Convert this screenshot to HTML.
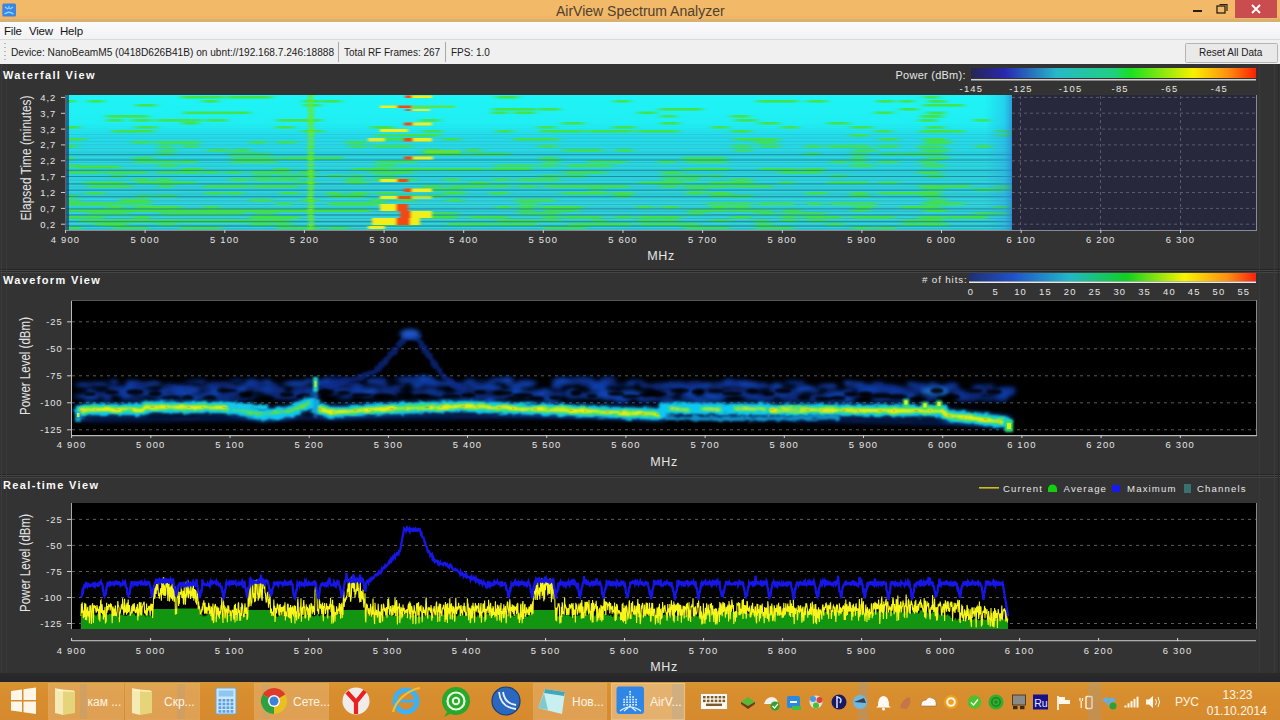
<!DOCTYPE html><html><head><meta charset="utf-8"><style>
*{margin:0;padding:0;box-sizing:border-box}
html,body{width:1280px;height:720px;overflow:hidden;background:#333;font-family:"Liberation Sans",sans-serif}
.a{position:absolute}
#title{left:0;top:0;width:1280px;height:21.5px;background:linear-gradient(#f2b968 0,#f2b968 16px,#f6b262 16px,#f4b464 18px,#f0b868 18px,#f0b868 19.5px,#d6b272 19.5px)}
#menu{left:0;top:21.5px;width:1280px;height:17.5px;background:linear-gradient(#fbfbfc,#f1f2f4);font-size:12px;color:#111}
#tool{left:0;top:39px;width:1280px;height:25px;background:#f0f0f0;border-top:1px solid #dadada;font-size:10.2px;color:#222}
#app{left:0;top:64px;width:1280px;height:609px;background:#333}
#bot{left:0;top:673px;width:1280px;height:9px;background:linear-gradient(#2a2a2a,#25252c)}
#task{left:0;top:681.5px;width:1280px;height:38.5px;background:linear-gradient(#cf9838 0,#d89430 2px,#d88e2e 10px,#d68a2e 38px)}
svg{position:absolute;left:0;top:0}
</style></head><body><div class="a" id="title"></div><div class="a" id="menu"></div><div class="a" id="tool"></div><div class="a" id="app"></div><div class="a" id="bot"></div><div class="a" id="task"></div><svg width="1280" height="720" viewBox="0 0 1280 720" font-family="Liberation Sans, sans-serif"><rect x="2.3" y="3.4" width="13.7" height="13.2" rx="1.5" fill="#3a86e4"/><path d="M5 7 L8 9 M13 7 L10 9 M9 6 V9 M4.5 14 Q9 10.5 13.5 14" stroke="#8fd4ff" stroke-width="1.3" fill="none"/><text x="556" y="15.5" font-size="14" fill="#4e4030" font-weight="normal" letter-spacing="0" text-anchor="start" >AirView Spectrum Analyzer</text><rect x="1193" y="10" width="9" height="2" fill="#2a2010"/><rect x="1217" y="6" width="8" height="7" fill="none" stroke="#2a2010" stroke-width="1.3"/><path d="M1219.5 4.5 H1227 V11" fill="none" stroke="#2a2010" stroke-width="1.2"/><rect x="1235" y="0" width="42" height="18" fill="#c94c4e"/><path d="M1252 5 L1260 13 M1260 5 L1252 13" stroke="#fff" stroke-width="1.8"/><text x="4" y="34.5" font-size="11.5" fill="#151515" font-weight="normal" letter-spacing="-0.2" text-anchor="start" >File</text><text x="29" y="34.5" font-size="11.5" fill="#151515" font-weight="normal" letter-spacing="-0.2" text-anchor="start" >View</text><text x="60" y="34.5" font-size="11.5" fill="#151515" font-weight="normal" letter-spacing="-0.2" text-anchor="start" >Help</text><rect x="4" y="43" width="2" height="1" fill="#b8b8b8"/><rect x="4" y="47" width="2" height="1" fill="#b8b8b8"/><rect x="4" y="51" width="2" height="1" fill="#b8b8b8"/><rect x="4" y="55" width="2" height="1" fill="#b8b8b8"/><rect x="4" y="59" width="2" height="1" fill="#b8b8b8"/><text x="11" y="55.8" font-size="10.15" fill="#202020" font-weight="normal" letter-spacing="0" text-anchor="start" >Device: NanoBeamM5 (0418D626B41B) on ubnt://192.168.7.246:18888</text><rect x="338" y="42" width="1" height="20" fill="#a8a8a8"/><text x="344" y="55.8" font-size="10" fill="#202020" font-weight="normal" letter-spacing="0" text-anchor="start" >Total RF Frames: 267</text><rect x="445" y="42" width="1" height="20" fill="#a8a8a8"/><text x="451" y="55.8" font-size="10" fill="#202020" font-weight="normal" letter-spacing="0" text-anchor="start" >FPS: 1.0</text><rect x="1185.5" y="43.5" width="92" height="19" rx="1" fill="#e9e9e9" stroke="#b4b4b4"/><text x="1199" y="55.8" font-size="10" fill="#202020" font-weight="normal" letter-spacing="0" text-anchor="start" >Reset All Data</text><rect x="0" y="269" width="1280" height="1" fill="#242424"/><rect x="0" y="270" width="1280" height="1" fill="#464646"/><rect x="0" y="271" width="1280" height="1" fill="#282828"/><rect x="0" y="272" width="1280" height="1" fill="#444444"/><rect x="0" y="474" width="1280" height="1" fill="#242424"/><rect x="0" y="475" width="1280" height="1" fill="#464646"/><rect x="0" y="476" width="1280" height="1" fill="#282828"/><rect x="0" y="477" width="1280" height="1" fill="#444444"/><rect x="1" y="64" width="1" height="609" fill="#3e3e3e"/><rect x="6" y="64" width="1" height="609" fill="#3a3a3a"/><rect x="1259" y="64" width="1" height="609" fill="#3a3a3a"/><rect x="1274" y="64" width="1" height="609" fill="#3c3c3c"/><rect x="1278" y="64" width="1" height="609" fill="#2a2a2a"/><text x="3" y="78.7" font-size="11" fill="#fafafa" font-weight="bold" letter-spacing="1.35" text-anchor="start" >Waterfall View</text><text x="3" y="284" font-size="11" fill="#fafafa" font-weight="bold" letter-spacing="1.35" text-anchor="start" >Waveform View</text><text x="3" y="489" font-size="11" fill="#fafafa" font-weight="bold" letter-spacing="1.35" text-anchor="start" >Real-time View</text><rect x="65" y="95" width="1191" height="135" fill="#28283c"/><rect x="1256" y="95" width="1" height="136" fill="#8a8a96"/><rect x="65" y="230" width="1192" height="1" fill="#8a8a96"/><defs><clipPath id="wfc"><rect x="66" y="95" width="946" height="135"/></clipPath><linearGradient id="wbase" x1="0" y1="0" x2="0" y2="1"><stop offset="0" stop-color="#1ef4f6"/><stop offset="0.22" stop-color="#20eef2"/><stop offset="0.30" stop-color="#26dcea"/><stop offset="0.45" stop-color="#2cd8e2"/><stop offset="1" stop-color="#36d4d8"/></linearGradient><linearGradient id="wright" x1="0" x2="1"><stop offset="0" stop-color="#2a9ae0" stop-opacity="0"/><stop offset="0.7" stop-color="#2a9ae0" stop-opacity="0.35"/><stop offset="1" stop-color="#2a80d0" stop-opacity="0.75"/></linearGradient><filter id="wb" filterUnits="userSpaceOnUse" x="50" y="85" width="980" height="160"><feGaussianBlur stdDeviation="3.8 0.75"/></filter><filter id="wb2" filterUnits="userSpaceOnUse" x="50" y="85" width="980" height="160"><feGaussianBlur stdDeviation="1.6 0.5"/></filter></defs><g clip-path="url(#wfc)"><rect x="66" y="95" width="946" height="136" fill="url(#wbase)"/><rect x="66" y="124" width="946" height="1" fill="#1a6a98" opacity="0.03"/><rect x="66" y="126" width="946" height="1" fill="#1a6a98" opacity="0.03"/><rect x="66" y="128" width="946" height="1" fill="#1a6a98" opacity="0.03"/><rect x="66" y="130" width="946" height="1" fill="#1a6a98" opacity="0.03"/><rect x="66" y="132" width="946" height="1" fill="#1a6a98" opacity="0.03"/><rect x="66" y="134" width="946" height="1" fill="#1a6a98" opacity="0.04"/><rect x="66" y="136" width="946" height="1" fill="#1a6a98" opacity="0.04"/><rect x="66" y="138" width="946" height="1" fill="#1a6a98" opacity="0.04"/><rect x="66" y="140" width="946" height="1" fill="#1a6a98" opacity="0.04"/><rect x="66" y="142" width="946" height="1" fill="#1a6a98" opacity="0.04"/><rect x="66" y="144" width="946" height="1" fill="#1a6a98" opacity="0.04"/><rect x="66" y="146" width="946" height="1" fill="#1a6a98" opacity="0.04"/><rect x="66" y="148" width="946" height="1" fill="#1a6a98" opacity="0.04"/><rect x="66" y="150" width="946" height="1" fill="#1a6a98" opacity="0.04"/><rect x="66" y="152" width="946" height="1" fill="#1a6a98" opacity="0.05"/><rect x="66" y="154" width="946" height="1" fill="#1a6a98" opacity="0.05"/><rect x="66" y="156" width="946" height="1" fill="#1a6a98" opacity="0.05"/><rect x="66" y="158" width="946" height="1" fill="#1a6a98" opacity="0.05"/><rect x="66" y="160" width="946" height="1" fill="#1a6a98" opacity="0.05"/><rect x="66" y="162" width="946" height="1" fill="#1a6a98" opacity="0.05"/><rect x="66" y="164" width="946" height="1" fill="#1a6a98" opacity="0.05"/><rect x="66" y="166" width="946" height="1" fill="#1a6a98" opacity="0.05"/><rect x="66" y="168" width="946" height="1" fill="#1a6a98" opacity="0.05"/><rect x="66" y="170" width="946" height="1" fill="#1a6a98" opacity="0.06"/><rect x="66" y="172" width="946" height="1" fill="#1a6a98" opacity="0.06"/><rect x="66" y="174" width="946" height="1" fill="#1a6a98" opacity="0.06"/><rect x="66" y="176" width="946" height="1" fill="#1a6a98" opacity="0.06"/><rect x="66" y="178" width="946" height="1" fill="#1a6a98" opacity="0.06"/><rect x="66" y="180" width="946" height="1" fill="#1a6a98" opacity="0.06"/><rect x="66" y="182" width="946" height="1" fill="#1a6a98" opacity="0.06"/><rect x="66" y="184" width="946" height="1" fill="#1a6a98" opacity="0.06"/><rect x="66" y="186" width="946" height="1" fill="#1a6a98" opacity="0.06"/><rect x="66" y="188" width="946" height="1" fill="#1a6a98" opacity="0.07"/><rect x="66" y="190" width="946" height="1" fill="#1a6a98" opacity="0.07"/><rect x="66" y="192" width="946" height="1" fill="#1a6a98" opacity="0.07"/><rect x="66" y="194" width="946" height="1" fill="#1a6a98" opacity="0.07"/><rect x="66" y="196" width="946" height="1" fill="#1a6a98" opacity="0.07"/><rect x="66" y="198" width="946" height="1" fill="#1a6a98" opacity="0.07"/><rect x="66" y="200" width="946" height="1" fill="#1a6a98" opacity="0.07"/><rect x="66" y="202" width="946" height="1" fill="#1a6a98" opacity="0.07"/><rect x="66" y="204" width="946" height="1" fill="#1a6a98" opacity="0.07"/><rect x="66" y="206" width="946" height="1" fill="#1a6a98" opacity="0.08"/><rect x="66" y="208" width="946" height="1" fill="#1a6a98" opacity="0.08"/><rect x="66" y="210" width="946" height="1" fill="#1a6a98" opacity="0.08"/><rect x="66" y="212" width="946" height="1" fill="#1a6a98" opacity="0.08"/><rect x="66" y="214" width="946" height="1" fill="#1a6a98" opacity="0.08"/><rect x="66" y="216" width="946" height="1" fill="#1a6a98" opacity="0.08"/><rect x="66" y="218" width="946" height="1" fill="#1a6a98" opacity="0.08"/><rect x="66" y="220" width="946" height="1" fill="#1a6a98" opacity="0.08"/><rect x="66" y="222" width="946" height="1" fill="#1a6a98" opacity="0.08"/><rect x="66" y="224" width="946" height="1" fill="#1a6a98" opacity="0.09"/><rect x="66" y="226" width="946" height="1" fill="#1a6a98" opacity="0.09"/><rect x="66" y="228" width="946" height="1" fill="#1a6a98" opacity="0.09"/><rect x="66" y="230" width="946" height="1" fill="#1a6a98" opacity="0.09"/><rect x="66" y="134" width="946" height="1" fill="#12708e" opacity="0.12"/><rect x="66" y="137.5" width="946" height="1" fill="#12708e" opacity="0.13"/><rect x="66" y="141" width="946" height="1" fill="#12708e" opacity="0.13"/><rect x="66" y="144.5" width="946" height="1" fill="#12708e" opacity="0.14"/><rect x="66" y="148" width="946" height="1" fill="#12708e" opacity="0.14"/><rect x="66" y="151.5" width="946" height="1" fill="#12708e" opacity="0.15"/><rect x="66" y="155" width="946" height="1" fill="#12708e" opacity="0.16"/><rect x="66" y="158.5" width="946" height="1" fill="#12708e" opacity="0.16"/><rect x="66" y="162" width="946" height="1" fill="#12708e" opacity="0.17"/><rect x="66" y="165.5" width="946" height="1" fill="#12708e" opacity="0.17"/><rect x="66" y="169" width="946" height="1" fill="#12708e" opacity="0.18"/><rect x="66" y="172.5" width="946" height="1" fill="#12708e" opacity="0.18"/><rect x="66" y="176" width="946" height="1" fill="#12708e" opacity="0.19"/><rect x="66" y="179.5" width="946" height="1" fill="#12708e" opacity="0.20"/><rect x="66" y="183" width="946" height="1" fill="#12708e" opacity="0.20"/><rect x="66" y="186.5" width="946" height="1" fill="#12708e" opacity="0.21"/><rect x="66" y="190" width="946" height="1" fill="#12708e" opacity="0.21"/><rect x="66" y="193.5" width="946" height="1" fill="#12708e" opacity="0.22"/><rect x="66" y="197" width="946" height="1" fill="#12708e" opacity="0.23"/><rect x="66" y="200.5" width="946" height="1" fill="#12708e" opacity="0.23"/><rect x="66" y="204" width="946" height="1" fill="#12708e" opacity="0.24"/><rect x="66" y="207.5" width="946" height="1" fill="#12708e" opacity="0.24"/><rect x="66" y="211" width="946" height="1" fill="#12708e" opacity="0.25"/><rect x="66" y="214.5" width="946" height="1" fill="#12708e" opacity="0.26"/><rect x="66" y="218" width="946" height="1" fill="#12708e" opacity="0.26"/><rect x="66" y="221.5" width="946" height="1" fill="#12708e" opacity="0.27"/><rect x="66" y="225" width="946" height="1" fill="#12708e" opacity="0.27"/><rect x="66" y="228.5" width="946" height="1" fill="#12708e" opacity="0.28"/><g fill="#44e23c" filter="url(#wb)" opacity="0.92"><rect x="181" y="96" width="43" height="2.6"/><rect x="227" y="96" width="45" height="2.6"/><rect x="496" y="96" width="22" height="2.6"/><rect x="924" y="96" width="15" height="2.6"/><rect x="58" y="100" width="17" height="2.6"/><rect x="88" y="100" width="16" height="2.6"/><rect x="203" y="100" width="15" height="2.6"/><rect x="303" y="100" width="17" height="2.6"/><rect x="322" y="100" width="19" height="2.6"/><rect x="614" y="100" width="16" height="2.6"/><rect x="757" y="100" width="41" height="2.6"/><rect x="807" y="100" width="20" height="2.6"/><rect x="877" y="100" width="17" height="2.6"/><rect x="899" y="100" width="15" height="2.6"/><rect x="136" y="104" width="20" height="2.6"/><rect x="304" y="104" width="17" height="2.6"/><rect x="923" y="104" width="41" height="2.6"/><rect x="493" y="108" width="43" height="2.6"/><rect x="539" y="108" width="21" height="2.6"/><rect x="659" y="108" width="43" height="2.6"/><rect x="900" y="108" width="18" height="2.6"/><rect x="184" y="111.5" width="46" height="2.6"/><rect x="230" y="111.5" width="20" height="2.6"/><rect x="492" y="111.5" width="15" height="2.6"/><rect x="514" y="111.5" width="21" height="2.6"/><rect x="638" y="111.5" width="18" height="2.6"/><rect x="875" y="111.5" width="18" height="2.6"/><rect x="106" y="115" width="42" height="2.6"/><rect x="661" y="115" width="15" height="2.6"/><rect x="731" y="115" width="18" height="2.6"/><rect x="107" y="119" width="16" height="2.6"/><rect x="131" y="119" width="22" height="2.6"/><rect x="157" y="119" width="45" height="2.6"/><rect x="206" y="119" width="21" height="2.6"/><rect x="277" y="119" width="45" height="2.6"/><rect x="420" y="119" width="20" height="2.6"/><rect x="735" y="119" width="22" height="2.6"/><rect x="974" y="119" width="16" height="2.6"/><rect x="182" y="122" width="16" height="2.6"/><rect x="562" y="122" width="22" height="2.6"/><rect x="661" y="122" width="18" height="2.6"/><rect x="759" y="122" width="20" height="2.6"/><rect x="828" y="122" width="21" height="2.6"/><rect x="63" y="126" width="17" height="2.6"/><rect x="135" y="126" width="22" height="2.6"/><rect x="276" y="126" width="18" height="2.6"/><rect x="371" y="126" width="22" height="2.6"/><rect x="538" y="126" width="17" height="2.6"/><rect x="613" y="126" width="22" height="2.6"/><rect x="712" y="126" width="16" height="2.6"/><rect x="782" y="126" width="16" height="2.6"/><rect x="851" y="126" width="21" height="2.6"/><rect x="112" y="130" width="42" height="2.6"/><rect x="302" y="130" width="21" height="2.6"/><rect x="423" y="130" width="19" height="2.6"/><rect x="496" y="130" width="17" height="2.6"/><rect x="540" y="130" width="44" height="2.6"/><rect x="587" y="130" width="46" height="2.6"/><rect x="637" y="130" width="42" height="2.6"/><rect x="731" y="130" width="20" height="2.6"/><rect x="875" y="130" width="17" height="2.6"/><rect x="923" y="130" width="41" height="2.6"/><rect x="995" y="130" width="21" height="2.6"/><rect x="376" y="134" width="16" height="2.6"/><rect x="394" y="134" width="46" height="2.6"/><rect x="850" y="134" width="18" height="2.6"/><rect x="998" y="134" width="44" height="2.6"/><rect x="63" y="138" width="22" height="2.6"/><rect x="376" y="138" width="43" height="2.6"/><rect x="444" y="138" width="16" height="2.6"/><rect x="514" y="138" width="45" height="2.6"/><rect x="734" y="138" width="45" height="2.6"/><rect x="879" y="138" width="19" height="2.6"/><rect x="132" y="141" width="18" height="2.6"/><rect x="155" y="141" width="45" height="2.6"/><rect x="250" y="141" width="16" height="2.6"/><rect x="277" y="141" width="19" height="2.6"/><rect x="346" y="141" width="20" height="2.6"/><rect x="755" y="141" width="21" height="2.6"/><rect x="60" y="145" width="17" height="2.6"/><rect x="158" y="145" width="15" height="2.6"/><rect x="182" y="145" width="17" height="2.6"/><rect x="349" y="145" width="17" height="2.6"/><rect x="372" y="145" width="40" height="2.6"/><rect x="539" y="145" width="18" height="2.6"/><rect x="732" y="145" width="20" height="2.6"/><rect x="760" y="145" width="20" height="2.6"/><rect x="805" y="145" width="16" height="2.6"/><rect x="827" y="145" width="43" height="2.6"/><rect x="878" y="145" width="21" height="2.6"/><rect x="976" y="145" width="16" height="2.6"/><rect x="160" y="149" width="16" height="2.6"/><rect x="208" y="149" width="20" height="2.6"/><rect x="232" y="149" width="19" height="2.6"/><rect x="423" y="149" width="16" height="2.6"/><rect x="466" y="149" width="15" height="2.6"/><rect x="563" y="149" width="40" height="2.6"/><rect x="616" y="149" width="17" height="2.6"/><rect x="735" y="149" width="16" height="2.6"/><rect x="854" y="149" width="22" height="2.6"/><rect x="157" y="153" width="17" height="2.6"/><rect x="228" y="153" width="42" height="2.6"/><rect x="421" y="153" width="46" height="2.6"/><rect x="470" y="153" width="40" height="2.6"/><rect x="804" y="153" width="15" height="2.6"/><rect x="850" y="153" width="18" height="2.6"/><rect x="880" y="153" width="19" height="2.6"/><rect x="901" y="153" width="44" height="2.6"/><rect x="58" y="157" width="15" height="2.6"/><rect x="133" y="157" width="21" height="2.6"/><rect x="231" y="157" width="45" height="2.6"/><rect x="279" y="157" width="45" height="2.6"/><rect x="325" y="157" width="18" height="2.6"/><rect x="540" y="157" width="18" height="2.6"/><rect x="682" y="157" width="44" height="2.6"/><rect x="851" y="157" width="15" height="2.6"/><rect x="134" y="160.5" width="42" height="2.6"/><rect x="178" y="160.5" width="19" height="2.6"/><rect x="231" y="160.5" width="45" height="2.6"/><rect x="376" y="160.5" width="40" height="2.6"/><rect x="543" y="160.5" width="17" height="2.6"/><rect x="588" y="160.5" width="21" height="2.6"/><rect x="610" y="160.5" width="16" height="2.6"/><rect x="658" y="160.5" width="18" height="2.6"/><rect x="686" y="160.5" width="41" height="2.6"/><rect x="831" y="160.5" width="16" height="2.6"/><rect x="852" y="160.5" width="15" height="2.6"/><rect x="878" y="160.5" width="20" height="2.6"/><rect x="64" y="164.5" width="15" height="2.6"/><rect x="159" y="164.5" width="18" height="2.6"/><rect x="375" y="164.5" width="21" height="2.6"/><rect x="495" y="164.5" width="39" height="2.6"/><rect x="540" y="164.5" width="17" height="2.6"/><rect x="567" y="164.5" width="45" height="2.6"/><rect x="851" y="164.5" width="22" height="2.6"/><rect x="181" y="168" width="22" height="2.6"/><rect x="274" y="168" width="15" height="2.6"/><rect x="352" y="168" width="40" height="2.6"/><rect x="397" y="168" width="43" height="2.6"/><rect x="442" y="168" width="43" height="2.6"/><rect x="490" y="168" width="41" height="2.6"/><rect x="684" y="168" width="46" height="2.6"/><rect x="760" y="168" width="19" height="2.6"/><rect x="781" y="168" width="15" height="2.6"/><rect x="802" y="168" width="22" height="2.6"/><rect x="63" y="171" width="39" height="2.6"/><rect x="106" y="171" width="41" height="2.6"/><rect x="156" y="171" width="21" height="2.6"/><rect x="178" y="171" width="22" height="2.6"/><rect x="203" y="171" width="16" height="2.6"/><rect x="226" y="171" width="16" height="2.6"/><rect x="251" y="171" width="40" height="2.6"/><rect x="298" y="171" width="18" height="2.6"/><rect x="370" y="171" width="43" height="2.6"/><rect x="564" y="171" width="42" height="2.6"/><rect x="662" y="171" width="20" height="2.6"/><rect x="778" y="171" width="44" height="2.6"/><rect x="110" y="175" width="15" height="2.6"/><rect x="252" y="175" width="21" height="2.6"/><rect x="278" y="175" width="39" height="2.6"/><rect x="327" y="175" width="17" height="2.6"/><rect x="348" y="175" width="16" height="2.6"/><rect x="376" y="175" width="22" height="2.6"/><rect x="540" y="175" width="20" height="2.6"/><rect x="565" y="175" width="21" height="2.6"/><rect x="661" y="175" width="42" height="2.6"/><rect x="708" y="175" width="16" height="2.6"/><rect x="831" y="175" width="15" height="2.6"/><rect x="926" y="175" width="17" height="2.6"/><rect x="133" y="178.5" width="17" height="2.6"/><rect x="156" y="178.5" width="16" height="2.6"/><rect x="229" y="178.5" width="20" height="2.6"/><rect x="254" y="178.5" width="45" height="2.6"/><rect x="346" y="178.5" width="18" height="2.6"/><rect x="373" y="178.5" width="43" height="2.6"/><rect x="444" y="178.5" width="16" height="2.6"/><rect x="493" y="178.5" width="17" height="2.6"/><rect x="517" y="178.5" width="42" height="2.6"/><rect x="664" y="178.5" width="15" height="2.6"/><rect x="683" y="178.5" width="16" height="2.6"/><rect x="731" y="178.5" width="20" height="2.6"/><rect x="84" y="181.5" width="41" height="2.6"/><rect x="136" y="181.5" width="46" height="2.6"/><rect x="178" y="181.5" width="18" height="2.6"/><rect x="298" y="181.5" width="19" height="2.6"/><rect x="346" y="181.5" width="21" height="2.6"/><rect x="469" y="181.5" width="20" height="2.6"/><rect x="639" y="181.5" width="45" height="2.6"/><rect x="709" y="181.5" width="44" height="2.6"/><rect x="779" y="181.5" width="15" height="2.6"/><rect x="828" y="181.5" width="40" height="2.6"/><rect x="879" y="181.5" width="19" height="2.6"/><rect x="88" y="185" width="44" height="2.6"/><rect x="158" y="185" width="15" height="2.6"/><rect x="204" y="185" width="45" height="2.6"/><rect x="253" y="185" width="45" height="2.6"/><rect x="422" y="185" width="20" height="2.6"/><rect x="448" y="185" width="42" height="2.6"/><rect x="493" y="185" width="17" height="2.6"/><rect x="518" y="185" width="19" height="2.6"/><rect x="544" y="185" width="46" height="2.6"/><rect x="590" y="185" width="22" height="2.6"/><rect x="611" y="185" width="18" height="2.6"/><rect x="660" y="185" width="18" height="2.6"/><rect x="683" y="185" width="46" height="2.6"/><rect x="732" y="185" width="40" height="2.6"/><rect x="925" y="185" width="46" height="2.6"/><rect x="995" y="185" width="41" height="2.6"/><rect x="424" y="188.5" width="39" height="2.6"/><rect x="589" y="188.5" width="15" height="2.6"/><rect x="687" y="188.5" width="20" height="2.6"/><rect x="974" y="188.5" width="41" height="2.6"/><rect x="86" y="192" width="18" height="2.6"/><rect x="205" y="192" width="18" height="2.6"/><rect x="226" y="192" width="17" height="2.6"/><rect x="280" y="192" width="19" height="2.6"/><rect x="326" y="192" width="15" height="2.6"/><rect x="350" y="192" width="18" height="2.6"/><rect x="376" y="192" width="21" height="2.6"/><rect x="443" y="192" width="22" height="2.6"/><rect x="490" y="192" width="18" height="2.6"/><rect x="562" y="192" width="46" height="2.6"/><rect x="613" y="192" width="20" height="2.6"/><rect x="686" y="192" width="18" height="2.6"/><rect x="709" y="192" width="22" height="2.6"/><rect x="806" y="192" width="21" height="2.6"/><rect x="851" y="192" width="16" height="2.6"/><rect x="879" y="192" width="39" height="2.6"/><rect x="63" y="195" width="15" height="2.6"/><rect x="136" y="195" width="15" height="2.6"/><rect x="156" y="195" width="21" height="2.6"/><rect x="398" y="195" width="20" height="2.6"/><rect x="423" y="195" width="21" height="2.6"/><rect x="613" y="195" width="18" height="2.6"/><rect x="710" y="195" width="42" height="2.6"/><rect x="851" y="195" width="19" height="2.6"/><rect x="58" y="199" width="21" height="2.6"/><rect x="250" y="199" width="22" height="2.6"/><rect x="301" y="199" width="17" height="2.6"/><rect x="370" y="199" width="15" height="2.6"/><rect x="399" y="199" width="15" height="2.6"/><rect x="446" y="199" width="17" height="2.6"/><rect x="515" y="199" width="40" height="2.6"/><rect x="63" y="202.5" width="43" height="2.6"/><rect x="107" y="202.5" width="44" height="2.6"/><rect x="276" y="202.5" width="16" height="2.6"/><rect x="328" y="202.5" width="45" height="2.6"/><rect x="370" y="202.5" width="16" height="2.6"/><rect x="519" y="202.5" width="18" height="2.6"/><rect x="707" y="202.5" width="45" height="2.6"/><rect x="759" y="202.5" width="19" height="2.6"/><rect x="779" y="202.5" width="15" height="2.6"/><rect x="807" y="202.5" width="15" height="2.6"/><rect x="831" y="202.5" width="46" height="2.6"/><rect x="925" y="202.5" width="39" height="2.6"/><rect x="107" y="206" width="16" height="2.6"/><rect x="135" y="206" width="46" height="2.6"/><rect x="204" y="206" width="15" height="2.6"/><rect x="496" y="206" width="15" height="2.6"/><rect x="519" y="206" width="16" height="2.6"/><rect x="541" y="206" width="21" height="2.6"/><rect x="562" y="206" width="21" height="2.6"/><rect x="637" y="206" width="16" height="2.6"/><rect x="662" y="206" width="17" height="2.6"/><rect x="711" y="206" width="18" height="2.6"/><rect x="733" y="206" width="16" height="2.6"/><rect x="855" y="206" width="19" height="2.6"/><rect x="901" y="206" width="39" height="2.6"/><rect x="994" y="206" width="21" height="2.6"/><rect x="60" y="209" width="45" height="2.6"/><rect x="202" y="209" width="21" height="2.6"/><rect x="228" y="209" width="42" height="2.6"/><rect x="278" y="209" width="15" height="2.6"/><rect x="299" y="209" width="44" height="2.6"/><rect x="350" y="209" width="16" height="2.6"/><rect x="518" y="209" width="16" height="2.6"/><rect x="544" y="209" width="18" height="2.6"/><rect x="562" y="209" width="17" height="2.6"/><rect x="688" y="209" width="40" height="2.6"/><rect x="731" y="209" width="41" height="2.6"/><rect x="783" y="209" width="18" height="2.6"/><rect x="851" y="209" width="18" height="2.6"/><rect x="928" y="209" width="19" height="2.6"/><rect x="88" y="212.5" width="41" height="2.6"/><rect x="228" y="212.5" width="16" height="2.6"/><rect x="254" y="212.5" width="22" height="2.6"/><rect x="420" y="212.5" width="39" height="2.6"/><rect x="519" y="212.5" width="42" height="2.6"/><rect x="688" y="212.5" width="17" height="2.6"/><rect x="756" y="212.5" width="20" height="2.6"/><rect x="783" y="212.5" width="21" height="2.6"/><rect x="804" y="212.5" width="21" height="2.6"/><rect x="973" y="212.5" width="39" height="2.6"/><rect x="63" y="216" width="21" height="2.6"/><rect x="86" y="216" width="17" height="2.6"/><rect x="133" y="216" width="17" height="2.6"/><rect x="418" y="216" width="39" height="2.6"/><rect x="469" y="216" width="39" height="2.6"/><rect x="543" y="216" width="15" height="2.6"/><rect x="563" y="216" width="39" height="2.6"/><rect x="615" y="216" width="17" height="2.6"/><rect x="638" y="216" width="44" height="2.6"/><rect x="731" y="216" width="20" height="2.6"/><rect x="781" y="216" width="15" height="2.6"/><rect x="803" y="216" width="40" height="2.6"/><rect x="851" y="216" width="44" height="2.6"/><rect x="947" y="216" width="40" height="2.6"/><rect x="111" y="219.5" width="39" height="2.6"/><rect x="496" y="219.5" width="44" height="2.6"/><rect x="543" y="219.5" width="18" height="2.6"/><rect x="592" y="219.5" width="15" height="2.6"/><rect x="637" y="219.5" width="18" height="2.6"/><rect x="658" y="219.5" width="20" height="2.6"/><rect x="710" y="219.5" width="21" height="2.6"/><rect x="754" y="219.5" width="15" height="2.6"/><rect x="781" y="219.5" width="16" height="2.6"/><rect x="808" y="219.5" width="17" height="2.6"/><rect x="903" y="219.5" width="40" height="2.6"/><rect x="110" y="223" width="17" height="2.6"/><rect x="159" y="223" width="16" height="2.6"/><rect x="251" y="223" width="20" height="2.6"/><rect x="275" y="223" width="17" height="2.6"/><rect x="373" y="223" width="45" height="2.6"/><rect x="447" y="223" width="46" height="2.6"/><rect x="496" y="223" width="41" height="2.6"/><rect x="568" y="223" width="22" height="2.6"/><rect x="588" y="223" width="44" height="2.6"/><rect x="640" y="223" width="46" height="2.6"/><rect x="684" y="223" width="15" height="2.6"/><rect x="756" y="223" width="16" height="2.6"/><rect x="826" y="223" width="18" height="2.6"/><rect x="902" y="223" width="17" height="2.6"/><rect x="64" y="226.5" width="18" height="2.6"/><rect x="112" y="226.5" width="20" height="2.6"/><rect x="131" y="226.5" width="17" height="2.6"/><rect x="179" y="226.5" width="43" height="2.6"/><rect x="277" y="226.5" width="44" height="2.6"/><rect x="328" y="226.5" width="20" height="2.6"/><rect x="543" y="226.5" width="44" height="2.6"/><rect x="684" y="226.5" width="46" height="2.6"/><rect x="755" y="226.5" width="39" height="2.6"/><rect x="852" y="226.5" width="20" height="2.6"/><rect x="876" y="226.5" width="20" height="2.6"/><rect x="928" y="100" width="18" height="2.8"/><rect x="927" y="111.5" width="18" height="2.8"/><rect x="921" y="115" width="22" height="2.8"/><rect x="919" y="119" width="18" height="2.8"/><rect x="926" y="126" width="18" height="2.8"/><rect x="920" y="130" width="26" height="2.8"/><rect x="924" y="138" width="22" height="2.8"/><rect x="925" y="141" width="26" height="2.8"/><rect x="918" y="145" width="26" height="2.8"/><rect x="922" y="149" width="26" height="2.8"/><rect x="919" y="153" width="18" height="2.8"/><rect x="926" y="157" width="22" height="2.8"/><rect x="919" y="160.5" width="18" height="2.8"/><rect x="923" y="164.5" width="22" height="2.8"/><rect x="918" y="171" width="22" height="2.8"/><rect x="926" y="175" width="18" height="2.8"/><rect x="919" y="185" width="26" height="2.8"/><rect x="922" y="188.5" width="22" height="2.8"/><rect x="918" y="192" width="22" height="2.8"/><rect x="923" y="195" width="18" height="2.8"/><rect x="928" y="199" width="18" height="2.8"/><rect x="923" y="202.5" width="26" height="2.8"/><rect x="924" y="209" width="22" height="2.8"/><rect x="919" y="216" width="26" height="2.8"/><rect x="923" y="219.5" width="18" height="2.8"/><rect x="921" y="223" width="26" height="2.8"/><rect x="80" y="209" width="290" height="3"/><rect x="80" y="219.5" width="210" height="3"/><rect x="76" y="165.5" width="44" height="3"/><rect x="70" y="202.5" width="40" height="3"/><rect x="120" y="199" width="30" height="3"/><rect x="160" y="212.5" width="70" height="3"/><rect x="96" y="223" width="29" height="3"/><rect x="330" y="195" width="35" height="3"/><rect x="335" y="202.5" width="35" height="3"/><rect x="250" y="216" width="50" height="3"/></g><g fill="#106080" opacity="0.5"><rect x="66" y="153.9" width="946" height="1.2"/><rect x="66" y="159.4" width="946" height="1.2"/><rect x="66" y="169.9" width="946" height="1.2"/><rect x="66" y="175.9" width="946" height="1.2"/><rect x="66" y="183.4" width="946" height="1.2"/><rect x="66" y="189.4" width="946" height="1.2"/><rect x="66" y="195.9" width="946" height="1.2"/><rect x="66" y="208.4" width="946" height="1.2"/><rect x="66" y="214.4" width="946" height="1.2"/><rect x="66" y="220.9" width="946" height="1.2"/><rect x="66" y="225.6" width="946" height="1.2"/></g><rect x="66" y="95" width="3" height="136" fill="#183a68" opacity="0.7"/><g fill="#6aea20" filter="url(#wb2)"><rect x="308.01196544230584" y="95" width="5.5" height="2.6" opacity="0.97"/><rect x="307.95254006593944" y="98" width="5.5" height="2.6" opacity="0.81"/><rect x="307.91152205300375" y="101" width="5.5" height="2.6" opacity="0.90"/><rect x="307.75988994172627" y="104" width="5.5" height="2.6" opacity="0.81"/><rect x="307.80445532133496" y="107" width="5.5" height="2.6" opacity="0.82"/><rect x="308.2625932668912" y="110" width="5.5" height="2.6" opacity="0.90"/><rect x="308.4423025340755" y="113" width="5.5" height="2.6" opacity="0.95"/><rect x="307.69268164399887" y="116" width="5.5" height="2.6" opacity="0.95"/><rect x="307.80141997606125" y="119" width="5.5" height="2.6" opacity="0.91"/><rect x="308.08730456612886" y="122" width="5.5" height="2.6" opacity="0.98"/><rect x="308.1344743181531" y="125" width="5.5" height="2.6" opacity="0.87"/><rect x="308.42102960126715" y="128" width="5.5" height="2.6" opacity="0.90"/><rect x="308.2898460297328" y="131" width="5.5" height="2.6" opacity="0.99"/><rect x="308.03265280785183" y="134" width="5.5" height="2.6" opacity="0.92"/><rect x="308.0557226367699" y="137" width="5.5" height="2.6" opacity="0.88"/><rect x="308.38904670356544" y="140" width="5.5" height="2.6" opacity="0.82"/><rect x="308.2046954965976" y="143" width="5.5" height="2.6" opacity="0.96"/><rect x="307.8697339520991" y="146" width="5.5" height="2.6" opacity="0.91"/><rect x="307.7789043892944" y="149" width="5.5" height="2.6" opacity="0.76"/><rect x="308.487647055175" y="152" width="5.5" height="2.6" opacity="0.91"/><rect x="307.5978484139301" y="155" width="5.5" height="2.6" opacity="0.85"/><rect x="307.8121546670477" y="158" width="5.5" height="2.6" opacity="0.90"/><rect x="308.2829621593553" y="161" width="5.5" height="2.6" opacity="0.78"/><rect x="308.1316451295438" y="164" width="5.5" height="2.6" opacity="0.86"/><rect x="308.228036628205" y="167" width="5.5" height="2.6" opacity="0.83"/><rect x="307.9009628907548" y="170" width="5.5" height="2.6" opacity="0.87"/><rect x="307.86444228585344" y="173" width="5.5" height="2.6" opacity="0.92"/><rect x="308.3126797678951" y="176" width="5.5" height="2.6" opacity="0.91"/><rect x="307.52687896437874" y="179" width="5.5" height="2.6" opacity="0.89"/><rect x="308.03598713513856" y="182" width="5.5" height="2.6" opacity="0.92"/><rect x="308.20688023285965" y="185" width="5.5" height="2.6" opacity="0.93"/><rect x="307.91818567611915" y="188" width="5.5" height="2.6" opacity="0.85"/><rect x="308.07128089271964" y="191" width="5.5" height="2.6" opacity="0.96"/><rect x="307.6953437152246" y="194" width="5.5" height="2.6" opacity="0.98"/><rect x="307.5753051545227" y="197" width="5.5" height="2.6" opacity="0.98"/><rect x="308.2158452252488" y="200" width="5.5" height="2.6" opacity="0.91"/><rect x="308.2472793335681" y="203" width="5.5" height="2.6" opacity="0.84"/><rect x="308.31533870577357" y="206" width="5.5" height="2.6" opacity="0.96"/><rect x="307.5974456583638" y="209" width="5.5" height="2.6" opacity="0.97"/><rect x="307.66478614904776" y="212" width="5.5" height="2.6" opacity="0.89"/><rect x="308.02699965112777" y="215" width="5.5" height="2.6" opacity="0.98"/><rect x="308.13932090060615" y="218" width="5.5" height="2.6" opacity="0.92"/><rect x="308.441676374667" y="221" width="5.5" height="2.6" opacity="0.76"/><rect x="308.23196187215564" y="224" width="5.5" height="2.6" opacity="0.95"/><rect x="307.8496923804216" y="227" width="5.5" height="2.6" opacity="0.88"/><rect x="307.61102897699743" y="230" width="5.5" height="2.6" opacity="0.95"/></g><g filter="url(#wb2)"><rect x="412" y="95.5" width="20" height="2.5" fill="#f2ee1c" opacity="1"/><rect x="405" y="95.5" width="7" height="2.5" fill="#f04a18" opacity="1"/><rect x="380" y="105.5" width="17" height="2.5" fill="#f2ee1c" opacity="1"/><rect x="397" y="105.5" width="15" height="2.5" fill="#f04a18" opacity="1"/><rect x="412" y="105.5" width="43" height="2.5" fill="#66e030" opacity="0.8"/><rect x="412" y="109" width="18" height="2" fill="#f2ee1c" opacity="1"/><rect x="405" y="109" width="7" height="2" fill="#f04a18" opacity="0.8"/><rect x="413" y="122.5" width="19" height="3" fill="#f2ee1c" opacity="1"/><rect x="404" y="122.5" width="9" height="3" fill="#f04a18" opacity="1"/><rect x="380" y="129" width="28" height="3" fill="#f2ee1c" opacity="1"/><rect x="368" y="138" width="17" height="3.5" fill="#f2ee1c" opacity="0.9"/><rect x="413" y="138" width="19" height="3.5" fill="#f2ee1c" opacity="1"/><rect x="404" y="138" width="9" height="3.5" fill="#f04a18" opacity="1"/><rect x="413" y="156.5" width="20" height="3" fill="#f2ee1c" opacity="1"/><rect x="404" y="156.5" width="9" height="3" fill="#f04a18" opacity="1"/><rect x="380" y="179" width="17" height="3" fill="#f2ee1c" opacity="1"/><rect x="397" y="179" width="11" height="3" fill="#f04a18" opacity="1"/><rect x="412" y="188.5" width="20" height="3.5" fill="#f2ee1c" opacity="1"/><rect x="404" y="188.5" width="8" height="3.5" fill="#f04a18" opacity="1"/><rect x="380" y="196" width="17" height="3" fill="#f2ee1c" opacity="1"/><rect x="397" y="196" width="15" height="3" fill="#f04a18" opacity="1"/><rect x="412" y="196" width="20" height="3" fill="#f2ee1c" opacity="0.7"/><rect x="380" y="204" width="16" height="7" fill="#f2ee1c" opacity="1"/><rect x="396" y="204" width="12" height="7" fill="#f04a18" opacity="1"/><rect x="411" y="211" width="21" height="7" fill="#f2ee1c" opacity="1"/><rect x="400" y="211" width="11" height="7" fill="#f04a18" opacity="1"/><rect x="372" y="218" width="24" height="7" fill="#f2ee1c" opacity="1"/><rect x="396" y="218" width="14" height="7" fill="#f04a18" opacity="1"/><rect x="410" y="218" width="10" height="7" fill="#f2ee1c" opacity="1"/><rect x="368" y="226" width="17" height="3" fill="#f2ee1c" opacity="1"/><rect x="425" y="150" width="35" height="3" fill="#66e030" opacity="0.9"/></g><rect x="985" y="95" width="27" height="136" fill="url(#wright)"/></g><line x1="1020.5" x2="1020.5" y1="96" y2="230" stroke="#5a5a70" stroke-dasharray="3 3"/><line x1="1100.5" x2="1100.5" y1="96" y2="230" stroke="#5a5a70" stroke-dasharray="3 3"/><line x1="1180.5" x2="1180.5" y1="96" y2="230" stroke="#5a5a70" stroke-dasharray="3 3"/><line x1="1012" x2="1256" y1="97.4" y2="97.4" stroke="#5a5a70" stroke-dasharray="3 3"/><line x1="1012" x2="1256" y1="113.2" y2="113.2" stroke="#5a5a70" stroke-dasharray="3 3"/><line x1="1012" x2="1256" y1="129.1" y2="129.1" stroke="#5a5a70" stroke-dasharray="3 3"/><line x1="1012" x2="1256" y1="144.9" y2="144.9" stroke="#5a5a70" stroke-dasharray="3 3"/><line x1="1012" x2="1256" y1="160.8" y2="160.8" stroke="#5a5a70" stroke-dasharray="3 3"/><line x1="1012" x2="1256" y1="176.7" y2="176.7" stroke="#5a5a70" stroke-dasharray="3 3"/><line x1="1012" x2="1256" y1="192.5" y2="192.5" stroke="#5a5a70" stroke-dasharray="3 3"/><line x1="1012" x2="1256" y1="208.4" y2="208.4" stroke="#5a5a70" stroke-dasharray="3 3"/><line x1="1012" x2="1256" y1="224.2" y2="224.2" stroke="#5a5a70" stroke-dasharray="3 3"/><rect x="65" y="95" width="1" height="136" fill="#6a5a72"/><rect x="61" y="96.9" width="4" height="1" fill="#ccc"/><text x="56" y="100.80000000000001" font-size="9.4" fill="#e6e6e6" font-weight="normal" letter-spacing="0.9" text-anchor="end" >4,2</text><rect x="61" y="112.8" width="4" height="1" fill="#ccc"/><text x="56" y="116.65" font-size="9.4" fill="#e6e6e6" font-weight="normal" letter-spacing="0.9" text-anchor="end" >3,7</text><rect x="61" y="128.6" width="4" height="1" fill="#ccc"/><text x="56" y="132.5" font-size="9.4" fill="#e6e6e6" font-weight="normal" letter-spacing="0.9" text-anchor="end" >3,2</text><rect x="61" y="144.4" width="4" height="1" fill="#ccc"/><text x="56" y="148.35" font-size="9.4" fill="#e6e6e6" font-weight="normal" letter-spacing="0.9" text-anchor="end" >2,7</text><rect x="61" y="160.3" width="4" height="1" fill="#ccc"/><text x="56" y="164.20000000000002" font-size="9.4" fill="#e6e6e6" font-weight="normal" letter-spacing="0.9" text-anchor="end" >2,2</text><rect x="61" y="176.2" width="4" height="1" fill="#ccc"/><text x="56" y="180.05" font-size="9.4" fill="#e6e6e6" font-weight="normal" letter-spacing="0.9" text-anchor="end" >1,7</text><rect x="61" y="192.0" width="4" height="1" fill="#ccc"/><text x="56" y="195.9" font-size="9.4" fill="#e6e6e6" font-weight="normal" letter-spacing="0.9" text-anchor="end" >1,2</text><rect x="61" y="207.9" width="4" height="1" fill="#ccc"/><text x="56" y="211.75000000000003" font-size="9.4" fill="#e6e6e6" font-weight="normal" letter-spacing="0.9" text-anchor="end" >0,7</text><rect x="61" y="223.7" width="4" height="1" fill="#ccc"/><text x="56" y="227.6" font-size="9.4" fill="#e6e6e6" font-weight="normal" letter-spacing="0.9" text-anchor="end" >0,2</text><text transform="translate(30.5,158) rotate(-90)" font-size="14" fill="#e6e6e6" text-anchor="middle" textLength="125" lengthAdjust="spacingAndGlyphs">Elapsed Time (minutes)</text><rect x="65.0" y="230" width="1" height="3" fill="#ccc"/><text x="65.5" y="242.8" font-size="9.4" fill="#e6e6e6" font-weight="normal" letter-spacing="1.2" text-anchor="middle" >4 900</text><rect x="144.6" y="230" width="1" height="3" fill="#ccc"/><text x="145.14" y="242.8" font-size="9.4" fill="#e6e6e6" font-weight="normal" letter-spacing="1.2" text-anchor="middle" >5 000</text><rect x="224.3" y="230" width="1" height="3" fill="#ccc"/><text x="224.78" y="242.8" font-size="9.4" fill="#e6e6e6" font-weight="normal" letter-spacing="1.2" text-anchor="middle" >5 100</text><rect x="303.9" y="230" width="1" height="3" fill="#ccc"/><text x="304.42" y="242.8" font-size="9.4" fill="#e6e6e6" font-weight="normal" letter-spacing="1.2" text-anchor="middle" >5 200</text><rect x="383.6" y="230" width="1" height="3" fill="#ccc"/><text x="384.06" y="242.8" font-size="9.4" fill="#e6e6e6" font-weight="normal" letter-spacing="1.2" text-anchor="middle" >5 300</text><rect x="463.2" y="230" width="1" height="3" fill="#ccc"/><text x="463.7" y="242.8" font-size="9.4" fill="#e6e6e6" font-weight="normal" letter-spacing="1.2" text-anchor="middle" >5 400</text><rect x="542.8" y="230" width="1" height="3" fill="#ccc"/><text x="543.34" y="242.8" font-size="9.4" fill="#e6e6e6" font-weight="normal" letter-spacing="1.2" text-anchor="middle" >5 500</text><rect x="622.5" y="230" width="1" height="3" fill="#ccc"/><text x="622.98" y="242.8" font-size="9.4" fill="#e6e6e6" font-weight="normal" letter-spacing="1.2" text-anchor="middle" >5 600</text><rect x="702.1" y="230" width="1" height="3" fill="#ccc"/><text x="702.62" y="242.8" font-size="9.4" fill="#e6e6e6" font-weight="normal" letter-spacing="1.2" text-anchor="middle" >5 700</text><rect x="781.8" y="230" width="1" height="3" fill="#ccc"/><text x="782.26" y="242.8" font-size="9.4" fill="#e6e6e6" font-weight="normal" letter-spacing="1.2" text-anchor="middle" >5 800</text><rect x="861.4" y="230" width="1" height="3" fill="#ccc"/><text x="861.9" y="242.8" font-size="9.4" fill="#e6e6e6" font-weight="normal" letter-spacing="1.2" text-anchor="middle" >5 900</text><rect x="941.0" y="230" width="1" height="3" fill="#ccc"/><text x="941.54" y="242.8" font-size="9.4" fill="#e6e6e6" font-weight="normal" letter-spacing="1.2" text-anchor="middle" >6 000</text><rect x="1020.7" y="230" width="1" height="3" fill="#ccc"/><text x="1021.1800000000001" y="242.8" font-size="9.4" fill="#e6e6e6" font-weight="normal" letter-spacing="1.2" text-anchor="middle" >6 100</text><rect x="1100.3" y="230" width="1" height="3" fill="#ccc"/><text x="1100.82" y="242.8" font-size="9.4" fill="#e6e6e6" font-weight="normal" letter-spacing="1.2" text-anchor="middle" >6 200</text><rect x="1180.0" y="230" width="1" height="3" fill="#ccc"/><text x="1180.46" y="242.8" font-size="9.4" fill="#e6e6e6" font-weight="normal" letter-spacing="1.2" text-anchor="middle" >6 300</text><text x="661" y="260" font-size="12.5" fill="#e6e6e6" font-weight="normal" letter-spacing="0.6" text-anchor="middle" >MHz</text><text x="895.5" y="79" font-size="11" fill="#e6e6e6" font-weight="normal" letter-spacing="0.25" text-anchor="start" >Power (dBm):</text><defs><linearGradient id="pw" x1="0" x2="1"><stop offset="0" stop-color="#262650"/><stop offset="0.12" stop-color="#2828b0"/><stop offset="0.3" stop-color="#28b8c8"/><stop offset="0.5" stop-color="#20d080"/><stop offset="0.56" stop-color="#18e020"/><stop offset="0.78" stop-color="#f8f000"/><stop offset="0.9" stop-color="#ff9010"/><stop offset="1" stop-color="#ff2000"/></linearGradient><linearGradient id="hg" x1="0" x2="1"><stop offset="0" stop-color="#203070"/><stop offset="0.15" stop-color="#2050c8"/><stop offset="0.35" stop-color="#20b8c8"/><stop offset="0.55" stop-color="#10d020"/><stop offset="0.75" stop-color="#f8f400"/><stop offset="0.9" stop-color="#ff9010"/><stop offset="1" stop-color="#ff2010"/></linearGradient></defs><rect x="971" y="68" width="285" height="10" fill="url(#pw)"/><rect x="971" y="79" width="285" height="1.5" fill="#d0d0d0"/><text x="971.4" y="92.2" font-size="9.4" fill="#e6e6e6" font-weight="normal" letter-spacing="1.2" text-anchor="middle" >-145</text><text x="1021.0" y="92.2" font-size="9.4" fill="#e6e6e6" font-weight="normal" letter-spacing="1.2" text-anchor="middle" >-125</text><text x="1070.6" y="92.2" font-size="9.4" fill="#e6e6e6" font-weight="normal" letter-spacing="1.2" text-anchor="middle" >-105</text><text x="1120.2" y="92.2" font-size="9.4" fill="#e6e6e6" font-weight="normal" letter-spacing="1.2" text-anchor="middle" >-85</text><text x="1169.8" y="92.2" font-size="9.4" fill="#e6e6e6" font-weight="normal" letter-spacing="1.2" text-anchor="middle" >-65</text><text x="1219.4" y="92.2" font-size="9.4" fill="#e6e6e6" font-weight="normal" letter-spacing="1.2" text-anchor="middle" >-45</text><rect x="71" y="300" width="1185" height="135" fill="#000"/><rect x="71" y="300" width="1" height="136" fill="#bbb"/><rect x="1256" y="300" width="1" height="136" fill="#888"/><rect x="71" y="300" width="1185" height="1" fill="#555"/><rect x="71" y="435" width="1186" height="1.2" fill="#bbb"/><line x1="72" x2="1256" y1="321.8" y2="321.8" stroke="#5c5c5c" stroke-width="1" stroke-dasharray="3 4"/><rect x="67" y="321.3" width="4" height="1" fill="#ccc"/><text x="62.5" y="325.2" font-size="9.4" fill="#e6e6e6" font-weight="normal" letter-spacing="0.9" text-anchor="end" >-25</text><line x1="72" x2="1256" y1="348.8" y2="348.8" stroke="#5c5c5c" stroke-width="1" stroke-dasharray="3 4"/><rect x="67" y="348.3" width="4" height="1" fill="#ccc"/><text x="62.5" y="352.2" font-size="9.4" fill="#e6e6e6" font-weight="normal" letter-spacing="0.9" text-anchor="end" >-50</text><line x1="72" x2="1256" y1="375.8" y2="375.8" stroke="#5c5c5c" stroke-width="1" stroke-dasharray="3 4"/><rect x="67" y="375.3" width="4" height="1" fill="#ccc"/><text x="62.5" y="379.2" font-size="9.4" fill="#e6e6e6" font-weight="normal" letter-spacing="0.9" text-anchor="end" >-75</text><line x1="72" x2="1256" y1="402.8" y2="402.8" stroke="#5c5c5c" stroke-width="1" stroke-dasharray="3 4"/><rect x="67" y="402.3" width="4" height="1" fill="#ccc"/><text x="62.5" y="406.2" font-size="9.4" fill="#e6e6e6" font-weight="normal" letter-spacing="0.9" text-anchor="end" >-100</text><line x1="72" x2="1256" y1="429.8" y2="429.8" stroke="#5c5c5c" stroke-width="1" stroke-dasharray="3 4"/><rect x="67" y="429.3" width="4" height="1" fill="#ccc"/><text x="62.5" y="433.2" font-size="9.4" fill="#e6e6e6" font-weight="normal" letter-spacing="0.9" text-anchor="end" >-125</text><defs><clipPath id="wvc"><rect x="72" y="301" width="1184" height="134"/></clipPath><filter id="vb1" filterUnits="userSpaceOnUse" x="60" y="290" width="1210" height="160"><feGaussianBlur stdDeviation="2.6 2"/></filter><filter id="vb2" filterUnits="userSpaceOnUse" x="60" y="290" width="1210" height="160"><feGaussianBlur stdDeviation="1.2 1"/></filter><filter id="vb3" filterUnits="userSpaceOnUse" x="60" y="290" width="1210" height="160"><feGaussianBlur stdDeviation="0.7"/></filter><filter id="vdisp" filterUnits="userSpaceOnUse" x="60" y="290" width="1210" height="160"><feTurbulence type="fractalNoise" baseFrequency="0.09 0.35" numOctaves="2" seed="4" result="n"/><feDisplacementMap in="SourceGraphic" in2="n" scale="5" xChannelSelector="R" yChannelSelector="G" result="d"/><feGaussianBlur in="d" stdDeviation="0.9"/></filter><filter id="vdisp2" filterUnits="userSpaceOnUse" x="60" y="290" width="1210" height="160"><feTurbulence type="fractalNoise" baseFrequency="0.12 0.5" numOctaves="2" seed="9" result="n"/><feDisplacementMap in="SourceGraphic" in2="n" scale="7" xChannelSelector="R" yChannelSelector="G" result="d"/><feGaussianBlur in="d" stdDeviation="1.2"/></filter></defs><g clip-path="url(#wvc)"><g filter="url(#vb1)" opacity="0.95"><ellipse cx="84" cy="384.8" rx="8.8" ry="2.5" fill="#1248c0"/><ellipse cx="84" cy="396.3" rx="10.9" ry="2.2" fill="#0c3498"/><ellipse cx="84" cy="385.1" rx="7.7" ry="2.7" fill="#0c3090"/><ellipse cx="91" cy="391.9" rx="4.5" ry="2.7" fill="#1040b0"/><ellipse cx="91" cy="397.7" rx="8.9" ry="2.2" fill="#1248c0"/><ellipse cx="91" cy="392.4" rx="4.2" ry="2.0" fill="#1248c0"/><ellipse cx="99" cy="393.0" rx="10.6" ry="1.5" fill="#0c3090"/><ellipse cx="99" cy="384.0" rx="10.5" ry="2.2" fill="#0c3498"/><ellipse cx="99" cy="394.3" rx="6.8" ry="1.7" fill="#0c3090"/><ellipse cx="107" cy="395.9" rx="4.5" ry="1.8" fill="#0c3498"/><ellipse cx="107" cy="398.8" rx="4.5" ry="2.3" fill="#0c3498"/><ellipse cx="107" cy="396.0" rx="5.4" ry="2.9" fill="#0c3498"/><ellipse cx="114" cy="388.0" rx="7.2" ry="2.1" fill="#1248c0"/><ellipse cx="114" cy="388.4" rx="4.2" ry="1.6" fill="#1248c0"/><ellipse cx="114" cy="381.7" rx="4.5" ry="2.4" fill="#0c3498"/><ellipse cx="120" cy="392.2" rx="7.9" ry="2.4" fill="#1040b0"/><ellipse cx="120" cy="393.3" rx="8.4" ry="2.8" fill="#0a2a7a"/><ellipse cx="120" cy="387.6" rx="8.2" ry="2.0" fill="#0c3090"/><ellipse cx="126" cy="397.7" rx="5.2" ry="2.1" fill="#1040b0"/><ellipse cx="126" cy="393.5" rx="8.7" ry="2.8" fill="#1040b0"/><ellipse cx="126" cy="388.7" rx="10.9" ry="2.9" fill="#0c3498"/><ellipse cx="131" cy="387.6" rx="7.5" ry="2.5" fill="#1040b0"/><ellipse cx="131" cy="384.4" rx="4.5" ry="2.7" fill="#1248c0"/><ellipse cx="131" cy="382.5" rx="6.0" ry="2.8" fill="#0a2a7a"/><ellipse cx="136" cy="385.8" rx="6.8" ry="2.8" fill="#1040b0"/><ellipse cx="136" cy="398.7" rx="9.2" ry="2.2" fill="#0a2a7a"/><ellipse cx="136" cy="383.9" rx="8.6" ry="2.9" fill="#1248c0"/><ellipse cx="141" cy="385.2" rx="9.9" ry="2.7" fill="#0a2a7a"/><ellipse cx="141" cy="392.0" rx="7.0" ry="2.4" fill="#1248c0"/><ellipse cx="141" cy="386.8" rx="7.7" ry="1.9" fill="#0c3090"/><ellipse cx="148" cy="383.6" rx="9.0" ry="1.9" fill="#0a2a7a"/><ellipse cx="148" cy="392.7" rx="10.0" ry="2.4" fill="#0a2a7a"/><ellipse cx="148" cy="393.4" rx="9.3" ry="2.7" fill="#1040b0"/><ellipse cx="154" cy="383.0" rx="4.7" ry="1.5" fill="#1248c0"/><ellipse cx="154" cy="395.2" rx="4.5" ry="1.7" fill="#0a2a7a"/><ellipse cx="154" cy="383.6" rx="7.8" ry="2.0" fill="#1248c0"/><ellipse cx="163" cy="392.3" rx="5.3" ry="2.8" fill="#1040b0"/><ellipse cx="163" cy="393.8" rx="7.9" ry="1.6" fill="#0c3498"/><ellipse cx="163" cy="396.8" rx="9.4" ry="2.7" fill="#0c3090"/><ellipse cx="170" cy="396.6" rx="6.8" ry="2.4" fill="#1040b0"/><ellipse cx="170" cy="385.7" rx="8.9" ry="2.0" fill="#0c3090"/><ellipse cx="170" cy="385.5" rx="5.1" ry="2.6" fill="#0a2a7a"/><ellipse cx="179" cy="395.5" rx="7.4" ry="2.4" fill="#0c3498"/><ellipse cx="179" cy="391.9" rx="7.6" ry="2.6" fill="#0c3498"/><ellipse cx="179" cy="386.6" rx="8.9" ry="2.3" fill="#0c3498"/><ellipse cx="185" cy="392.1" rx="6.3" ry="1.8" fill="#0c3090"/><ellipse cx="185" cy="386.7" rx="11.0" ry="1.7" fill="#0c3090"/><ellipse cx="185" cy="392.7" rx="8.4" ry="2.7" fill="#1248c0"/><ellipse cx="193" cy="398.0" rx="8.8" ry="2.6" fill="#1248c0"/><ellipse cx="193" cy="390.3" rx="6.7" ry="2.1" fill="#1040b0"/><ellipse cx="193" cy="381.4" rx="8.6" ry="1.6" fill="#0a2a7a"/><ellipse cx="201" cy="395.7" rx="9.1" ry="2.2" fill="#1040b0"/><ellipse cx="201" cy="388.1" rx="6.3" ry="1.8" fill="#0c3090"/><ellipse cx="201" cy="381.6" rx="5.2" ry="2.1" fill="#0c3498"/><ellipse cx="211" cy="395.0" rx="8.4" ry="2.6" fill="#0c3498"/><ellipse cx="211" cy="393.5" rx="8.8" ry="1.9" fill="#1248c0"/><ellipse cx="211" cy="387.8" rx="8.3" ry="2.7" fill="#0c3090"/><ellipse cx="216" cy="384.4" rx="10.1" ry="2.6" fill="#0c3090"/><ellipse cx="216" cy="390.8" rx="4.6" ry="2.0" fill="#1248c0"/><ellipse cx="216" cy="394.3" rx="7.2" ry="1.7" fill="#1040b0"/><ellipse cx="225" cy="384.4" rx="6.3" ry="2.5" fill="#1040b0"/><ellipse cx="225" cy="385.5" rx="10.7" ry="2.0" fill="#0a2a7a"/><ellipse cx="225" cy="398.0" rx="10.8" ry="2.8" fill="#0c3498"/><ellipse cx="231" cy="391.6" rx="5.9" ry="2.1" fill="#1248c0"/><ellipse cx="231" cy="389.2" rx="7.1" ry="2.4" fill="#0a2a7a"/><ellipse cx="231" cy="392.9" rx="8.7" ry="2.4" fill="#0c3090"/><ellipse cx="237" cy="398.3" rx="4.2" ry="2.7" fill="#0a2a7a"/><ellipse cx="237" cy="380.9" rx="7.5" ry="1.6" fill="#0c3498"/><ellipse cx="237" cy="388.7" rx="7.1" ry="3.0" fill="#0c3498"/><ellipse cx="243" cy="398.5" rx="5.3" ry="2.1" fill="#0c3090"/><ellipse cx="243" cy="387.4" rx="4.9" ry="2.7" fill="#1248c0"/><ellipse cx="243" cy="390.3" rx="4.3" ry="1.8" fill="#1248c0"/><ellipse cx="252" cy="385.0" rx="8.0" ry="2.7" fill="#0c3498"/><ellipse cx="252" cy="397.6" rx="10.2" ry="1.5" fill="#0c3498"/><ellipse cx="252" cy="381.8" rx="7.1" ry="2.7" fill="#1040b0"/><ellipse cx="258" cy="389.6" rx="7.7" ry="2.3" fill="#1248c0"/><ellipse cx="258" cy="389.2" rx="9.6" ry="2.0" fill="#0a2a7a"/><ellipse cx="258" cy="383.2" rx="6.0" ry="2.5" fill="#0c3090"/><ellipse cx="267" cy="381.6" rx="4.5" ry="2.3" fill="#1040b0"/><ellipse cx="267" cy="387.0" rx="6.5" ry="1.7" fill="#0c3498"/><ellipse cx="267" cy="389.6" rx="8.8" ry="2.5" fill="#1040b0"/><ellipse cx="272" cy="384.6" rx="6.5" ry="1.9" fill="#1040b0"/><ellipse cx="272" cy="393.2" rx="9.1" ry="2.3" fill="#0c3090"/><ellipse cx="272" cy="386.3" rx="5.5" ry="2.3" fill="#0a2a7a"/><ellipse cx="280" cy="392.1" rx="8.5" ry="1.5" fill="#0a2a7a"/><ellipse cx="280" cy="389.5" rx="5.1" ry="2.8" fill="#0c3090"/><ellipse cx="280" cy="397.2" rx="8.8" ry="1.8" fill="#0c3498"/><ellipse cx="288" cy="397.3" rx="10.8" ry="2.1" fill="#1248c0"/><ellipse cx="288" cy="397.8" rx="9.6" ry="1.5" fill="#0a2a7a"/><ellipse cx="288" cy="383.4" rx="5.9" ry="1.5" fill="#1248c0"/><ellipse cx="296" cy="383.1" rx="10.5" ry="2.3" fill="#1248c0"/><ellipse cx="296" cy="384.0" rx="11.0" ry="2.3" fill="#1248c0"/><ellipse cx="296" cy="394.1" rx="10.2" ry="2.0" fill="#0c3090"/><ellipse cx="302" cy="391.3" rx="6.5" ry="2.5" fill="#0a2a7a"/><ellipse cx="302" cy="390.7" rx="11.0" ry="2.9" fill="#0c3498"/><ellipse cx="302" cy="394.3" rx="10.9" ry="2.6" fill="#0c3090"/><ellipse cx="309" cy="389.6" rx="6.6" ry="3.0" fill="#0a2a7a"/><ellipse cx="309" cy="381.2" rx="5.7" ry="2.1" fill="#1248c0"/><ellipse cx="309" cy="394.4" rx="9.3" ry="2.5" fill="#0a2a7a"/><ellipse cx="314" cy="395.5" rx="5.6" ry="2.2" fill="#0c3090"/><ellipse cx="314" cy="389.3" rx="7.2" ry="1.6" fill="#0a2a7a"/><ellipse cx="314" cy="390.4" rx="9.6" ry="2.6" fill="#1040b0"/><ellipse cx="324" cy="385.5" rx="6.8" ry="1.5" fill="#0c3498"/><ellipse cx="324" cy="383.7" rx="9.8" ry="2.2" fill="#1248c0"/><ellipse cx="324" cy="382.2" rx="9.1" ry="2.7" fill="#1248c0"/><ellipse cx="333" cy="377.9" rx="10.4" ry="1.7" fill="#0a2a7a"/><ellipse cx="333" cy="387.5" rx="6.7" ry="2.4" fill="#0c3498"/><ellipse cx="333" cy="393.2" rx="4.5" ry="1.9" fill="#0c3090"/><ellipse cx="340" cy="383.0" rx="9.5" ry="2.7" fill="#1040b0"/><ellipse cx="340" cy="390.6" rx="6.3" ry="2.8" fill="#0a2a7a"/><ellipse cx="340" cy="383.0" rx="4.9" ry="2.6" fill="#0a2a7a"/><ellipse cx="345" cy="391.2" rx="8.5" ry="2.3" fill="#1040b0"/><ellipse cx="345" cy="388.5" rx="9.0" ry="1.8" fill="#0a2a7a"/><ellipse cx="345" cy="397.8" rx="7.7" ry="1.5" fill="#1040b0"/><ellipse cx="352" cy="383.5" rx="9.8" ry="1.6" fill="#0c3498"/><ellipse cx="352" cy="392.1" rx="4.1" ry="2.6" fill="#0c3498"/><ellipse cx="352" cy="393.2" rx="7.4" ry="2.3" fill="#0c3498"/><ellipse cx="358" cy="391.8" rx="8.5" ry="2.0" fill="#0a2a7a"/><ellipse cx="358" cy="386.7" rx="7.1" ry="2.5" fill="#0c3498"/><ellipse cx="358" cy="390.7" rx="7.1" ry="1.8" fill="#1248c0"/><ellipse cx="368" cy="394.9" rx="10.3" ry="2.6" fill="#0a2a7a"/><ellipse cx="368" cy="388.7" rx="5.2" ry="2.7" fill="#0a2a7a"/><ellipse cx="368" cy="393.1" rx="6.1" ry="2.9" fill="#1248c0"/><ellipse cx="374" cy="381.3" rx="8.4" ry="2.8" fill="#1040b0"/><ellipse cx="374" cy="390.1" rx="5.2" ry="2.5" fill="#1248c0"/><ellipse cx="374" cy="380.7" rx="4.9" ry="2.6" fill="#1040b0"/><ellipse cx="381" cy="379.9" rx="5.7" ry="2.4" fill="#0c3090"/><ellipse cx="381" cy="383.4" rx="7.0" ry="2.7" fill="#0c3498"/><ellipse cx="381" cy="393.4" rx="9.7" ry="2.1" fill="#0a2a7a"/><ellipse cx="390" cy="393.2" rx="10.2" ry="2.1" fill="#0c3498"/><ellipse cx="390" cy="389.0" rx="10.2" ry="2.7" fill="#0c3498"/><ellipse cx="390" cy="388.7" rx="4.3" ry="2.5" fill="#0a2a7a"/><ellipse cx="399" cy="394.0" rx="7.7" ry="1.7" fill="#0a2a7a"/><ellipse cx="399" cy="386.3" rx="7.4" ry="1.9" fill="#0a2a7a"/><ellipse cx="399" cy="379.2" rx="6.0" ry="1.6" fill="#0a2a7a"/><ellipse cx="408" cy="381.1" rx="9.0" ry="2.0" fill="#1248c0"/><ellipse cx="408" cy="380.5" rx="8.6" ry="2.2" fill="#1040b0"/><ellipse cx="408" cy="379.1" rx="9.2" ry="2.7" fill="#0c3498"/><ellipse cx="417" cy="392.1" rx="7.3" ry="2.3" fill="#0a2a7a"/><ellipse cx="417" cy="394.3" rx="4.3" ry="2.4" fill="#0c3498"/><ellipse cx="417" cy="385.4" rx="5.3" ry="2.9" fill="#1248c0"/><ellipse cx="424" cy="381.7" rx="5.5" ry="1.7" fill="#0a2a7a"/><ellipse cx="424" cy="378.3" rx="9.4" ry="2.8" fill="#1248c0"/><ellipse cx="424" cy="383.6" rx="6.5" ry="2.8" fill="#1040b0"/><ellipse cx="431" cy="391.5" rx="9.8" ry="2.5" fill="#1248c0"/><ellipse cx="431" cy="381.2" rx="6.6" ry="2.9" fill="#1040b0"/><ellipse cx="431" cy="384.5" rx="9.3" ry="2.5" fill="#0c3090"/><ellipse cx="440" cy="383.6" rx="11.0" ry="2.0" fill="#1248c0"/><ellipse cx="440" cy="396.7" rx="9.5" ry="2.6" fill="#0c3090"/><ellipse cx="440" cy="392.2" rx="5.9" ry="1.9" fill="#0c3498"/><ellipse cx="449" cy="383.3" rx="4.8" ry="1.5" fill="#1040b0"/><ellipse cx="449" cy="396.8" rx="10.8" ry="2.2" fill="#0c3498"/><ellipse cx="449" cy="382.8" rx="5.2" ry="2.9" fill="#1248c0"/><ellipse cx="457" cy="384.8" rx="4.9" ry="2.1" fill="#1040b0"/><ellipse cx="457" cy="394.4" rx="9.3" ry="1.7" fill="#0c3090"/><ellipse cx="457" cy="395.5" rx="4.3" ry="2.5" fill="#0c3090"/><ellipse cx="463" cy="391.4" rx="8.6" ry="2.8" fill="#0a2a7a"/><ellipse cx="463" cy="387.5" rx="6.7" ry="2.6" fill="#0c3090"/><ellipse cx="463" cy="384.4" rx="4.0" ry="2.1" fill="#0a2a7a"/><ellipse cx="470" cy="398.9" rx="10.2" ry="1.9" fill="#0a2a7a"/><ellipse cx="470" cy="381.2" rx="6.4" ry="2.9" fill="#0a2a7a"/><ellipse cx="470" cy="382.8" rx="5.1" ry="1.6" fill="#1040b0"/><ellipse cx="475" cy="385.9" rx="5.2" ry="2.0" fill="#1040b0"/><ellipse cx="475" cy="389.7" rx="4.3" ry="1.5" fill="#0a2a7a"/><ellipse cx="475" cy="391.2" rx="7.9" ry="2.8" fill="#0a2a7a"/><ellipse cx="484" cy="382.0" rx="9.3" ry="1.6" fill="#0a2a7a"/><ellipse cx="484" cy="387.6" rx="6.3" ry="2.6" fill="#1248c0"/><ellipse cx="484" cy="396.2" rx="10.0" ry="2.6" fill="#0c3090"/><ellipse cx="490" cy="385.5" rx="6.1" ry="2.2" fill="#1040b0"/><ellipse cx="490" cy="400.9" rx="4.6" ry="2.9" fill="#1248c0"/><ellipse cx="490" cy="388.7" rx="8.8" ry="2.7" fill="#1040b0"/><ellipse cx="498" cy="388.2" rx="4.4" ry="2.1" fill="#1248c0"/><ellipse cx="498" cy="380.2" rx="9.0" ry="2.2" fill="#1040b0"/><ellipse cx="498" cy="396.8" rx="10.4" ry="2.4" fill="#0c3090"/><ellipse cx="507" cy="379.0" rx="6.2" ry="1.7" fill="#0c3090"/><ellipse cx="507" cy="392.6" rx="4.4" ry="2.9" fill="#1248c0"/><ellipse cx="507" cy="380.4" rx="6.9" ry="3.0" fill="#1248c0"/><ellipse cx="516" cy="389.4" rx="5.9" ry="2.3" fill="#1040b0"/><ellipse cx="516" cy="385.2" rx="10.5" ry="1.7" fill="#1248c0"/><ellipse cx="516" cy="393.2" rx="7.9" ry="2.7" fill="#1248c0"/><ellipse cx="524" cy="381.1" rx="7.7" ry="1.6" fill="#0c3090"/><ellipse cx="524" cy="392.9" rx="10.2" ry="2.2" fill="#1248c0"/><ellipse cx="524" cy="385.0" rx="9.9" ry="2.5" fill="#1248c0"/><ellipse cx="530" cy="382.9" rx="8.0" ry="2.0" fill="#0c3498"/><ellipse cx="530" cy="395.3" rx="7.7" ry="2.6" fill="#0a2a7a"/><ellipse cx="530" cy="383.1" rx="5.3" ry="2.3" fill="#1040b0"/><ellipse cx="536" cy="394.8" rx="5.9" ry="2.6" fill="#1248c0"/><ellipse cx="536" cy="391.9" rx="5.9" ry="2.3" fill="#0c3090"/><ellipse cx="536" cy="398.0" rx="8.5" ry="2.4" fill="#0c3090"/><ellipse cx="545" cy="391.2" rx="4.4" ry="3.0" fill="#1040b0"/><ellipse cx="545" cy="394.2" rx="7.6" ry="2.3" fill="#1040b0"/><ellipse cx="545" cy="392.9" rx="8.9" ry="3.0" fill="#1248c0"/><ellipse cx="551" cy="394.1" rx="7.0" ry="1.5" fill="#0a2a7a"/><ellipse cx="551" cy="400.3" rx="6.9" ry="2.8" fill="#0a2a7a"/><ellipse cx="551" cy="399.5" rx="8.4" ry="2.8" fill="#1248c0"/><ellipse cx="557" cy="395.0" rx="5.6" ry="2.5" fill="#0a2a7a"/><ellipse cx="557" cy="387.0" rx="6.4" ry="2.1" fill="#0c3090"/><ellipse cx="557" cy="384.6" rx="5.1" ry="2.8" fill="#1040b0"/><ellipse cx="563" cy="393.3" rx="10.3" ry="1.8" fill="#0c3498"/><ellipse cx="563" cy="382.6" rx="8.2" ry="2.6" fill="#0c3498"/><ellipse cx="563" cy="380.6" rx="10.7" ry="2.8" fill="#1248c0"/><ellipse cx="572" cy="391.4" rx="5.3" ry="2.9" fill="#1248c0"/><ellipse cx="572" cy="397.0" rx="7.2" ry="1.6" fill="#1040b0"/><ellipse cx="572" cy="382.0" rx="10.6" ry="2.1" fill="#1248c0"/><ellipse cx="578" cy="396.6" rx="6.7" ry="1.7" fill="#1040b0"/><ellipse cx="578" cy="393.1" rx="9.8" ry="1.6" fill="#0a2a7a"/><ellipse cx="578" cy="379.7" rx="10.8" ry="2.7" fill="#0a2a7a"/><ellipse cx="586" cy="396.5" rx="7.3" ry="1.6" fill="#1248c0"/><ellipse cx="586" cy="380.1" rx="9.4" ry="2.9" fill="#0c3498"/><ellipse cx="586" cy="384.4" rx="6.5" ry="2.2" fill="#0a2a7a"/><ellipse cx="595" cy="389.0" rx="6.9" ry="2.2" fill="#1248c0"/><ellipse cx="595" cy="395.7" rx="10.2" ry="2.7" fill="#1248c0"/><ellipse cx="595" cy="384.3" rx="10.4" ry="2.7" fill="#0c3498"/><ellipse cx="601" cy="389.4" rx="5.9" ry="2.7" fill="#1248c0"/><ellipse cx="601" cy="384.1" rx="10.6" ry="2.6" fill="#1248c0"/><ellipse cx="601" cy="387.4" rx="6.4" ry="2.9" fill="#1040b0"/><ellipse cx="608" cy="397.5" rx="6.0" ry="2.7" fill="#1248c0"/><ellipse cx="608" cy="379.7" rx="8.4" ry="3.0" fill="#0c3090"/><ellipse cx="608" cy="393.6" rx="10.4" ry="2.9" fill="#1248c0"/><ellipse cx="614" cy="397.5" rx="7.0" ry="2.1" fill="#0c3498"/><ellipse cx="614" cy="384.9" rx="9.5" ry="1.7" fill="#0c3498"/><ellipse cx="614" cy="395.5" rx="4.5" ry="2.1" fill="#1248c0"/><ellipse cx="622" cy="400.2" rx="7.6" ry="2.2" fill="#0c3498"/><ellipse cx="622" cy="395.6" rx="5.0" ry="2.7" fill="#1248c0"/><ellipse cx="622" cy="399.8" rx="9.0" ry="2.9" fill="#1040b0"/><ellipse cx="629" cy="384.4" rx="5.9" ry="1.8" fill="#1040b0"/><ellipse cx="629" cy="393.4" rx="5.4" ry="2.0" fill="#1248c0"/><ellipse cx="629" cy="392.3" rx="9.1" ry="2.4" fill="#1248c0"/><ellipse cx="636" cy="381.6" rx="8.1" ry="1.9" fill="#0c3090"/><ellipse cx="636" cy="394.2" rx="9.8" ry="1.9" fill="#1248c0"/><ellipse cx="636" cy="396.5" rx="7.0" ry="1.6" fill="#1248c0"/><ellipse cx="644" cy="385.5" rx="4.1" ry="2.8" fill="#0c3090"/><ellipse cx="644" cy="400.1" rx="7.9" ry="2.4" fill="#0a2a7a"/><ellipse cx="644" cy="399.7" rx="7.2" ry="2.6" fill="#0c3090"/><ellipse cx="652" cy="385.5" rx="8.4" ry="1.6" fill="#0a2a7a"/><ellipse cx="652" cy="386.3" rx="9.0" ry="1.7" fill="#0c3498"/><ellipse cx="652" cy="398.6" rx="8.0" ry="2.7" fill="#0c3498"/><ellipse cx="661" cy="388.1" rx="7.7" ry="2.7" fill="#0c3090"/><ellipse cx="661" cy="385.4" rx="8.9" ry="2.7" fill="#0c3498"/><ellipse cx="661" cy="387.2" rx="7.3" ry="2.7" fill="#0a2a7a"/><ellipse cx="667" cy="400.1" rx="9.2" ry="2.0" fill="#0c3498"/><ellipse cx="667" cy="393.8" rx="5.5" ry="1.7" fill="#1248c0"/><ellipse cx="667" cy="394.7" rx="8.4" ry="2.1" fill="#0c3498"/><ellipse cx="673" cy="391.1" rx="7.4" ry="1.9" fill="#0c3090"/><ellipse cx="673" cy="383.2" rx="5.8" ry="1.6" fill="#0c3498"/><ellipse cx="673" cy="384.8" rx="10.5" ry="2.5" fill="#1040b0"/><ellipse cx="679" cy="387.8" rx="7.4" ry="1.6" fill="#1040b0"/><ellipse cx="679" cy="383.0" rx="6.4" ry="2.1" fill="#0a2a7a"/><ellipse cx="679" cy="386.4" rx="6.7" ry="1.8" fill="#0c3498"/><ellipse cx="684" cy="397.6" rx="6.4" ry="2.3" fill="#0a2a7a"/><ellipse cx="684" cy="385.4" rx="5.8" ry="2.3" fill="#1248c0"/><ellipse cx="684" cy="384.9" rx="8.2" ry="2.0" fill="#0c3498"/><ellipse cx="690" cy="392.7" rx="8.0" ry="2.7" fill="#1040b0"/><ellipse cx="690" cy="390.5" rx="7.0" ry="2.8" fill="#1040b0"/><ellipse cx="690" cy="397.2" rx="7.6" ry="2.2" fill="#1040b0"/><ellipse cx="695" cy="398.1" rx="7.6" ry="1.6" fill="#1248c0"/><ellipse cx="695" cy="383.0" rx="7.9" ry="2.3" fill="#0a2a7a"/><ellipse cx="695" cy="385.9" rx="10.6" ry="1.9" fill="#0c3090"/><ellipse cx="702" cy="386.8" rx="9.8" ry="1.8" fill="#0a2a7a"/><ellipse cx="702" cy="387.4" rx="9.1" ry="2.0" fill="#1040b0"/><ellipse cx="702" cy="400.2" rx="10.0" ry="2.0" fill="#1248c0"/><ellipse cx="708" cy="393.7" rx="5.3" ry="2.4" fill="#1040b0"/><ellipse cx="708" cy="395.1" rx="7.4" ry="2.4" fill="#1248c0"/><ellipse cx="708" cy="384.2" rx="6.5" ry="1.7" fill="#1248c0"/><ellipse cx="717" cy="397.8" rx="7.9" ry="3.0" fill="#1248c0"/><ellipse cx="717" cy="388.5" rx="6.2" ry="1.8" fill="#0a2a7a"/><ellipse cx="717" cy="392.1" rx="9.7" ry="2.3" fill="#0a2a7a"/><ellipse cx="723" cy="394.2" rx="9.6" ry="2.4" fill="#0c3090"/><ellipse cx="723" cy="384.5" rx="9.3" ry="2.1" fill="#1248c0"/><ellipse cx="723" cy="383.4" rx="9.3" ry="1.8" fill="#0c3090"/><ellipse cx="729" cy="385.8" rx="8.7" ry="2.1" fill="#0c3498"/><ellipse cx="729" cy="394.3" rx="5.1" ry="1.8" fill="#1248c0"/><ellipse cx="729" cy="381.6" rx="4.6" ry="2.8" fill="#1248c0"/><ellipse cx="736" cy="382.0" rx="7.4" ry="2.1" fill="#0c3498"/><ellipse cx="736" cy="385.1" rx="9.5" ry="2.8" fill="#0c3090"/><ellipse cx="736" cy="392.1" rx="8.5" ry="2.0" fill="#1040b0"/><ellipse cx="742" cy="393.3" rx="8.4" ry="3.0" fill="#0c3498"/><ellipse cx="742" cy="383.3" rx="5.2" ry="2.0" fill="#1248c0"/><ellipse cx="742" cy="382.7" rx="8.1" ry="2.6" fill="#0c3498"/><ellipse cx="749" cy="387.3" rx="8.5" ry="2.2" fill="#0c3090"/><ellipse cx="749" cy="384.0" rx="10.3" ry="2.5" fill="#1248c0"/><ellipse cx="749" cy="397.5" rx="6.0" ry="2.6" fill="#0c3498"/><ellipse cx="756" cy="395.0" rx="7.7" ry="1.6" fill="#0c3090"/><ellipse cx="756" cy="387.5" rx="7.4" ry="2.6" fill="#0c3090"/><ellipse cx="756" cy="397.6" rx="6.6" ry="2.8" fill="#1040b0"/><ellipse cx="763" cy="399.7" rx="4.1" ry="2.8" fill="#1040b0"/><ellipse cx="763" cy="396.8" rx="6.4" ry="2.2" fill="#0c3090"/><ellipse cx="763" cy="384.5" rx="4.4" ry="1.7" fill="#1040b0"/><ellipse cx="768" cy="398.7" rx="8.2" ry="2.2" fill="#0c3090"/><ellipse cx="768" cy="386.7" rx="8.0" ry="1.7" fill="#0c3090"/><ellipse cx="768" cy="399.8" rx="6.5" ry="2.2" fill="#0a2a7a"/><ellipse cx="777" cy="393.8" rx="10.3" ry="2.7" fill="#1040b0"/><ellipse cx="777" cy="388.7" rx="8.2" ry="2.2" fill="#0a2a7a"/><ellipse cx="777" cy="385.4" rx="6.0" ry="2.8" fill="#1040b0"/><ellipse cx="785" cy="396.0" rx="7.0" ry="2.1" fill="#0a2a7a"/><ellipse cx="785" cy="396.5" rx="5.9" ry="2.1" fill="#1248c0"/><ellipse cx="785" cy="391.9" rx="8.6" ry="2.8" fill="#1040b0"/><ellipse cx="790" cy="396.6" rx="7.2" ry="2.6" fill="#0c3090"/><ellipse cx="790" cy="398.8" rx="10.7" ry="2.7" fill="#0a2a7a"/><ellipse cx="790" cy="393.4" rx="5.9" ry="1.8" fill="#0c3090"/><ellipse cx="795" cy="382.5" rx="11.0" ry="2.0" fill="#0c3090"/><ellipse cx="795" cy="398.6" rx="9.3" ry="2.3" fill="#0a2a7a"/><ellipse cx="795" cy="391.8" rx="8.3" ry="2.9" fill="#0c3090"/><ellipse cx="805" cy="387.8" rx="10.7" ry="2.7" fill="#0c3090"/><ellipse cx="805" cy="388.8" rx="8.3" ry="2.9" fill="#1248c0"/><ellipse cx="805" cy="398.7" rx="10.8" ry="1.7" fill="#0c3090"/><ellipse cx="815" cy="398.7" rx="7.6" ry="2.8" fill="#1040b0"/><ellipse cx="815" cy="390.4" rx="4.9" ry="1.8" fill="#1040b0"/><ellipse cx="815" cy="396.9" rx="5.0" ry="2.9" fill="#0a2a7a"/><ellipse cx="824" cy="386.0" rx="6.7" ry="2.3" fill="#0c3090"/><ellipse cx="824" cy="395.8" rx="4.9" ry="1.9" fill="#0c3498"/><ellipse cx="824" cy="397.1" rx="7.1" ry="2.0" fill="#0a2a7a"/><ellipse cx="831" cy="398.7" rx="8.1" ry="2.7" fill="#1248c0"/><ellipse cx="831" cy="386.1" rx="6.6" ry="2.4" fill="#1248c0"/><ellipse cx="831" cy="393.7" rx="7.7" ry="2.9" fill="#0c3090"/><ellipse cx="839" cy="399.7" rx="6.0" ry="1.9" fill="#0a2a7a"/><ellipse cx="839" cy="393.3" rx="9.2" ry="2.9" fill="#1040b0"/><ellipse cx="839" cy="396.7" rx="7.8" ry="2.0" fill="#1248c0"/><ellipse cx="848" cy="383.2" rx="4.2" ry="2.6" fill="#1248c0"/><ellipse cx="848" cy="391.0" rx="4.7" ry="2.3" fill="#0c3090"/><ellipse cx="848" cy="399.6" rx="6.3" ry="2.9" fill="#1248c0"/><ellipse cx="855" cy="388.0" rx="5.5" ry="1.6" fill="#0c3090"/><ellipse cx="855" cy="383.4" rx="9.7" ry="1.6" fill="#1248c0"/><ellipse cx="855" cy="395.3" rx="7.2" ry="2.4" fill="#0a2a7a"/><ellipse cx="865" cy="390.0" rx="6.9" ry="2.7" fill="#1040b0"/><ellipse cx="865" cy="385.8" rx="10.6" ry="1.7" fill="#1040b0"/><ellipse cx="865" cy="392.2" rx="8.1" ry="1.6" fill="#1040b0"/><ellipse cx="872" cy="387.5" rx="9.0" ry="1.5" fill="#0c3090"/><ellipse cx="872" cy="390.4" rx="9.2" ry="2.1" fill="#1040b0"/><ellipse cx="872" cy="388.8" rx="8.8" ry="2.7" fill="#1040b0"/><ellipse cx="878" cy="384.6" rx="7.0" ry="3.0" fill="#0c3090"/><ellipse cx="878" cy="392.4" rx="10.9" ry="1.7" fill="#1248c0"/><ellipse cx="878" cy="399.5" rx="7.1" ry="1.6" fill="#1248c0"/><ellipse cx="883" cy="390.9" rx="5.9" ry="1.8" fill="#0c3090"/><ellipse cx="883" cy="387.2" rx="9.2" ry="2.9" fill="#0c3498"/><ellipse cx="883" cy="397.5" rx="6.1" ry="2.6" fill="#1248c0"/><ellipse cx="889" cy="398.7" rx="4.0" ry="2.7" fill="#0a2a7a"/><ellipse cx="889" cy="391.6" rx="9.0" ry="2.2" fill="#0c3498"/><ellipse cx="889" cy="387.1" rx="10.0" ry="2.8" fill="#0c3498"/><ellipse cx="897" cy="398.8" rx="10.3" ry="2.5" fill="#0a2a7a"/><ellipse cx="897" cy="388.1" rx="7.3" ry="2.4" fill="#0c3498"/><ellipse cx="897" cy="392.7" rx="10.1" ry="2.8" fill="#1040b0"/><ellipse cx="903" cy="389.2" rx="4.6" ry="2.0" fill="#1040b0"/><ellipse cx="903" cy="390.3" rx="7.6" ry="2.3" fill="#0c3090"/><ellipse cx="903" cy="398.7" rx="10.5" ry="2.7" fill="#1040b0"/><ellipse cx="911" cy="391.8" rx="6.6" ry="2.7" fill="#0c3498"/><ellipse cx="911" cy="384.1" rx="4.6" ry="2.7" fill="#0c3090"/><ellipse cx="911" cy="395.8" rx="6.7" ry="1.6" fill="#1248c0"/><ellipse cx="918" cy="390.8" rx="8.0" ry="2.8" fill="#1040b0"/><ellipse cx="918" cy="391.3" rx="9.5" ry="1.9" fill="#0a2a7a"/><ellipse cx="918" cy="385.3" rx="10.9" ry="2.1" fill="#1040b0"/><ellipse cx="925" cy="389.5" rx="4.7" ry="2.7" fill="#0c3090"/><ellipse cx="925" cy="397.2" rx="4.4" ry="1.8" fill="#0c3498"/><ellipse cx="925" cy="399.9" rx="4.5" ry="1.9" fill="#0a2a7a"/><ellipse cx="933" cy="397.8" rx="4.5" ry="2.2" fill="#1040b0"/><ellipse cx="933" cy="392.9" rx="6.0" ry="1.8" fill="#0a2a7a"/><ellipse cx="933" cy="385.0" rx="5.0" ry="2.5" fill="#1248c0"/><ellipse cx="943" cy="386.5" rx="10.9" ry="1.9" fill="#0c3090"/><ellipse cx="943" cy="392.1" rx="5.6" ry="2.5" fill="#1040b0"/><ellipse cx="943" cy="387.5" rx="6.7" ry="2.7" fill="#0c3498"/><ellipse cx="952" cy="389.6" rx="9.7" ry="2.1" fill="#0a2a7a"/><ellipse cx="952" cy="384.9" rx="4.4" ry="2.3" fill="#0c3090"/><ellipse cx="952" cy="385.3" rx="7.1" ry="2.2" fill="#1040b0"/><ellipse cx="959" cy="396.4" rx="5.1" ry="2.2" fill="#0c3498"/><ellipse cx="959" cy="391.9" rx="5.3" ry="2.8" fill="#0a2a7a"/><ellipse cx="959" cy="392.4" rx="7.3" ry="2.9" fill="#0c3090"/><ellipse cx="965" cy="394.3" rx="7.3" ry="2.4" fill="#0c3090"/><ellipse cx="965" cy="399.5" rx="9.8" ry="1.8" fill="#0c3090"/><ellipse cx="965" cy="395.8" rx="6.4" ry="2.6" fill="#0c3498"/><ellipse cx="974" cy="395.6" rx="9.4" ry="2.1" fill="#0c3090"/><ellipse cx="974" cy="399.1" rx="4.6" ry="1.7" fill="#0a2a7a"/><ellipse cx="974" cy="399.5" rx="5.2" ry="1.8" fill="#0a2a7a"/><ellipse cx="979" cy="386.8" rx="5.1" ry="2.4" fill="#0a2a7a"/><ellipse cx="979" cy="386.0" rx="8.2" ry="1.5" fill="#0c3090"/><ellipse cx="979" cy="390.8" rx="8.2" ry="2.5" fill="#0c3090"/><ellipse cx="989" cy="391.6" rx="10.1" ry="2.6" fill="#0a2a7a"/><ellipse cx="989" cy="385.8" rx="5.9" ry="1.5" fill="#1040b0"/><ellipse cx="989" cy="398.9" rx="9.8" ry="1.7" fill="#1040b0"/><ellipse cx="995" cy="391.6" rx="9.5" ry="2.2" fill="#1040b0"/><ellipse cx="995" cy="390.8" rx="5.7" ry="2.1" fill="#0a2a7a"/><ellipse cx="995" cy="391.1" rx="4.9" ry="2.1" fill="#1040b0"/><ellipse cx="1002" cy="399.3" rx="6.5" ry="2.2" fill="#0c3498"/><ellipse cx="1002" cy="391.8" rx="7.2" ry="1.7" fill="#0c3498"/><ellipse cx="1002" cy="396.0" rx="8.2" ry="1.6" fill="#1040b0"/><ellipse cx="1007" cy="392.3" rx="7.4" ry="3.0" fill="#1040b0"/><ellipse cx="1007" cy="389.2" rx="9.2" ry="2.6" fill="#0c3498"/><ellipse cx="1007" cy="394.0" rx="8.4" ry="1.5" fill="#1040b0"/></g><g filter="url(#vb1)"><ellipse cx="935" cy="391" rx="14" ry="4" fill="#1e70d0"/><ellipse cx="180" cy="390" rx="20" ry="3" fill="#123ea8"/></g><g filter="url(#vb2)"><ellipse cx="90" cy="394.0" rx="5.9" ry="2.1" fill="#000" opacity="0.85"/><ellipse cx="112" cy="392.2" rx="7.1" ry="1.8" fill="#000" opacity="0.85"/><ellipse cx="135" cy="392.0" rx="8.8" ry="2.7" fill="#000" opacity="0.85"/><ellipse cx="155" cy="393.7" rx="6.6" ry="2.5" fill="#000" opacity="0.85"/><ellipse cx="171" cy="397.8" rx="9.5" ry="2.0" fill="#000" opacity="0.85"/><ellipse cx="188" cy="398.2" rx="5.7" ry="2.9" fill="#000" opacity="0.85"/><ellipse cx="210" cy="398.3" rx="6.1" ry="2.7" fill="#000" opacity="0.85"/><ellipse cx="227" cy="390.6" rx="10.4" ry="1.8" fill="#000" opacity="0.85"/><ellipse cx="246" cy="395.0" rx="6.5" ry="2.7" fill="#000" opacity="0.85"/><ellipse cx="264" cy="398.7" rx="11.0" ry="2.1" fill="#000" opacity="0.85"/><ellipse cx="287" cy="394.7" rx="7.0" ry="2.3" fill="#000" opacity="0.85"/><ellipse cx="305" cy="396.7" rx="9.2" ry="2.9" fill="#000" opacity="0.85"/><ellipse cx="325" cy="392.1" rx="9.5" ry="2.7" fill="#000" opacity="0.85"/><ellipse cx="344" cy="392.7" rx="6.6" ry="1.8" fill="#000" opacity="0.85"/><ellipse cx="362" cy="395.2" rx="10.5" ry="1.9" fill="#000" opacity="0.85"/><ellipse cx="383" cy="396.3" rx="10.3" ry="2.7" fill="#000" opacity="0.85"/><ellipse cx="404" cy="394.9" rx="7.6" ry="2.2" fill="#000" opacity="0.85"/><ellipse cx="419" cy="396.4" rx="9.0" ry="2.5" fill="#000" opacity="0.85"/><ellipse cx="433" cy="398.9" rx="9.4" ry="2.7" fill="#000" opacity="0.85"/><ellipse cx="451" cy="396.8" rx="9.7" ry="2.9" fill="#000" opacity="0.85"/><ellipse cx="468" cy="395.3" rx="7.0" ry="1.9" fill="#000" opacity="0.85"/><ellipse cx="480" cy="392.2" rx="6.2" ry="2.2" fill="#000" opacity="0.85"/><ellipse cx="503" cy="393.0" rx="9.7" ry="2.3" fill="#000" opacity="0.85"/><ellipse cx="523" cy="395.3" rx="10.6" ry="2.2" fill="#000" opacity="0.85"/><ellipse cx="536" cy="398.7" rx="8.1" ry="2.5" fill="#000" opacity="0.85"/><ellipse cx="555" cy="397.7" rx="5.9" ry="2.2" fill="#000" opacity="0.85"/><ellipse cx="576" cy="392.8" rx="5.6" ry="3.0" fill="#000" opacity="0.85"/><ellipse cx="592" cy="396.1" rx="5.4" ry="2.2" fill="#000" opacity="0.85"/><ellipse cx="616" cy="393.7" rx="8.5" ry="2.1" fill="#000" opacity="0.85"/><ellipse cx="631" cy="396.4" rx="9.6" ry="1.9" fill="#000" opacity="0.85"/><ellipse cx="645" cy="394.8" rx="5.9" ry="2.2" fill="#000" opacity="0.85"/><ellipse cx="657" cy="394.2" rx="9.7" ry="2.5" fill="#000" opacity="0.85"/><ellipse cx="680" cy="390.6" rx="9.6" ry="2.3" fill="#000" opacity="0.85"/><ellipse cx="698" cy="391.8" rx="6.6" ry="2.9" fill="#000" opacity="0.85"/><ellipse cx="716" cy="390.9" rx="8.0" ry="2.0" fill="#000" opacity="0.85"/><ellipse cx="732" cy="393.6" rx="10.2" ry="2.1" fill="#000" opacity="0.85"/><ellipse cx="752" cy="391.1" rx="6.3" ry="2.0" fill="#000" opacity="0.85"/><ellipse cx="769" cy="393.8" rx="6.1" ry="2.2" fill="#000" opacity="0.85"/><ellipse cx="783" cy="390.8" rx="8.5" ry="2.7" fill="#000" opacity="0.85"/><ellipse cx="804" cy="397.7" rx="6.6" ry="2.1" fill="#000" opacity="0.85"/><ellipse cx="824" cy="398.9" rx="9.2" ry="2.2" fill="#000" opacity="0.85"/><ellipse cx="838" cy="398.0" rx="7.8" ry="2.3" fill="#000" opacity="0.85"/><ellipse cx="851" cy="394.1" rx="7.2" ry="2.2" fill="#000" opacity="0.85"/><ellipse cx="865" cy="394.2" rx="7.3" ry="2.8" fill="#000" opacity="0.85"/><ellipse cx="882" cy="395.7" rx="9.4" ry="2.8" fill="#000" opacity="0.85"/><ellipse cx="898" cy="396.9" rx="9.6" ry="2.8" fill="#000" opacity="0.85"/><ellipse cx="918" cy="399.0" rx="9.5" ry="2.1" fill="#000" opacity="0.85"/><ellipse cx="937" cy="390.7" rx="6.8" ry="2.9" fill="#000" opacity="0.85"/><ellipse cx="953" cy="396.9" rx="7.0" ry="2.6" fill="#000" opacity="0.85"/><ellipse cx="976" cy="390.9" rx="6.6" ry="1.9" fill="#000" opacity="0.85"/><ellipse cx="994" cy="391.8" rx="8.0" ry="2.8" fill="#000" opacity="0.85"/></g><path d="M322,386 C340,382 360,378 375,372 C385,362 395,350 405,338 L418,338 C425,350 432,362 440,372 C447,380 452,384 460,388" fill="none" stroke="#0a2a88" stroke-width="6" filter="url(#vdisp2)" opacity="0.75"/><ellipse cx="410" cy="334" rx="10" ry="5" fill="#1a56c8" filter="url(#vb1)"/><path d="M80,420 L300,418 L620,416 L1000,424" fill="none" stroke="#082a80" stroke-width="4" filter="url(#vb1)" opacity="0.8"/><path d="M78,414 L81,411 L90,409.5 L143,409.5 L146,407 L225,407.5 L245,411 L262,415 L290,412 L312,402 L316,408 L330,412.4 L371,409.4 L432,407.3 L464,406.3 L513,408.4 L570,410.4 L661,414.5 L665,408 L712,408.7 L773,409.8 L830,410 L903,410.8 L942,410.5 L946,415.5 L1005,421.7 L1010,425" fill="none" stroke="#1a6ad0" stroke-width="14" stroke-linejoin="round" filter="url(#vb1)" opacity="0.6"/><path d="M78,414 L81,411 L90,409.5 L143,409.5 L146,407 L225,407.5 L245,411 L262,415 L290,412 L312,402 L316,408 L330,412.4 L371,409.4 L432,407.3 L464,406.3 L513,408.4 L570,410.4 L661,414.5 L665,408 L712,408.7 L773,409.8 L830,410 L903,410.8 L942,410.5 L946,415.5 L1005,421.7 L1010,425" fill="none" stroke="#10c8f0" stroke-width="11" stroke-linejoin="round" filter="url(#vdisp2)"/><path d="M80,412.0 L81,411.0 L90,409.5 L143,409.5 L146,407.0 L225,407.5 L228,408.0" fill="none" stroke="#40e070" stroke-width="6.5" stroke-linejoin="round" filter="url(#vdisp)"/><path d="M80,412.0 L81,411.0 L90,409.5 L143,409.5 L146,407.0 L225,407.5 L228,408.0" fill="none" stroke="#f0f010" stroke-width="3.2" stroke-linejoin="round" filter="url(#vdisp)"/><path d="M80,412.0 L81,411.0 L90,409.5 L143,409.5 L146,407.0 L225,407.5 L228,408.0" fill="none" stroke="#e85010" stroke-width="1.2" stroke-dasharray="4 11 2 19" opacity="0.3" filter="url(#vb3)"/><path d="M318,408.6 L330,412.4 L371,409.4 L432,407.3 L464,406.3 L513,408.4 L570,410.4 L660,414.5" fill="none" stroke="#40e070" stroke-width="6.5" stroke-linejoin="round" filter="url(#vdisp)"/><path d="M318,408.6 L330,412.4 L371,409.4 L432,407.3 L464,406.3 L513,408.4 L570,410.4 L660,414.5" fill="none" stroke="#f0f010" stroke-width="3.2" stroke-linejoin="round" filter="url(#vdisp)"/><path d="M318,408.6 L330,412.4 L371,409.4 L432,407.3 L464,406.3 L513,408.4 L570,410.4 L660,414.5" fill="none" stroke="#e85010" stroke-width="1.2" stroke-dasharray="4 11 2 19" opacity="0.3" filter="url(#vb3)"/><path d="M770,409.7 L773,409.8 L830,410.0 L903,410.8 L942,410.5 L946,415.5 L1003,421.5" fill="none" stroke="#40e070" stroke-width="6.5" stroke-linejoin="round" filter="url(#vdisp)"/><path d="M770,409.7 L773,409.8 L830,410.0 L903,410.8 L942,410.5 L946,415.5 L1003,421.5" fill="none" stroke="#f0f010" stroke-width="3.2" stroke-linejoin="round" filter="url(#vdisp)"/><path d="M770,409.7 L773,409.8 L830,410.0 L903,410.8 L942,410.5 L946,415.5 L1003,421.5" fill="none" stroke="#e85010" stroke-width="1.2" stroke-dasharray="4 11 2 19" opacity="0.3" filter="url(#vb3)"/><path d="M668,408.5 L690,409.5" stroke="#50e070" stroke-width="5" filter="url(#vdisp)" opacity="0.9"/><path d="M671,408.5 L687,409.5" stroke="#e0f020" stroke-width="2.2" filter="url(#vdisp)" opacity="0.85"/><path d="M700,408.5 L722,409.5" stroke="#50e070" stroke-width="5" filter="url(#vdisp)" opacity="0.9"/><path d="M703,408.5 L719,409.5" stroke="#e0f020" stroke-width="2.2" filter="url(#vdisp)" opacity="0.85"/><path d="M733,408.5 L768,409.5" stroke="#50e070" stroke-width="5" filter="url(#vdisp)" opacity="0.9"/><path d="M736,408.5 L765,409.5" stroke="#e0f020" stroke-width="2.2" filter="url(#vdisp)" opacity="0.85"/><path d="M778,408.5 L800,409.5" stroke="#50e070" stroke-width="5" filter="url(#vdisp)" opacity="0.9"/><path d="M781,408.5 L797,409.5" stroke="#e0f020" stroke-width="2.2" filter="url(#vdisp)" opacity="0.85"/><path d="M665,418 L760,419 L840,417" fill="none" stroke="#12a8e0" stroke-width="4.5" filter="url(#vdisp2)" opacity="0.8"/><path d="M228,405 L268,407" fill="none" stroke="#14c8ec" stroke-width="5" filter="url(#vdisp2)"/><path d="M232,410 L262,414 L290,411 L310,403" fill="none" stroke="#60e040" stroke-width="3" filter="url(#vdisp)"/><rect x="313.5" y="392" width="4" height="26" fill="#1880d0" filter="url(#vb2)" opacity="0.5"/><rect x="313" y="377" width="5" height="15" fill="#20d0c0" filter="url(#vb2)"/><rect x="314.5" y="381" width="2" height="6" fill="#c0e030" filter="url(#vb3)"/><rect x="75" y="411" width="6" height="11" fill="#18b8e8" filter="url(#vb2)" opacity="0.85"/><rect x="77" y="413" width="2.5" height="4" fill="#c0f040" filter="url(#vb3)"/><rect x="1005" y="420" width="8" height="12" fill="#30e070" filter="url(#vb2)"/><rect x="1007" y="423" width="4" height="6" fill="#d0f020" filter="url(#vb3)"/><rect x="903" y="399" width="6" height="8" fill="#40e060" filter="url(#vb2)"/><rect x="904.5" y="400.5" width="3" height="4" fill="#e0f020" filter="url(#vb3)"/><rect x="922" y="402" width="6" height="8" fill="#40e060" filter="url(#vb2)"/><rect x="923.5" y="403.5" width="3" height="4" fill="#e0f020" filter="url(#vb3)"/><rect x="936" y="400.5" width="6" height="8" fill="#40e060" filter="url(#vb2)"/><rect x="937.5" y="402.0" width="3" height="4" fill="#e0f020" filter="url(#vb3)"/></g><text transform="translate(30,366) rotate(-90)" font-size="14" fill="#e6e6e6" text-anchor="middle" textLength="98" lengthAdjust="spacingAndGlyphs">Power Level (dBm)</text><rect x="71.1" y="435" width="1" height="3" fill="#ccc"/><text x="71.6" y="448.3" font-size="9.4" fill="#e6e6e6" font-weight="normal" letter-spacing="1.2" text-anchor="middle" >4 900</text><rect x="150.3" y="435" width="1" height="3" fill="#ccc"/><text x="150.79" y="448.3" font-size="9.4" fill="#e6e6e6" font-weight="normal" letter-spacing="1.2" text-anchor="middle" >5 000</text><rect x="229.5" y="435" width="1" height="3" fill="#ccc"/><text x="229.98" y="448.3" font-size="9.4" fill="#e6e6e6" font-weight="normal" letter-spacing="1.2" text-anchor="middle" >5 100</text><rect x="308.7" y="435" width="1" height="3" fill="#ccc"/><text x="309.16999999999996" y="448.3" font-size="9.4" fill="#e6e6e6" font-weight="normal" letter-spacing="1.2" text-anchor="middle" >5 200</text><rect x="387.9" y="435" width="1" height="3" fill="#ccc"/><text x="388.36" y="448.3" font-size="9.4" fill="#e6e6e6" font-weight="normal" letter-spacing="1.2" text-anchor="middle" >5 300</text><rect x="467.0" y="435" width="1" height="3" fill="#ccc"/><text x="467.54999999999995" y="448.3" font-size="9.4" fill="#e6e6e6" font-weight="normal" letter-spacing="1.2" text-anchor="middle" >5 400</text><rect x="546.2" y="435" width="1" height="3" fill="#ccc"/><text x="546.74" y="448.3" font-size="9.4" fill="#e6e6e6" font-weight="normal" letter-spacing="1.2" text-anchor="middle" >5 500</text><rect x="625.4" y="435" width="1" height="3" fill="#ccc"/><text x="625.93" y="448.3" font-size="9.4" fill="#e6e6e6" font-weight="normal" letter-spacing="1.2" text-anchor="middle" >5 600</text><rect x="704.6" y="435" width="1" height="3" fill="#ccc"/><text x="705.12" y="448.3" font-size="9.4" fill="#e6e6e6" font-weight="normal" letter-spacing="1.2" text-anchor="middle" >5 700</text><rect x="783.8" y="435" width="1" height="3" fill="#ccc"/><text x="784.3100000000001" y="448.3" font-size="9.4" fill="#e6e6e6" font-weight="normal" letter-spacing="1.2" text-anchor="middle" >5 800</text><rect x="863.0" y="435" width="1" height="3" fill="#ccc"/><text x="863.5" y="448.3" font-size="9.4" fill="#e6e6e6" font-weight="normal" letter-spacing="1.2" text-anchor="middle" >5 900</text><rect x="942.2" y="435" width="1" height="3" fill="#ccc"/><text x="942.6899999999999" y="448.3" font-size="9.4" fill="#e6e6e6" font-weight="normal" letter-spacing="1.2" text-anchor="middle" >6 000</text><rect x="1021.4" y="435" width="1" height="3" fill="#ccc"/><text x="1021.88" y="448.3" font-size="9.4" fill="#e6e6e6" font-weight="normal" letter-spacing="1.2" text-anchor="middle" >6 100</text><rect x="1100.6" y="435" width="1" height="3" fill="#ccc"/><text x="1101.07" y="448.3" font-size="9.4" fill="#e6e6e6" font-weight="normal" letter-spacing="1.2" text-anchor="middle" >6 200</text><rect x="1179.8" y="435" width="1" height="3" fill="#ccc"/><text x="1180.2599999999998" y="448.3" font-size="9.4" fill="#e6e6e6" font-weight="normal" letter-spacing="1.2" text-anchor="middle" >6 300</text><text x="664" y="466" font-size="12.5" fill="#e6e6e6" font-weight="normal" letter-spacing="0.6" text-anchor="middle" >MHz</text><text x="922" y="283" font-size="9.8" fill="#e6e6e6" font-weight="normal" letter-spacing="0.85" text-anchor="start" ># of hits:</text><rect x="969" y="273" width="287" height="8.5" fill="url(#hg)"/><rect x="969" y="281.5" width="287" height="1.5" fill="#e8e8e8"/><text x="971.0" y="294.5" font-size="9.4" fill="#e6e6e6" font-weight="normal" letter-spacing="1.2" text-anchor="middle" >0</text><text x="995.8" y="294.5" font-size="9.4" fill="#e6e6e6" font-weight="normal" letter-spacing="1.2" text-anchor="middle" >5</text><text x="1020.6" y="294.5" font-size="9.4" fill="#e6e6e6" font-weight="normal" letter-spacing="1.2" text-anchor="middle" >10</text><text x="1045.4" y="294.5" font-size="9.4" fill="#e6e6e6" font-weight="normal" letter-spacing="1.2" text-anchor="middle" >15</text><text x="1070.2" y="294.5" font-size="9.4" fill="#e6e6e6" font-weight="normal" letter-spacing="1.2" text-anchor="middle" >20</text><text x="1095.0" y="294.5" font-size="9.4" fill="#e6e6e6" font-weight="normal" letter-spacing="1.2" text-anchor="middle" >25</text><text x="1119.8" y="294.5" font-size="9.4" fill="#e6e6e6" font-weight="normal" letter-spacing="1.2" text-anchor="middle" >30</text><text x="1144.6" y="294.5" font-size="9.4" fill="#e6e6e6" font-weight="normal" letter-spacing="1.2" text-anchor="middle" >35</text><text x="1169.4" y="294.5" font-size="9.4" fill="#e6e6e6" font-weight="normal" letter-spacing="1.2" text-anchor="middle" >40</text><text x="1194.2" y="294.5" font-size="9.4" fill="#e6e6e6" font-weight="normal" letter-spacing="1.2" text-anchor="middle" >45</text><text x="1219.0" y="294.5" font-size="9.4" fill="#e6e6e6" font-weight="normal" letter-spacing="1.2" text-anchor="middle" >50</text><text x="1243.8" y="294.5" font-size="9.4" fill="#e6e6e6" font-weight="normal" letter-spacing="1.2" text-anchor="middle" >55</text><rect x="71" y="503" width="1185" height="126" fill="#000"/><rect x="71" y="503" width="1" height="126" fill="#aaa"/><rect x="1256" y="503" width="1" height="126" fill="#888"/><line x1="72" x2="1256" y1="519.4" y2="519.4" stroke="#5c5c5c" stroke-width="1" stroke-dasharray="3 4"/><rect x="67" y="518.9" width="4" height="1" fill="#ccc"/><text x="62.5" y="522.8" font-size="9.4" fill="#e6e6e6" font-weight="normal" letter-spacing="0.9" text-anchor="end" >-25</text><line x1="72" x2="1256" y1="545.4" y2="545.4" stroke="#5c5c5c" stroke-width="1" stroke-dasharray="3 4"/><rect x="67" y="544.9" width="4" height="1" fill="#ccc"/><text x="62.5" y="548.8299999999999" font-size="9.4" fill="#e6e6e6" font-weight="normal" letter-spacing="0.9" text-anchor="end" >-50</text><line x1="72" x2="1256" y1="571.5" y2="571.5" stroke="#5c5c5c" stroke-width="1" stroke-dasharray="3 4"/><rect x="67" y="571.0" width="4" height="1" fill="#ccc"/><text x="62.5" y="574.86" font-size="9.4" fill="#e6e6e6" font-weight="normal" letter-spacing="0.9" text-anchor="end" >-75</text><line x1="72" x2="1256" y1="597.5" y2="597.5" stroke="#5c5c5c" stroke-width="1" stroke-dasharray="3 4"/><rect x="67" y="597.0" width="4" height="1" fill="#ccc"/><text x="62.5" y="600.89" font-size="9.4" fill="#e6e6e6" font-weight="normal" letter-spacing="0.9" text-anchor="end" >-100</text><line x1="72" x2="1256" y1="623.5" y2="623.5" stroke="#5c5c5c" stroke-width="1" stroke-dasharray="3 4"/><rect x="67" y="623.0" width="4" height="1" fill="#ccc"/><text x="62.5" y="626.92" font-size="9.4" fill="#e6e6e6" font-weight="normal" letter-spacing="0.9" text-anchor="end" >-125</text><path d="M81.0,629L81.0,616.3L82.0,615.0L83.0,615.7L84.0,614.8L85.0,614.7L86.0,617.0L87.0,617.2L88.0,613.8L89.0,616.2L90.0,616.3L91.0,613.1L92.0,615.3L93.0,613.8L94.0,615.3L95.0,614.6L96.0,616.6L97.0,614.6L98.0,613.7L99.0,615.1L100.0,614.2L101.0,614.5L102.0,617.0L103.0,614.1L104.0,614.8L105.0,616.0L106.0,617.1L107.0,613.7L108.0,615.3L109.0,614.3L110.0,613.6L111.0,614.3L112.0,613.4L113.0,615.6L114.0,613.9L115.0,615.4L116.0,613.4L117.0,613.6L118.0,616.9L119.0,616.7L120.0,616.4L121.0,613.3L122.0,615.5L123.0,614.7L124.0,616.0L125.0,615.2L126.0,615.7L127.0,615.8L128.0,614.8L129.0,614.8L130.0,613.5L131.0,614.4L132.0,613.4L133.0,613.7L134.0,613.1L135.0,614.5L136.0,616.6L137.0,613.7L138.0,613.3L139.0,613.5L140.0,614.9L141.0,614.3L142.0,616.4L143.0,613.8L144.0,614.9L145.0,616.1L146.0,617.0L147.0,613.7L148.0,613.2L149.0,616.9L150.0,613.9L151.0,615.6L152.0,616.6L153.0,608.9L154.0,608.9L155.0,608.9L156.0,608.9L157.0,608.9L158.0,608.9L159.0,608.9L160.0,608.9L161.0,608.9L162.0,608.9L163.0,608.9L164.0,608.9L165.0,608.9L166.0,608.9L167.0,608.9L168.0,608.9L169.0,608.9L170.0,608.9L171.0,608.9L172.0,608.9L173.0,608.9L174.0,608.9L175.0,608.9L176.0,608.4L177.0,608.4L178.0,608.4L179.0,608.4L180.0,608.4L181.0,608.4L182.0,608.4L183.0,608.4L184.0,608.4L185.0,608.4L186.0,608.4L187.0,608.4L188.0,608.4L189.0,608.4L190.0,608.4L191.0,608.4L192.0,608.4L193.0,608.4L194.0,608.4L195.0,608.4L196.0,608.4L197.0,608.4L198.0,608.4L199.0,608.4L200.0,616.0L201.0,614.1L202.0,613.6L203.0,617.1L204.0,614.7L205.0,617.1L206.0,614.3L207.0,615.9L208.0,613.6L209.0,613.2L210.0,615.2L211.0,613.1L212.0,616.0L213.0,617.0L214.0,614.8L215.0,617.1L216.0,616.5L217.0,615.6L218.0,614.7L219.0,616.6L220.0,617.1L221.0,613.7L222.0,616.0L223.0,613.3L224.0,613.5L225.0,615.7L226.0,615.4L227.0,615.1L228.0,614.6L229.0,614.8L230.0,614.9L231.0,614.7L232.0,613.4L233.0,615.2L234.0,615.5L235.0,614.3L236.0,616.3L237.0,616.0L238.0,613.2L239.0,615.1L240.0,615.0L241.0,617.2L242.0,615.5L243.0,614.9L244.0,617.2L245.0,614.7L246.0,614.6L247.0,617.0L248.0,610.0L249.0,610.0L250.0,610.0L251.0,610.0L252.0,610.0L253.0,610.0L254.0,610.0L255.0,610.0L256.0,610.0L257.0,610.0L258.0,610.0L259.0,610.0L260.0,610.0L261.0,610.0L262.0,610.0L263.0,610.0L264.0,610.0L265.0,610.0L266.0,610.0L267.0,610.0L268.0,610.0L269.0,610.0L270.0,610.0L271.0,614.7L272.0,615.3L273.0,614.4L274.0,615.8L275.0,614.3L276.0,614.2L277.0,617.2L278.0,617.0L279.0,614.5L280.0,613.3L281.0,616.2L282.0,615.4L283.0,614.8L284.0,615.9L285.0,615.8L286.0,616.0L287.0,615.7L288.0,614.8L289.0,616.0L290.0,615.7L291.0,614.1L292.0,617.2L293.0,614.9L294.0,614.2L295.0,616.0L296.0,616.3L297.0,613.9L298.0,616.3L299.0,616.5L300.0,615.5L301.0,614.4L302.0,616.8L303.0,615.9L304.0,615.9L305.0,613.8L306.0,615.4L307.0,613.7L308.0,616.6L309.0,615.9L310.0,614.6L311.0,613.6L312.0,615.4L313.0,616.3L314.0,616.8L315.0,615.1L316.0,616.5L317.0,613.9L318.0,613.8L319.0,616.5L320.0,616.1L321.0,613.9L322.0,614.6L323.0,613.9L324.0,615.8L325.0,616.7L326.0,616.1L327.0,614.0L328.0,616.1L329.0,615.8L330.0,615.5L331.0,615.5L332.0,615.6L333.0,613.4L334.0,616.6L335.0,617.3L336.0,613.3L337.0,613.6L338.0,613.2L339.0,615.5L340.0,613.3L341.0,613.4L342.0,616.3L343.0,610.0L344.0,610.0L345.0,610.0L346.0,610.0L347.0,610.0L348.0,610.0L349.0,610.0L350.0,610.0L351.0,610.0L352.0,610.0L353.0,610.0L354.0,610.0L355.0,610.0L356.0,610.0L357.0,610.0L358.0,610.0L359.0,610.0L360.0,610.0L361.0,610.0L362.0,610.0L363.0,610.0L364.0,610.0L365.0,610.0L366.0,614.2L367.0,613.8L368.0,614.5L369.0,615.1L370.0,616.1L371.0,615.9L372.0,616.3L373.0,617.0L374.0,614.8L375.0,616.1L376.0,613.9L377.0,617.1L378.0,613.5L379.0,614.4L380.0,613.4L381.0,613.5L382.0,613.5L383.0,614.9L384.0,617.2L385.0,614.2L386.0,616.6L387.0,616.0L388.0,614.5L389.0,615.1L390.0,615.5L391.0,613.4L392.0,614.7L393.0,615.9L394.0,616.2L395.0,613.7L396.0,615.3L397.0,614.0L398.0,615.8L399.0,616.5L400.0,615.0L401.0,613.9L402.0,616.6L403.0,614.0L404.0,613.4L405.0,613.9L406.0,613.8L407.0,617.2L408.0,614.7L409.0,613.7L410.0,617.1L411.0,616.1L412.0,616.2L413.0,615.1L414.0,615.5L415.0,615.3L416.0,614.0L417.0,617.3L418.0,617.0L419.0,616.7L420.0,616.8L421.0,617.0L422.0,613.2L423.0,613.7L424.0,616.9L425.0,615.2L426.0,616.0L427.0,616.0L428.0,615.8L429.0,614.6L430.0,614.8L431.0,615.8L432.0,616.5L433.0,615.9L434.0,616.8L435.0,615.0L436.0,614.3L437.0,615.7L438.0,616.9L439.0,616.5L440.0,615.7L441.0,614.8L442.0,614.0L443.0,615.7L444.0,613.9L445.0,614.7L446.0,615.5L447.0,615.7L448.0,615.2L449.0,614.3L450.0,615.5L451.0,614.4L452.0,615.4L453.0,616.3L454.0,615.0L455.0,614.4L456.0,617.0L457.0,615.5L458.0,615.5L459.0,613.6L460.0,613.4L461.0,615.7L462.0,613.5L463.0,614.0L464.0,616.2L465.0,615.3L466.0,616.8L467.0,613.9L468.0,614.5L469.0,613.6L470.0,614.0L471.0,614.5L472.0,614.2L473.0,614.9L474.0,616.8L475.0,614.8L476.0,617.3L477.0,616.7L478.0,614.0L479.0,617.1L480.0,616.9L481.0,616.9L482.0,613.6L483.0,616.5L484.0,617.2L485.0,613.8L486.0,616.8L487.0,613.8L488.0,614.5L489.0,613.8L490.0,613.3L491.0,614.9L492.0,613.9L493.0,617.1L494.0,614.1L495.0,615.1L496.0,614.3L497.0,616.8L498.0,614.2L499.0,613.4L500.0,617.0L501.0,615.9L502.0,614.9L503.0,613.8L504.0,616.3L505.0,616.5L506.0,616.2L507.0,614.7L508.0,614.1L509.0,615.6L510.0,615.7L511.0,615.6L512.0,615.8L513.0,615.5L514.0,616.9L515.0,615.2L516.0,613.2L517.0,615.6L518.0,614.2L519.0,616.6L520.0,614.4L521.0,614.1L522.0,614.5L523.0,615.1L524.0,615.3L525.0,614.6L526.0,613.5L527.0,616.7L528.0,616.9L529.0,614.2L530.0,613.5L531.0,615.1L532.0,615.4L533.0,610.0L534.0,610.0L535.0,610.0L536.0,610.0L537.0,610.0L538.0,610.0L539.0,610.0L540.0,610.0L541.0,610.0L542.0,610.0L543.0,610.0L544.0,610.0L545.0,610.0L546.0,610.0L547.0,610.0L548.0,610.0L549.0,610.0L550.0,610.0L551.0,610.0L552.0,610.0L553.0,610.0L554.0,610.0L555.0,610.0L556.0,614.3L557.0,616.5L558.0,616.2L559.0,616.4L560.0,614.8L561.0,616.0L562.0,616.3L563.0,614.4L564.0,613.3L565.0,616.0L566.0,614.3L567.0,615.6L568.0,613.7L569.0,614.8L570.0,616.2L571.0,616.4L572.0,617.2L573.0,615.3L574.0,615.7L575.0,616.6L576.0,615.8L577.0,615.9L578.0,614.0L579.0,616.7L580.0,613.1L581.0,615.3L582.0,614.8L583.0,615.3L584.0,613.8L585.0,613.9L586.0,615.0L587.0,615.3L588.0,614.3L589.0,613.7L590.0,615.6L591.0,614.2L592.0,613.3L593.0,615.3L594.0,616.3L595.0,616.3L596.0,614.3L597.0,614.5L598.0,613.3L599.0,613.7L600.0,616.3L601.0,616.5L602.0,616.2L603.0,616.5L604.0,614.3L605.0,613.7L606.0,613.5L607.0,616.2L608.0,613.7L609.0,616.0L610.0,615.5L611.0,614.2L612.0,616.9L613.0,616.9L614.0,613.8L615.0,616.1L616.0,615.8L617.0,614.9L618.0,614.5L619.0,617.2L620.0,615.9L621.0,615.5L622.0,615.2L623.0,616.4L624.0,614.8L625.0,613.3L626.0,615.6L627.0,615.0L628.0,616.8L629.0,616.1L630.0,614.5L631.0,616.8L632.0,613.6L633.0,613.5L634.0,616.9L635.0,613.4L636.0,615.7L637.0,614.1L638.0,614.1L639.0,616.0L640.0,614.5L641.0,614.5L642.0,613.9L643.0,616.2L644.0,614.1L645.0,613.3L646.0,614.5L647.0,615.0L648.0,616.8L649.0,615.2L650.0,615.8L651.0,614.3L652.0,614.4L653.0,614.9L654.0,616.5L655.0,614.6L656.0,614.6L657.0,616.5L658.0,613.6L659.0,614.5L660.0,616.8L661.0,613.4L662.0,616.7L663.0,615.9L664.0,614.3L665.0,614.8L666.0,615.0L667.0,614.6L668.0,615.4L669.0,616.0L670.0,616.5L671.0,617.0L672.0,614.3L673.0,614.1L674.0,615.0L675.0,614.2L676.0,615.8L677.0,616.2L678.0,615.7L679.0,613.6L680.0,617.1L681.0,615.2L682.0,616.2L683.0,614.1L684.0,615.8L685.0,615.9L686.0,615.6L687.0,615.0L688.0,614.1L689.0,615.8L690.0,613.7L691.0,616.8L692.0,616.1L693.0,616.9L694.0,616.8L695.0,614.0L696.0,614.2L697.0,616.5L698.0,616.5L699.0,615.5L700.0,614.2L701.0,611.0L702.0,613.5L703.0,613.3L704.0,611.8L705.0,613.1L706.0,614.0L707.0,610.4L708.0,612.6L709.0,611.7L710.0,610.1L711.0,612.9L712.0,612.1L713.0,611.1L714.0,610.9L715.0,612.1L716.0,612.2L717.0,611.9L718.0,612.1L719.0,612.3L720.0,610.2L721.0,613.6L722.0,611.6L723.0,612.7L724.0,613.8L725.0,610.3L726.0,610.5L727.0,613.6L728.0,611.6L729.0,611.2L730.0,612.7L731.0,610.3L732.0,612.3L733.0,612.1L734.0,614.0L735.0,613.3L736.0,612.1L737.0,611.9L738.0,611.4L739.0,612.2L740.0,612.5L741.0,610.4L742.0,612.6L743.0,611.9L744.0,613.2L745.0,613.3L746.0,613.6L747.0,613.3L748.0,613.4L749.0,613.4L750.0,613.7L751.0,612.1L752.0,614.1L753.0,612.5L754.0,613.9L755.0,612.5L756.0,610.1L757.0,613.8L758.0,613.5L759.0,612.7L760.0,613.9L761.0,613.0L762.0,612.2L763.0,612.9L764.0,613.0L765.0,611.5L766.0,613.8L767.0,610.1L768.0,614.1L769.0,613.8L770.0,614.0L771.0,611.4L772.0,613.3L773.0,612.2L774.0,610.3L775.0,614.0L776.0,611.6L777.0,613.8L778.0,610.6L779.0,612.5L780.0,611.3L781.0,613.4L782.0,611.1L783.0,611.8L784.0,612.6L785.0,613.2L786.0,612.1L787.0,613.4L788.0,611.6L789.0,612.5L790.0,613.5L791.0,614.1L792.0,611.0L793.0,613.7L794.0,610.6L795.0,610.5L796.0,612.3L797.0,611.1L798.0,612.6L799.0,612.5L800.0,613.7L801.0,613.7L802.0,611.4L803.0,613.9L804.0,611.5L805.0,614.1L806.0,610.1L807.0,611.8L808.0,610.9L809.0,610.9L810.0,613.4L811.0,613.8L812.0,613.7L813.0,610.1L814.0,610.4L815.0,612.2L816.0,610.7L817.0,611.5L818.0,610.5L819.0,611.6L820.0,613.7L821.0,611.7L822.0,613.3L823.0,612.2L824.0,613.8L825.0,612.1L826.0,611.8L827.0,612.4L828.0,611.6L829.0,612.7L830.0,612.8L831.0,613.8L832.0,613.5L833.0,611.1L834.0,610.0L835.0,610.3L836.0,612.4L837.0,610.4L838.0,612.1L839.0,612.5L840.0,610.3L841.0,610.3L842.0,613.7L843.0,612.9L844.0,611.5L845.0,611.0L846.0,612.3L847.0,611.1L848.0,613.0L849.0,612.9L850.0,613.8L851.0,611.0L852.0,610.1L853.0,610.5L854.0,613.5L855.0,612.2L856.0,611.9L857.0,610.6L858.0,612.2L859.0,610.8L860.0,613.1L861.0,614.1L862.0,611.9L863.0,613.5L864.0,613.3L865.0,612.2L866.0,610.9L867.0,614.0L868.0,614.1L869.0,612.7L870.0,611.9L871.0,612.9L872.0,610.8L873.0,613.1L874.0,612.4L875.0,611.3L876.0,610.8L877.0,613.6L878.0,610.9L879.0,610.7L880.0,613.0L881.0,614.1L882.0,610.4L883.0,612.2L884.0,610.3L885.0,611.6L886.0,612.0L887.0,613.4L888.0,610.0L889.0,612.4L890.0,612.3L891.0,612.3L892.0,613.5L893.0,612.0L894.0,610.6L895.0,610.3L896.0,614.0L897.0,611.9L898.0,613.0L899.0,610.4L900.0,611.4L901.0,612.0L902.0,610.1L903.0,613.3L904.0,613.4L905.0,610.7L906.0,613.0L907.0,610.2L908.0,612.5L909.0,613.6L910.0,610.1L911.0,613.2L912.0,613.8L913.0,611.1L914.0,611.5L915.0,614.1L916.0,610.1L917.0,613.0L918.0,613.0L919.0,614.0L920.0,610.2L921.0,610.4L922.0,610.0L923.0,611.5L924.0,613.9L925.0,613.4L926.0,610.7L927.0,613.9L928.0,611.9L929.0,613.7L930.0,610.0L931.0,613.6L932.0,613.6L933.0,610.3L934.0,613.3L935.0,610.0L936.0,613.1L937.0,610.2L938.0,611.2L939.0,614.1L940.0,615.8L941.0,614.2L942.0,614.0L943.0,614.9L944.0,615.3L945.0,615.0L946.0,615.4L947.0,615.0L948.0,613.8L949.0,616.4L950.0,614.8L951.0,618.3L952.0,617.9L953.0,620.4L954.0,620.3L955.0,617.9L956.0,618.2L957.0,620.9L958.0,618.4L959.0,618.8L960.0,618.5L961.0,619.2L962.0,620.5L963.0,619.9L964.0,619.8L965.0,619.8L966.0,617.9L967.0,618.2L968.0,620.0L969.0,620.1L970.0,619.4L971.0,619.9L972.0,620.0L973.0,619.5L974.0,619.3L975.0,617.8L976.0,619.5L977.0,620.7L978.0,618.3L979.0,620.7L980.0,619.7L981.0,619.8L982.0,619.2L983.0,619.6L984.0,618.7L985.0,620.0L986.0,619.7L987.0,618.9L988.0,619.1L989.0,620.2L990.0,619.0L991.0,620.7L992.0,620.0L993.0,619.2L994.0,619.2L995.0,618.3L996.0,618.1L997.0,618.8L998.0,618.2L999.0,619.4L1000.0,620.0L1001.0,618.3L1002.0,620.7L1003.0,619.8L1004.0,618.3L1005.0,620.1L1006.0,619.3L1007.0,619.0L1008.0,619.6L1008.0,629Z" fill="#129612"/><path d="M81.0,615.9L81.4,603.8L81.8,612.9L82.2,602.4L82.6,609.2L83.0,614.8L83.4,618.3L83.8,610.6L84.2,617.1L84.6,603.9L85.0,603.1L85.4,620.1L85.8,603.9L86.2,609.0L86.6,620.2L87.0,616.0L87.4,609.8L87.8,606.7L88.2,616.4L88.6,611.1L89.0,613.1L89.4,623.2L89.8,605.5L90.2,608.6L90.6,605.3L91.0,617.2L91.4,624.0L91.8,615.1L92.2,605.6L92.6,603.2L93.0,607.9L93.4,623.0L93.8,608.1L94.2,605.1L94.6,606.3L95.0,607.3L95.4,605.7L95.8,610.3L96.2,612.2L96.6,611.8L97.0,605.1L97.4,608.0L97.8,610.8L98.2,608.7L98.6,613.3L99.0,619.8L99.4,606.3L99.8,621.6L100.2,613.8L100.6,600.9L101.0,600.2L101.4,612.4L101.8,612.6L102.2,604.2L102.6,614.2L103.0,610.0L103.4,619.4L103.8,610.6L104.2,617.1L104.6,613.0L105.0,606.8L105.4,623.5L105.8,616.1L106.2,622.2L106.6,602.8L107.0,612.6L107.4,609.2L107.8,606.1L108.2,610.3L108.6,604.2L109.0,607.0L109.4,605.0L109.8,605.4L110.2,610.5L110.6,603.4L111.0,605.4L111.4,605.0L111.8,610.0L112.2,623.3L112.6,608.1L113.0,606.4L113.4,615.4L113.8,615.5L114.2,608.6L114.6,615.7L115.0,610.4L115.4,605.4L115.8,616.0L116.2,612.6L116.6,616.1L117.0,612.9L117.4,608.9L117.8,601.0L118.2,604.9L118.6,606.3L119.0,607.7L119.4,622.2L119.8,612.0L120.2,613.6L120.6,610.1L121.0,607.9L121.4,605.0L121.8,605.6L122.2,609.5L122.6,598.3L123.0,607.7L123.4,610.2L123.8,615.2L124.2,604.8L124.6,598.8L125.0,612.7L125.4,610.1L125.8,610.9L126.2,604.5L126.6,614.7L127.0,602.8L127.4,613.3L127.8,608.9L128.2,599.5L128.6,612.2L129.0,606.5L129.4,605.0L129.8,609.7L130.2,615.8L130.6,613.6L131.0,613.6L131.4,611.7L131.8,605.7L132.2,613.5L132.6,605.8L133.0,604.0L133.4,610.4L133.8,610.8L134.2,603.0L134.6,607.3L135.0,610.4L135.4,613.0L135.8,611.7L136.2,609.8L136.6,606.9L137.0,613.4L137.4,604.0L137.8,620.6L138.2,608.6L138.6,616.2L139.0,607.7L139.4,602.1L139.8,609.2L140.2,615.2L140.6,602.9L141.0,602.8L141.4,614.5L141.8,615.6L142.2,606.8L142.6,606.8L143.0,604.5L143.4,603.9L143.8,602.5L144.2,601.7L144.6,612.8L145.0,613.1L145.4,611.2L145.8,611.8L146.2,615.7L146.6,603.6L147.0,615.2L147.4,612.3L147.8,608.0L148.2,610.8L148.6,606.8L149.0,606.2L149.4,606.2L149.8,611.5L150.2,615.6L150.6,605.4L151.0,603.5L151.4,610.6L151.8,606.0L152.2,604.0L152.6,618.0L153.0,609.9L153.4,602.9L153.8,591.5L154.2,585.0L154.6,598.5L155.0,597.4L155.4,586.8L155.8,585.8L156.2,594.0L156.6,582.8L157.0,589.6L157.4,589.5L157.8,582.9L158.2,591.2L158.6,595.9L159.0,594.8L159.4,598.7L159.8,592.7L160.2,594.5L160.6,588.4L161.0,594.3L161.4,600.7L161.8,579.5L162.2,593.1L162.6,582.9L163.0,595.0L163.4,577.0L163.8,594.5L164.2,596.0L164.6,578.4L165.0,593.8L165.4,595.2L165.8,594.5L166.2,582.7L166.6,587.4L167.0,584.5L167.4,582.6L167.8,601.0L168.2,592.9L168.6,581.6L169.0,579.9L169.4,601.4L169.8,598.4L170.2,587.1L170.6,597.1L171.0,585.5L171.4,597.0L171.8,598.8L172.2,583.6L172.6,600.8L173.0,595.6L173.4,588.2L173.8,595.2L174.2,601.7L174.6,588.4L175.0,587.9L175.4,614.6L175.8,608.9L176.2,612.3L176.6,614.1L177.0,598.4L177.4,596.8L177.8,597.1L178.2,590.4L178.6,606.0L179.0,596.0L179.4,603.7L179.8,591.9L180.2,594.8L180.6,593.3L181.0,592.2L181.4,586.0L181.8,597.5L182.2,597.5L182.6,597.8L183.0,590.7L183.4,603.2L183.8,604.6L184.2,587.3L184.6,594.7L185.0,594.5L185.4,604.8L185.8,597.1L186.2,581.4L186.6,595.3L187.0,596.2L187.4,592.9L187.8,584.0L188.2,580.5L188.6,598.3L189.0,593.7L189.4,592.1L189.8,593.6L190.2,583.6L190.6,599.0L191.0,591.4L191.4,596.5L191.8,590.1L192.2,582.5L192.6,595.6L193.0,597.8L193.4,584.2L193.8,600.6L194.2,592.4L194.6,589.0L195.0,598.4L195.4,589.7L195.8,602.8L196.2,596.8L196.6,604.6L197.0,590.5L197.4,593.7L197.8,594.6L198.2,609.3L198.6,601.6L199.0,607.4L199.4,607.0L199.8,609.8L200.2,613.9L200.6,613.3L201.0,614.2L201.4,609.3L201.8,612.3L202.2,606.2L202.6,610.3L203.0,602.7L203.4,605.4L203.8,600.3L204.2,606.6L204.6,613.7L205.0,602.7L205.4,609.3L205.8,613.4L206.2,606.7L206.6,610.6L207.0,614.3L207.4,607.3L207.8,610.2L208.2,610.0L208.6,602.8L209.0,604.8L209.4,614.2L209.8,605.9L210.2,611.3L210.6,612.9L211.0,616.2L211.4,606.6L211.8,614.4L212.2,620.6L212.6,608.5L213.0,603.5L213.4,623.1L213.8,621.7L214.2,615.9L214.6,606.8L215.0,605.1L215.4,604.0L215.8,608.1L216.2,622.3L216.6,614.1L217.0,606.3L217.4,608.5L217.8,614.6L218.2,615.3L218.6,607.5L219.0,612.8L219.4,618.7L219.8,611.0L220.2,614.6L220.6,611.5L221.0,605.3L221.4,609.1L221.8,598.1L222.2,614.5L222.6,616.7L223.0,623.0L223.4,598.7L223.8,605.5L224.2,605.5L224.6,610.5L225.0,618.5L225.4,614.9L225.8,607.8L226.2,608.6L226.6,609.7L227.0,616.0L227.4,622.3L227.8,605.3L228.2,613.8L228.6,605.6L229.0,609.8L229.4,610.7L229.8,611.5L230.2,616.0L230.6,610.4L231.0,621.3L231.4,614.2L231.8,613.4L232.2,610.6L232.6,611.1L233.0,609.8L233.4,615.3L233.8,619.6L234.2,607.9L234.6,604.9L235.0,622.4L235.4,603.8L235.8,615.3L236.2,609.3L236.6,608.4L237.0,621.0L237.4,613.7L237.8,614.8L238.2,603.7L238.6,602.3L239.0,613.1L239.4,610.1L239.8,620.7L240.2,613.0L240.6,620.6L241.0,607.1L241.4,616.1L241.8,602.7L242.2,605.7L242.6,605.4L243.0,613.1L243.4,615.9L243.8,614.9L244.2,617.1L244.6,608.3L245.0,603.3L245.4,610.3L245.8,614.0L246.2,608.7L246.6,607.4L247.0,619.9L247.4,618.6L247.8,616.6L248.2,592.2L248.6,601.4L249.0,606.6L249.4,603.2L249.8,587.8L250.2,584.3L250.6,598.7L251.0,606.1L251.4,602.4L251.8,603.3L252.2,589.3L252.6,582.1L253.0,588.8L253.4,598.3L253.8,593.2L254.2,594.9L254.6,602.3L255.0,580.2L255.4,601.5L255.8,596.5L256.2,580.0L256.6,586.0L257.0,579.5L257.4,592.6L257.8,594.8L258.2,600.8L258.6,597.2L259.0,583.5L259.4,593.4L259.8,598.5L260.2,596.3L260.6,579.1L261.0,578.2L261.4,591.8L261.8,598.9L262.2,600.8L262.6,585.3L263.0,580.8L263.4,581.7L263.8,584.0L264.2,589.0L264.6,581.8L265.0,593.0L265.4,593.2L265.8,599.1L266.2,602.1L266.6,601.7L267.0,595.8L267.4,593.1L267.8,592.6L268.2,602.0L268.6,607.6L269.0,599.1L269.4,604.3L269.8,589.8L270.2,598.1L270.6,613.2L271.0,610.7L271.4,608.6L271.8,616.0L272.2,613.4L272.6,612.3L273.0,612.8L273.4,615.9L273.8,599.5L274.2,609.0L274.6,605.8L275.0,621.9L275.4,616.7L275.8,607.8L276.2,612.3L276.6,612.7L277.0,606.6L277.4,603.7L277.8,605.2L278.2,609.2L278.6,611.0L279.0,615.3L279.4,604.8L279.8,615.7L280.2,604.1L280.6,612.2L281.0,607.7L281.4,607.5L281.8,615.5L282.2,611.2L282.6,606.9L283.0,611.5L283.4,609.3L283.8,605.5L284.2,615.9L284.6,606.1L285.0,602.3L285.4,620.6L285.8,611.2L286.2,614.2L286.6,615.2L287.0,616.5L287.4,604.8L287.8,604.0L288.2,604.3L288.6,617.5L289.0,608.7L289.4,608.3L289.8,618.4L290.2,614.4L290.6,605.1L291.0,618.2L291.4,622.9L291.8,607.2L292.2,614.5L292.6,607.3L293.0,605.8L293.4,616.4L293.8,611.2L294.2,609.5L294.6,605.3L295.0,623.6L295.4,606.1L295.8,617.1L296.2,611.2L296.6,620.6L297.0,615.9L297.4,607.3L297.8,598.6L298.2,603.7L298.6,618.9L299.0,613.4L299.4,615.6L299.8,614.9L300.2,606.8L300.6,608.7L301.0,598.2L301.4,621.8L301.8,612.0L302.2,609.2L302.6,606.8L303.0,615.0L303.4,604.1L303.8,600.0L304.2,607.3L304.6,607.2L305.0,617.8L305.4,618.0L305.8,616.9L306.2,604.4L306.6,609.8L307.0,610.0L307.4,606.9L307.8,614.9L308.2,608.3L308.6,620.6L309.0,616.2L309.4,604.5L309.8,608.6L310.2,617.8L310.6,613.5L311.0,602.9L311.4,603.9L311.8,604.7L312.2,614.2L312.6,606.4L313.0,612.2L313.4,605.9L313.8,609.5L314.2,611.6L314.6,614.9L315.0,591.8L315.4,586.8L315.8,586.3L316.2,590.8L316.6,590.7L317.0,590.8L317.4,610.9L317.8,609.1L318.2,612.0L318.6,614.1L319.0,607.3L319.4,598.8L319.8,603.0L320.2,608.6L320.6,604.0L321.0,606.1L321.4,609.9L321.8,613.9L322.2,603.8L322.6,603.4L323.0,615.0L323.4,621.3L323.8,605.9L324.2,607.7L324.6,603.0L325.0,608.5L325.4,613.9L325.8,610.9L326.2,608.8L326.6,603.4L327.0,609.5L327.4,606.1L327.8,618.5L328.2,606.5L328.6,608.1L329.0,607.1L329.4,609.5L329.8,603.9L330.2,606.9L330.6,597.8L331.0,612.1L331.4,604.2L331.8,623.7L332.2,611.3L332.6,599.8L333.0,611.5L333.4,623.2L333.8,605.5L334.2,610.7L334.6,614.3L335.0,621.6L335.4,612.1L335.8,613.6L336.2,614.9L336.6,606.4L337.0,610.8L337.4,612.1L337.8,614.5L338.2,608.6L338.6,610.9L339.0,606.7L339.4,603.1L339.8,613.9L340.2,603.9L340.6,618.7L341.0,610.6L341.4,607.0L341.8,602.7L342.2,618.1L342.6,606.9L343.0,614.9L343.4,592.8L343.8,591.2L344.2,606.9L344.6,598.6L345.0,600.1L345.4,600.9L345.8,597.8L346.2,599.7L346.6,596.2L347.0,595.7L347.4,588.9L347.8,591.9L348.2,584.1L348.6,579.6L349.0,596.9L349.4,594.4L349.8,579.3L350.2,595.5L350.6,601.6L351.0,598.6L351.4,594.8L351.8,577.3L352.2,576.9L352.6,588.3L353.0,581.6L353.4,583.8L353.8,588.4L354.2,592.0L354.6,578.2L355.0,597.8L355.4,592.8L355.8,594.5L356.2,589.1L356.6,591.4L357.0,582.2L357.4,591.0L357.8,579.7L358.2,587.9L358.6,588.4L359.0,598.1L359.4,595.2L359.8,602.4L360.2,579.1L360.6,594.2L361.0,601.9L361.4,591.0L361.8,592.8L362.2,598.2L362.6,598.9L363.0,589.6L363.4,597.8L363.8,607.6L364.2,599.2L364.6,603.5L365.0,593.3L365.4,617.5L365.8,622.5L366.2,612.9L366.6,603.5L367.0,605.5L367.4,605.3L367.8,610.2L368.2,614.3L368.6,609.6L369.0,608.2L369.4,615.6L369.8,610.1L370.2,611.1L370.6,603.7L371.0,614.9L371.4,616.0L371.8,616.2L372.2,606.4L372.6,614.7L373.0,598.5L373.4,610.1L373.8,613.8L374.2,617.9L374.6,624.1L375.0,602.8L375.4,611.5L375.8,615.1L376.2,612.2L376.6,609.8L377.0,615.1L377.4,617.7L377.8,615.9L378.2,603.7L378.6,612.6L379.0,612.3L379.4,622.8L379.8,612.0L380.2,612.2L380.6,622.9L381.0,614.4L381.4,604.2L381.8,615.3L382.2,609.1L382.6,621.6L383.0,609.1L383.4,603.7L383.8,604.8L384.2,609.8L384.6,611.3L385.0,607.9L385.4,609.1L385.8,615.4L386.2,613.9L386.6,607.1L387.0,617.8L387.4,611.3L387.8,599.0L388.2,608.9L388.6,598.2L389.0,604.4L389.4,612.9L389.8,614.8L390.2,612.0L390.6,606.0L391.0,611.2L391.4,609.9L391.8,615.7L392.2,605.0L392.6,610.8L393.0,615.1L393.4,609.6L393.8,605.4L394.2,608.8L394.6,613.2L395.0,597.7L395.4,607.7L395.8,616.0L396.2,603.6L396.6,600.1L397.0,604.0L397.4,624.5L397.8,615.0L398.2,606.9L398.6,606.8L399.0,607.7L399.4,603.2L399.8,623.1L400.2,618.5L400.6,610.0L401.0,606.8L401.4,610.1L401.8,618.5L402.2,608.2L402.6,616.8L403.0,604.5L403.4,611.2L403.8,608.8L404.2,607.9L404.6,614.2L405.0,613.0L405.4,610.8L405.8,610.4L406.2,612.0L406.6,611.5L407.0,609.0L407.4,618.1L407.8,610.4L408.2,605.2L408.6,604.3L409.0,608.8L409.4,614.3L409.8,601.5L410.2,619.6L410.6,603.2L411.0,617.3L411.4,606.8L411.8,606.6L412.2,609.9L412.6,612.9L413.0,623.9L413.4,611.9L413.8,612.5L414.2,605.3L414.6,611.6L415.0,611.7L415.4,613.3L415.8,624.3L416.2,612.1L416.6,604.6L417.0,605.3L417.4,603.1L417.8,614.2L418.2,613.5L418.6,601.9L419.0,623.6L419.4,607.2L419.8,608.6L420.2,606.2L420.6,611.3L421.0,605.0L421.4,612.3L421.8,611.4L422.2,622.3L422.6,612.8L423.0,607.3L423.4,607.8L423.8,612.9L424.2,610.0L424.6,610.8L425.0,613.1L425.4,615.7L425.8,601.8L426.2,597.6L426.6,606.6L427.0,615.0L427.4,615.8L427.8,618.6L428.2,607.5L428.6,608.5L429.0,607.0L429.4,610.4L429.8,609.1L430.2,610.2L430.6,612.6L431.0,605.1L431.4,608.3L431.8,620.8L432.2,615.4L432.6,617.9L433.0,610.0L433.4,610.8L433.8,608.0L434.2,606.1L434.6,612.8L435.0,614.9L435.4,614.7L435.8,609.3L436.2,603.5L436.6,601.6L437.0,615.3L437.4,610.6L437.8,622.1L438.2,606.5L438.6,611.9L439.0,606.1L439.4,603.5L439.8,621.4L440.2,610.5L440.6,603.9L441.0,613.4L441.4,612.5L441.8,616.2L442.2,610.3L442.6,607.5L443.0,608.6L443.4,606.0L443.8,604.7L444.2,609.5L444.6,610.3L445.0,621.9L445.4,602.1L445.8,606.0L446.2,619.8L446.6,613.2L447.0,604.1L447.4,622.9L447.8,603.0L448.2,613.5L448.6,607.8L449.0,613.6L449.4,612.8L449.8,598.2L450.2,619.3L450.6,604.2L451.0,611.6L451.4,603.4L451.8,608.1L452.2,619.6L452.6,616.9L453.0,605.9L453.4,613.5L453.8,607.0L454.2,608.7L454.6,621.7L455.0,619.2L455.4,608.8L455.8,597.8L456.2,609.4L456.6,614.3L457.0,608.3L457.4,609.1L457.8,606.3L458.2,609.6L458.6,602.8L459.0,607.8L459.4,607.9L459.8,606.0L460.2,613.0L460.6,616.0L461.0,605.1L461.4,609.3L461.8,613.3L462.2,610.0L462.6,615.2L463.0,605.9L463.4,610.7L463.8,607.0L464.2,602.8L464.6,612.3L465.0,606.0L465.4,612.3L465.8,616.1L466.2,612.4L466.6,615.8L467.0,611.3L467.4,598.4L467.8,604.5L468.2,604.3L468.6,620.3L469.0,607.7L469.4,608.6L469.8,608.3L470.2,623.1L470.6,622.2L471.0,608.4L471.4,618.5L471.8,605.6L472.2,618.3L472.6,613.8L473.0,602.8L473.4,608.7L473.8,608.0L474.2,614.7L474.6,622.6L475.0,607.6L475.4,603.1L475.8,606.5L476.2,611.8L476.6,607.3L477.0,605.3L477.4,608.4L477.8,606.1L478.2,612.7L478.6,603.0L479.0,606.3L479.4,612.9L479.8,617.6L480.2,614.7L480.6,607.4L481.0,603.1L481.4,622.8L481.8,611.4L482.2,612.8L482.6,612.1L483.0,603.8L483.4,611.6L483.8,603.2L484.2,612.5L484.6,600.4L485.0,621.8L485.4,608.7L485.8,619.7L486.2,612.5L486.6,608.9L487.0,610.4L487.4,606.4L487.8,608.9L488.2,613.3L488.6,599.8L489.0,607.7L489.4,607.7L489.8,615.5L490.2,605.6L490.6,602.8L491.0,610.3L491.4,618.0L491.8,615.8L492.2,608.4L492.6,616.1L493.0,606.0L493.4,607.8L493.8,614.9L494.2,612.6L494.6,611.7L495.0,617.4L495.4,601.2L495.8,615.4L496.2,615.3L496.6,608.6L497.0,620.8L497.4,604.7L497.8,607.3L498.2,613.7L498.6,614.9L499.0,605.2L499.4,613.9L499.8,620.5L500.2,609.8L500.6,607.6L501.0,602.9L501.4,622.4L501.8,611.0L502.2,613.9L502.6,612.4L503.0,608.6L503.4,618.2L503.8,604.3L504.2,617.8L504.6,610.4L505.0,608.5L505.4,605.9L505.8,615.3L506.2,623.3L506.6,615.9L507.0,604.7L507.4,602.1L507.8,602.5L508.2,609.1L508.6,610.6L509.0,616.2L509.4,607.0L509.8,599.4L510.2,604.5L510.6,617.9L511.0,608.4L511.4,607.1L511.8,610.9L512.2,604.3L512.6,612.3L513.0,605.6L513.4,614.0L513.8,605.2L514.2,616.0L514.6,606.4L515.0,610.6L515.4,607.6L515.8,607.9L516.2,607.1L516.6,614.3L517.0,603.7L517.4,612.9L517.8,602.8L518.2,619.3L518.6,612.8L519.0,614.2L519.4,622.9L519.8,618.8L520.2,619.8L520.6,605.6L521.0,603.7L521.4,616.9L521.8,614.1L522.2,623.2L522.6,603.6L523.0,601.1L523.4,619.0L523.8,610.0L524.2,613.3L524.6,605.0L525.0,604.0L525.4,616.8L525.8,610.7L526.2,614.8L526.6,607.2L527.0,612.7L527.4,611.3L527.8,610.4L528.2,614.9L528.6,613.5L529.0,606.6L529.4,615.3L529.8,606.6L530.2,612.3L530.6,604.3L531.0,612.4L531.4,604.3L531.8,615.2L532.2,605.2L532.6,601.6L533.0,613.8L533.4,596.1L533.8,599.8L534.2,592.2L534.6,586.3L535.0,594.3L535.4,589.0L535.8,599.9L536.2,584.5L536.6,585.3L537.0,586.9L537.4,600.0L537.8,582.5L538.2,593.7L538.6,591.8L539.0,595.7L539.4,587.5L539.8,599.5L540.2,592.4L540.6,582.5L541.0,591.6L541.4,583.6L541.8,578.2L542.2,596.2L542.6,592.6L543.0,582.7L543.4,582.9L543.8,601.2L544.2,579.4L544.6,599.5L545.0,577.8L545.4,590.3L545.8,585.9L546.2,582.1L546.6,584.9L547.0,584.9L547.4,581.1L547.8,595.2L548.2,591.9L548.6,581.2L549.0,593.4L549.4,579.8L549.8,594.1L550.2,578.6L550.6,589.5L551.0,582.7L551.4,602.2L551.8,587.2L552.2,581.9L552.6,587.5L553.0,599.3L553.4,588.9L553.8,593.3L554.2,592.2L554.6,587.2L555.0,607.4L555.4,610.3L555.8,620.6L556.2,607.8L556.6,621.3L557.0,612.9L557.4,607.5L557.8,607.2L558.2,603.3L558.6,606.4L559.0,603.3L559.4,606.5L559.8,623.6L560.2,616.3L560.6,620.0L561.0,622.7L561.4,606.7L561.8,616.9L562.2,602.2L562.6,605.8L563.0,614.2L563.4,611.3L563.8,612.9L564.2,613.5L564.6,597.2L565.0,607.1L565.4,604.6L565.8,608.7L566.2,606.9L566.6,614.9L567.0,608.2L567.4,609.2L567.8,614.4L568.2,614.3L568.6,608.1L569.0,614.7L569.4,604.7L569.8,604.9L570.2,606.6L570.6,607.8L571.0,606.4L571.4,604.0L571.8,604.7L572.2,614.2L572.6,617.7L573.0,603.0L573.4,608.6L573.8,614.9L574.2,612.4L574.6,609.6L575.0,611.9L575.4,622.4L575.8,602.8L576.2,609.2L576.6,604.4L577.0,607.4L577.4,614.6L577.8,613.2L578.2,611.0L578.6,607.0L579.0,603.5L579.4,607.2L579.8,613.1L580.2,610.2L580.6,603.9L581.0,602.7L581.4,618.7L581.8,600.0L582.2,610.4L582.6,618.2L583.0,606.5L583.4,613.9L583.8,618.2L584.2,613.4L584.6,611.8L585.0,602.7L585.4,603.1L585.8,615.7L586.2,601.7L586.6,610.5L587.0,603.2L587.4,601.8L587.8,604.7L588.2,610.8L588.6,614.2L589.0,600.1L589.4,611.0L589.8,612.3L590.2,610.8L590.6,620.3L591.0,610.6L591.4,603.2L591.8,605.9L592.2,622.4L592.6,599.9L593.0,622.6L593.4,609.1L593.8,602.7L594.2,611.2L594.6,606.0L595.0,609.0L595.4,604.0L595.8,606.0L596.2,600.7L596.6,610.4L597.0,621.7L597.4,606.1L597.8,620.2L598.2,614.5L598.6,617.9L599.0,609.5L599.4,608.8L599.8,614.3L600.2,620.2L600.6,611.6L601.0,604.9L601.4,615.0L601.8,621.6L602.2,605.9L602.6,609.3L603.0,620.0L603.4,607.4L603.8,605.2L604.2,596.9L604.6,610.9L605.0,602.0L605.4,601.9L605.8,614.9L606.2,604.6L606.6,601.9L607.0,603.5L607.4,603.8L607.8,610.1L608.2,603.5L608.6,605.5L609.0,605.5L609.4,601.8L609.8,613.4L610.2,610.3L610.6,603.1L611.0,607.9L611.4,608.8L611.8,606.5L612.2,613.7L612.6,605.8L613.0,611.9L613.4,610.0L613.8,611.5L614.2,613.3L614.6,602.6L615.0,619.6L615.4,621.1L615.8,606.5L616.2,619.9L616.6,603.9L617.0,604.8L617.4,606.1L617.8,614.6L618.2,610.6L618.6,611.1L619.0,612.2L619.4,610.4L619.8,612.2L620.2,613.9L620.6,620.2L621.0,612.3L621.4,615.8L621.8,619.9L622.2,604.1L622.6,621.0L623.0,602.8L623.4,622.5L623.8,608.2L624.2,609.2L624.6,621.1L625.0,605.5L625.4,614.4L625.8,623.9L626.2,607.0L626.6,606.1L627.0,608.0L627.4,612.6L627.8,618.7L628.2,617.9L628.6,613.5L629.0,603.7L629.4,600.2L629.8,613.1L630.2,618.7L630.6,616.4L631.0,619.1L631.4,602.9L631.8,608.0L632.2,611.6L632.6,601.2L633.0,610.6L633.4,613.2L633.8,613.9L634.2,611.9L634.6,605.4L635.0,615.5L635.4,609.4L635.8,614.2L636.2,605.7L636.6,623.1L637.0,612.3L637.4,607.1L637.8,599.0L638.2,613.7L638.6,603.5L639.0,617.3L639.4,604.0L639.8,610.0L640.2,624.1L640.6,621.5L641.0,615.4L641.4,607.0L641.8,607.7L642.2,604.3L642.6,603.0L643.0,605.9L643.4,617.6L643.8,612.4L644.2,614.0L644.6,604.6L645.0,616.2L645.4,610.2L645.8,615.6L646.2,602.4L646.6,613.6L647.0,609.6L647.4,602.9L647.8,614.8L648.2,608.7L648.6,612.9L649.0,616.0L649.4,602.7L649.8,613.7L650.2,607.7L650.6,621.7L651.0,620.3L651.4,612.1L651.8,602.7L652.2,615.7L652.6,603.1L653.0,612.9L653.4,616.1L653.8,609.6L654.2,609.3L654.6,609.2L655.0,615.6L655.4,624.5L655.8,619.7L656.2,615.0L656.6,618.0L657.0,607.4L657.4,609.1L657.8,620.2L658.2,623.1L658.6,606.7L659.0,616.0L659.4,603.8L659.8,614.7L660.2,624.5L660.6,609.7L661.0,609.3L661.4,618.4L661.8,618.0L662.2,617.0L662.6,602.1L663.0,610.5L663.4,612.3L663.8,612.4L664.2,607.1L664.6,605.8L665.0,605.6L665.4,610.9L665.8,611.0L666.2,613.6L666.6,613.1L667.0,620.6L667.4,616.0L667.8,604.0L668.2,612.5L668.6,609.3L669.0,608.9L669.4,615.8L669.8,603.9L670.2,617.6L670.6,607.0L671.0,609.6L671.4,600.2L671.8,609.5L672.2,615.4L672.6,604.7L673.0,612.4L673.4,620.7L673.8,601.5L674.2,622.4L674.6,603.9L675.0,608.4L675.4,612.5L675.8,606.1L676.2,604.9L676.6,610.8L677.0,604.5L677.4,603.9L677.8,621.0L678.2,602.8L678.6,615.4L679.0,609.9L679.4,605.4L679.8,606.2L680.2,615.8L680.6,604.9L681.0,608.2L681.4,622.7L681.8,610.6L682.2,609.3L682.6,615.5L683.0,607.0L683.4,605.7L683.8,608.7L684.2,618.6L684.6,606.6L685.0,606.3L685.4,609.6L685.8,607.1L686.2,617.2L686.6,603.7L687.0,608.4L687.4,602.8L687.8,608.2L688.2,619.9L688.6,620.2L689.0,602.3L689.4,617.6L689.8,609.8L690.2,616.2L690.6,622.0L691.0,605.9L691.4,607.0L691.8,605.5L692.2,606.7L692.6,606.9L693.0,598.3L693.4,615.6L693.8,616.1L694.2,607.2L694.6,616.2L695.0,612.2L695.4,606.2L695.8,614.4L696.2,611.6L696.6,613.1L697.0,611.7L697.4,603.1L697.8,607.4L698.2,605.5L698.6,600.5L699.0,607.5L699.4,616.7L699.8,617.0L700.2,619.2L700.6,605.9L701.0,617.3L701.4,611.6L701.8,624.5L702.2,616.8L702.6,616.1L703.0,623.8L703.4,603.2L703.8,618.5L704.2,613.8L704.6,620.0L705.0,623.7L705.4,607.7L705.8,619.1L706.2,618.8L706.6,603.2L707.0,615.3L707.4,612.6L707.8,612.5L708.2,604.6L708.6,611.3L709.0,615.5L709.4,610.3L709.8,622.0L710.2,604.1L710.6,608.2L711.0,604.4L711.4,603.0L711.8,615.4L712.2,614.2L712.6,605.4L713.0,612.6L713.4,613.1L713.8,622.0L714.2,608.9L714.6,613.5L715.0,609.0L715.4,624.5L715.8,607.9L716.2,623.1L716.6,608.8L717.0,624.4L717.4,619.8L717.8,614.8L718.2,610.9L718.6,614.2L719.0,607.8L719.4,622.0L719.8,602.1L720.2,611.9L720.6,614.8L721.0,603.3L721.4,606.1L721.8,613.6L722.2,616.2L722.6,605.4L723.0,601.9L723.4,612.4L723.8,610.6L724.2,603.4L724.6,603.8L725.0,611.9L725.4,617.6L725.8,612.0L726.2,606.9L726.6,614.0L727.0,613.1L727.4,606.9L727.8,605.8L728.2,608.0L728.6,621.4L729.0,601.1L729.4,606.0L729.8,604.4L730.2,619.2L730.6,609.5L731.0,605.3L731.4,611.8L731.8,599.6L732.2,603.1L732.6,605.9L733.0,608.8L733.4,604.9L733.8,624.1L734.2,615.3L734.6,612.7L735.0,611.7L735.4,621.8L735.8,611.0L736.2,613.6L736.6,617.4L737.0,602.8L737.4,605.1L737.8,604.9L738.2,605.0L738.6,602.3L739.0,615.2L739.4,612.8L739.8,602.9L740.2,615.2L740.6,608.7L741.0,611.4L741.4,613.6L741.8,610.0L742.2,599.9L742.6,602.4L743.0,618.9L743.4,599.0L743.8,613.1L744.2,609.8L744.6,605.0L745.0,614.1L745.4,613.0L745.8,605.3L746.2,618.7L746.6,614.9L747.0,601.0L747.4,602.1L747.8,610.6L748.2,608.1L748.6,611.8L749.0,608.5L749.4,607.4L749.8,609.4L750.2,617.4L750.6,615.1L751.0,615.7L751.4,605.5L751.8,614.7L752.2,606.4L752.6,602.8L753.0,612.7L753.4,609.1L753.8,612.1L754.2,615.1L754.6,615.9L755.0,607.0L755.4,606.8L755.8,613.8L756.2,620.8L756.6,623.3L757.0,603.7L757.4,615.8L757.8,604.1L758.2,613.3L758.6,609.4L759.0,611.8L759.4,621.5L759.8,607.5L760.2,604.9L760.6,618.6L761.0,605.6L761.4,613.6L761.8,609.5L762.2,603.5L762.6,611.3L763.0,616.2L763.4,615.3L763.8,612.0L764.2,623.3L764.6,607.1L765.0,614.4L765.4,608.0L765.8,617.9L766.2,607.4L766.6,613.9L767.0,608.2L767.4,619.1L767.8,601.3L768.2,605.0L768.6,619.7L769.0,621.6L769.4,614.2L769.8,615.2L770.2,606.0L770.6,607.4L771.0,615.5L771.4,610.6L771.8,603.5L772.2,608.4L772.6,620.5L773.0,620.6L773.4,618.2L773.8,612.9L774.2,605.3L774.6,609.1L775.0,621.5L775.4,610.4L775.8,608.0L776.2,612.1L776.6,609.8L777.0,604.6L777.4,614.4L777.8,615.7L778.2,610.0L778.6,602.8L779.0,612.8L779.4,615.8L779.8,606.5L780.2,615.3L780.6,606.2L781.0,610.6L781.4,614.4L781.8,613.0L782.2,617.9L782.6,612.0L783.0,608.3L783.4,617.6L783.8,602.8L784.2,615.8L784.6,612.6L785.0,607.8L785.4,614.6L785.8,603.3L786.2,610.6L786.6,609.0L787.0,612.4L787.4,606.2L787.8,603.5L788.2,611.8L788.6,608.9L789.0,606.2L789.4,615.4L789.8,612.0L790.2,599.9L790.6,616.9L791.0,604.2L791.4,604.0L791.8,613.0L792.2,607.6L792.6,606.1L793.0,616.9L793.4,598.2L793.8,615.4L794.2,624.1L794.6,608.3L795.0,608.7L795.4,614.3L795.8,610.2L796.2,608.7L796.6,610.0L797.0,610.7L797.4,620.1L797.8,615.6L798.2,605.3L798.6,612.2L799.0,605.9L799.4,610.2L799.8,613.5L800.2,611.0L800.6,605.4L801.0,611.4L801.4,608.6L801.8,622.7L802.2,621.2L802.6,608.3L803.0,606.7L803.4,616.2L803.8,621.3L804.2,615.7L804.6,610.7L805.0,606.5L805.4,615.1L805.8,603.3L806.2,607.2L806.6,603.4L807.0,606.3L807.4,609.5L807.8,617.8L808.2,611.4L808.6,614.2L809.0,614.4L809.4,608.9L809.8,614.9L810.2,611.9L810.6,603.3L811.0,614.0L811.4,607.0L811.8,615.4L812.2,601.7L812.6,604.4L813.0,605.6L813.4,623.7L813.8,611.1L814.2,608.8L814.6,616.0L815.0,604.3L815.4,622.7L815.8,603.9L816.2,622.5L816.6,624.0L817.0,609.3L817.4,616.5L817.8,618.1L818.2,614.5L818.6,607.3L819.0,619.0L819.4,621.9L819.8,609.4L820.2,611.7L820.6,609.5L821.0,614.4L821.4,611.3L821.8,619.5L822.2,610.1L822.6,605.0L823.0,605.0L823.4,612.8L823.8,615.6L824.2,607.2L824.6,610.0L825.0,606.4L825.4,607.9L825.8,603.5L826.2,603.1L826.6,605.8L827.0,612.2L827.4,614.5L827.8,606.5L828.2,604.7L828.6,618.8L829.0,607.5L829.4,605.3L829.8,609.1L830.2,603.5L830.6,603.0L831.0,611.4L831.4,618.9L831.8,613.3L832.2,610.0L832.6,611.9L833.0,606.8L833.4,605.5L833.8,607.2L834.2,607.9L834.6,615.7L835.0,606.5L835.4,612.4L835.8,621.9L836.2,615.8L836.6,604.4L837.0,608.0L837.4,604.8L837.8,612.2L838.2,611.1L838.6,611.8L839.0,615.7L839.4,603.3L839.8,612.0L840.2,613.0L840.6,607.4L841.0,614.1L841.4,608.3L841.8,610.5L842.2,612.3L842.6,606.5L843.0,608.8L843.4,605.3L843.8,607.5L844.2,620.0L844.6,609.1L845.0,603.4L845.4,619.9L845.8,599.4L846.2,616.0L846.6,604.9L847.0,604.8L847.4,614.9L847.8,609.3L848.2,606.9L848.6,607.7L849.0,612.5L849.4,601.7L849.8,611.1L850.2,602.4L850.6,608.2L851.0,612.2L851.4,607.9L851.8,620.6L852.2,605.3L852.6,613.7L853.0,616.7L853.4,603.7L853.8,611.9L854.2,608.5L854.6,608.8L855.0,606.5L855.4,615.8L855.8,605.1L856.2,603.3L856.6,611.0L857.0,608.3L857.4,610.4L857.8,608.4L858.2,613.6L858.6,620.7L859.0,608.3L859.4,599.0L859.8,616.7L860.2,611.8L860.6,614.8L861.0,604.3L861.4,605.7L861.8,597.9L862.2,613.6L862.6,615.1L863.0,605.5L863.4,601.3L863.8,613.2L864.2,614.4L864.6,615.2L865.0,621.2L865.4,613.0L865.8,604.5L866.2,615.5L866.6,609.0L867.0,621.9L867.4,607.2L867.8,610.0L868.2,611.4L868.6,614.5L869.0,619.9L869.4,608.8L869.8,617.7L870.2,612.1L870.6,614.0L871.0,612.6L871.4,603.4L871.8,605.9L872.2,618.2L872.6,614.1L873.0,615.8L873.4,603.2L873.8,604.4L874.2,609.5L874.6,605.3L875.0,601.9L875.4,606.3L875.8,614.6L876.2,602.9L876.6,607.3L877.0,609.0L877.4,603.8L877.8,605.9L878.2,609.4L878.6,599.5L879.0,606.8L879.4,606.3L879.8,623.9L880.2,615.9L880.6,603.6L881.0,612.4L881.4,600.7L881.8,596.6L882.2,611.0L882.6,613.0L883.0,604.6L883.4,618.9L883.8,601.5L884.2,611.4L884.6,604.0L885.0,605.4L885.4,604.8L885.8,600.3L886.2,598.8L886.6,618.9L887.0,604.7L887.4,603.3L887.8,601.4L888.2,606.2L888.6,612.5L889.0,608.1L889.4,609.6L889.8,605.8L890.2,609.6L890.6,607.2L891.0,616.3L891.4,608.9L891.8,604.0L892.2,610.6L892.6,602.4L893.0,597.8L893.4,600.3L893.8,607.1L894.2,614.2L894.6,604.0L895.0,608.8L895.4,610.0L895.8,612.4L896.2,599.2L896.6,600.7L897.0,621.0L897.4,607.3L897.8,595.6L898.2,605.8L898.6,620.2L899.0,607.4L899.4,604.9L899.8,612.4L900.2,607.2L900.6,602.0L901.0,602.1L901.4,612.3L901.8,608.9L902.2,606.7L902.6,606.1L903.0,600.5L903.4,604.3L903.8,603.0L904.2,616.4L904.6,617.0L905.0,605.5L905.4,606.7L905.8,603.2L906.2,594.5L906.6,607.2L907.0,618.0L907.4,606.4L907.8,612.7L908.2,600.7L908.6,599.9L909.0,601.4L909.4,612.8L909.8,604.6L910.2,614.0L910.6,605.3L911.0,602.4L911.4,600.4L911.8,604.9L912.2,603.6L912.6,610.2L913.0,609.3L913.4,612.1L913.8,608.2L914.2,604.7L914.6,613.8L915.0,601.3L915.4,611.8L915.8,599.8L916.2,612.6L916.6,606.1L917.0,610.3L917.4,612.6L917.8,605.4L918.2,603.9L918.6,610.8L919.0,606.7L919.4,602.7L919.8,603.4L920.2,602.4L920.6,599.4L921.0,607.9L921.4,602.6L921.8,606.0L922.2,605.6L922.6,609.0L923.0,610.5L923.4,611.3L923.8,608.3L924.2,598.0L924.6,617.2L925.0,607.6L925.4,600.5L925.8,618.6L926.2,613.3L926.6,607.4L927.0,601.3L927.4,605.4L927.8,605.5L928.2,606.3L928.6,602.9L929.0,611.0L929.4,610.2L929.8,616.6L930.2,619.5L930.6,609.9L931.0,607.2L931.4,609.5L931.8,605.4L932.2,609.9L932.6,595.1L933.0,603.5L933.4,608.0L933.8,611.9L934.2,606.7L934.6,598.5L935.0,612.0L935.4,616.2L935.8,607.3L936.2,612.0L936.6,620.6L937.0,607.0L937.4,620.1L937.8,612.6L938.2,604.2L938.6,606.4L939.0,603.7L939.4,605.0L939.8,606.1L940.2,601.6L940.6,604.1L941.0,606.7L941.4,614.4L941.8,615.5L942.2,610.1L942.6,606.3L943.0,612.7L943.4,603.7L943.8,607.0L944.2,603.6L944.6,621.0L945.0,607.8L945.4,600.3L945.8,605.6L946.2,608.8L946.6,611.7L947.0,603.1L947.4,601.4L947.8,608.7L948.2,601.4L948.6,611.2L949.0,608.0L949.4,611.9L949.8,610.5L950.2,602.7L950.6,604.8L951.0,601.5L951.4,607.0L951.8,601.8L952.2,605.6L952.6,621.3L953.0,608.3L953.4,607.8L953.8,611.4L954.2,602.9L954.6,611.0L955.0,613.0L955.4,606.4L955.8,603.0L956.2,609.4L956.6,606.3L957.0,605.3L957.4,604.7L957.8,599.8L958.2,612.2L958.6,603.5L959.0,603.1L959.4,600.1L959.8,620.7L960.2,623.0L960.6,612.5L961.0,614.9L961.4,614.8L961.8,604.6L962.2,617.7L962.6,606.1L963.0,617.3L963.4,621.0L963.8,615.3L964.2,614.7L964.6,609.4L965.0,613.6L965.4,621.4L965.8,618.9L966.2,610.6L966.6,618.2L967.0,604.9L967.4,606.9L967.8,616.0L968.2,608.6L968.6,620.0L969.0,617.9L969.4,618.6L969.8,612.7L970.2,609.3L970.6,620.4L971.0,622.5L971.4,626.9L971.8,607.4L972.2,617.9L972.6,608.4L973.0,607.4L973.4,613.6L973.8,611.2L974.2,616.6L974.6,611.8L975.0,608.1L975.4,608.5L975.8,616.9L976.2,627.4L976.6,606.6L977.0,611.1L977.4,612.4L977.8,606.3L978.2,607.0L978.6,618.9L979.0,616.8L979.4,601.6L979.8,614.7L980.2,613.5L980.6,606.8L981.0,607.0L981.4,626.5L981.8,615.4L982.2,625.2L982.6,613.4L983.0,611.4L983.4,611.1L983.8,612.8L984.2,611.2L984.6,605.9L985.0,618.2L985.4,607.8L985.8,611.8L986.2,611.7L986.6,614.2L987.0,609.1L987.4,617.8L987.8,620.1L988.2,625.0L988.6,611.1L989.0,615.5L989.4,617.5L989.8,620.0L990.2,626.7L990.6,620.4L991.0,607.9L991.4,621.2L991.8,612.9L992.2,626.1L992.6,621.4L993.0,626.6L993.4,611.3L993.8,627.3L994.2,624.6L994.6,607.9L995.0,621.1L995.4,610.8L995.8,611.4L996.2,617.9L996.6,614.0L997.0,613.1L997.4,628.1L997.8,616.7L998.2,609.0L998.6,613.0L999.0,613.6L999.4,614.5L999.8,619.5L1000.2,621.2L1000.6,613.4L1001.0,618.3L1001.4,618.7L1001.8,605.4L1002.2,620.5L1002.6,616.9L1003.0,611.8L1003.4,610.0L1003.8,610.8L1004.2,610.8L1004.6,608.3L1005.0,609.9L1005.4,615.2L1005.8,621.6L1006.2,610.2L1006.6,611.5L1007.0,620.3L1007.4,621.2L1007.8,618.4" fill="none" stroke="#f6f61c" stroke-width="1.1"/><path d="M81.0,597.4L81.5,596.1L82.0,594.7L82.5,590.9L83.0,591.9L83.5,588.9L84.0,586.5L84.5,584.9L85.0,584.7L85.5,585.8L86.0,583.0L86.5,583.2L87.0,584.4L87.5,586.1L88.0,584.9L88.5,583.0L89.0,586.9L89.5,585.3L90.0,585.2L90.5,585.0L91.0,585.8L91.5,585.6L92.0,584.4L92.5,583.9L93.0,584.4L93.5,585.4L94.0,583.6L94.5,584.2L95.0,585.8L95.5,583.8L96.0,584.6L96.5,586.3L97.0,583.3L97.5,585.0L98.0,586.8L98.5,584.2L99.0,585.2L99.5,584.5L100.0,582.6L100.5,582.8L101.0,581.6L101.5,583.3L102.0,583.9L102.5,585.0L103.0,590.6L103.5,590.6L104.0,595.5L104.5,596.5L105.0,595.3L105.5,594.3L106.0,593.6L106.5,587.4L107.0,586.3L107.5,583.8L108.0,581.9L108.5,584.6L109.0,585.2L109.5,584.0L110.0,582.1L110.5,582.3L111.0,584.2L111.5,583.2L112.0,583.1L112.5,582.7L113.0,583.8L113.5,582.6L114.0,582.8L114.5,584.3L115.0,583.5L115.5,581.7L116.0,582.0L116.5,584.8L117.0,582.4L117.5,582.9L118.0,585.0L118.5,581.2L119.0,582.9L119.5,585.1L120.0,582.3L120.5,585.3L121.0,584.5L121.5,584.6L122.0,585.1L122.5,584.7L123.0,582.1L123.5,583.2L124.0,583.9L124.5,582.5L125.0,581.6L125.5,583.6L126.0,587.5L126.5,587.9L127.0,588.2L127.5,595.1L128.0,593.6L128.5,597.4L129.0,593.4L129.5,594.8L130.0,590.1L130.5,586.9L131.0,584.3L131.5,585.3L132.0,581.2L132.5,582.9L133.0,585.3L133.5,581.8L134.0,584.2L134.5,583.0L135.0,583.5L135.5,585.4L136.0,581.3L136.5,584.6L137.0,584.5L137.5,585.2L138.0,584.3L138.5,582.1L139.0,582.1L139.5,581.9L140.0,583.0L140.5,583.8L141.0,581.8L141.5,581.4L142.0,585.2L142.5,581.8L143.0,584.5L143.5,584.4L144.0,581.7L144.5,584.2L145.0,582.1L145.5,583.8L146.0,585.7L146.5,582.5L147.0,582.8L147.5,583.4L148.0,582.4L148.5,583.0L149.0,581.3L149.5,584.4L150.0,584.7L150.5,587.6L151.0,589.9L151.5,594.2L152.0,597.2L152.5,592.7L153.0,590.2L153.5,587.8L154.0,587.2L154.5,585.5L155.0,581.8L155.5,583.1L156.0,578.7L156.5,582.7L157.0,582.8L157.5,579.7L158.0,582.9L158.5,579.5L159.0,579.2L159.5,581.8L160.0,583.1L160.5,582.2L161.0,579.8L161.5,579.7L162.0,582.8L162.5,579.3L163.0,581.7L163.5,581.1L164.0,579.9L164.5,582.0L165.0,580.6L165.5,582.3L166.0,582.2L166.5,580.7L167.0,581.8L167.5,581.7L168.0,580.2L168.5,578.8L169.0,582.7L169.5,582.6L170.0,580.6L170.5,579.2L171.0,580.7L171.5,582.1L172.0,581.5L172.5,580.3L173.0,578.7L173.5,581.9L174.0,586.8L174.5,587.9L175.0,589.6L175.5,591.3L176.0,596.5L176.5,594.2L177.0,591.8L177.5,588.0L178.0,588.9L178.5,586.2L179.0,584.2L179.5,583.5L180.0,583.5L180.5,584.3L181.0,585.5L181.5,581.9L182.0,585.1L182.5,582.8L183.0,585.7L183.5,586.0L184.0,584.1L184.5,585.7L185.0,585.3L185.5,585.6L186.0,585.4L186.5,585.8L187.0,583.4L187.5,582.2L188.0,586.0L188.5,584.4L189.0,585.4L189.5,582.7L190.0,584.6L190.5,581.8L191.0,584.4L191.5,584.0L192.0,585.1L192.5,583.2L193.0,581.8L193.5,583.7L194.0,581.7L194.5,585.8L195.0,582.1L195.5,585.5L196.0,584.5L196.5,579.1L197.0,585.2L197.5,586.0L198.0,590.1L198.5,592.3L199.0,593.6L199.5,596.9L200.0,596.7L200.5,594.2L201.0,591.0L201.5,591.2L202.0,587.4L202.5,579.3L203.0,585.6L203.5,583.1L204.0,584.1L204.5,584.3L205.0,584.9L205.5,584.5L206.0,584.6L206.5,585.2L207.0,585.0L207.5,583.7L208.0,585.3L208.5,585.5L209.0,585.7L209.5,584.0L210.0,585.7L210.5,584.1L211.0,581.3L211.5,582.5L212.0,583.2L212.5,581.7L213.0,582.2L213.5,583.0L214.0,582.6L214.5,581.6L215.0,581.8L215.5,582.7L216.0,583.6L216.5,581.2L217.0,582.3L217.5,583.7L218.0,583.2L218.5,584.3L219.0,585.3L219.5,584.6L220.0,584.1L220.5,585.5L221.0,587.1L221.5,587.0L222.0,592.7L222.5,591.3L223.0,594.1L223.5,598.0L224.0,596.9L224.5,593.6L225.0,589.8L225.5,589.3L226.0,583.8L226.5,582.3L227.0,584.1L227.5,583.4L228.0,583.0L228.5,583.7L229.0,584.5L229.5,582.2L230.0,583.1L230.5,582.6L231.0,585.2L231.5,581.6L232.0,582.1L232.5,581.6L233.0,584.7L233.5,583.3L234.0,581.2L234.5,584.2L235.0,581.7L235.5,581.3L236.0,584.1L236.5,585.1L237.0,583.9L237.5,584.0L238.0,583.6L238.5,582.8L239.0,585.6L239.5,582.8L240.0,582.8L240.5,585.1L241.0,583.4L241.5,582.3L242.0,581.3L242.5,584.7L243.0,583.4L243.5,585.1L244.0,583.3L244.5,582.6L245.0,586.6L245.5,588.2L246.0,590.1L246.5,592.8L247.0,598.1L247.5,594.1L248.0,588.6L248.5,588.9L249.0,587.4L249.5,586.7L250.0,577.6L250.5,582.8L251.0,579.6L251.5,580.8L252.0,583.9L252.5,582.9L253.0,582.4L253.5,579.7L254.0,582.1L254.5,582.7L255.0,582.8L255.5,582.2L256.0,581.6L256.5,582.3L257.0,582.4L257.5,583.9L258.0,581.2L258.5,580.0L259.0,580.3L259.5,579.8L260.0,581.7L260.5,582.8L261.0,574.6L261.5,583.4L262.0,581.0L262.5,580.4L263.0,584.0L263.5,580.8L264.0,581.8L264.5,583.3L265.0,581.8L265.5,583.0L266.0,581.2L266.5,580.2L267.0,580.6L267.5,580.7L268.0,582.7L268.5,584.7L269.0,586.6L269.5,590.0L270.0,588.7L270.5,594.0L271.0,593.0L271.5,594.4L272.0,593.4L272.5,588.7L273.0,588.0L273.5,586.6L274.0,581.7L274.5,585.4L275.0,581.6L275.5,585.4L276.0,583.5L276.5,584.0L277.0,584.5L277.5,581.4L278.0,583.4L278.5,585.0L279.0,583.1L279.5,583.1L280.0,582.4L280.5,582.3L281.0,583.2L281.5,583.1L282.0,583.8L282.5,584.8L283.0,581.6L283.5,583.6L284.0,583.1L284.5,585.5L285.0,581.4L285.5,581.9L286.0,585.3L286.5,583.7L287.0,581.7L287.5,585.3L288.0,583.8L288.5,582.9L289.0,582.7L289.5,581.2L290.0,585.0L290.5,581.4L291.0,581.2L291.5,585.5L292.0,583.7L292.5,584.7L293.0,591.2L293.5,593.8L294.0,594.7L294.5,597.6L295.0,598.4L295.5,595.7L296.0,589.9L296.5,591.7L297.0,586.9L297.5,582.4L298.0,583.2L298.5,584.8L299.0,584.3L299.5,585.5L300.0,582.4L300.5,582.7L301.0,582.7L301.5,582.5L302.0,584.9L302.5,584.3L303.0,584.0L303.5,584.7L304.0,585.6L304.5,583.8L305.0,581.4L305.5,582.9L306.0,581.5L306.5,584.0L307.0,584.9L307.5,583.9L308.0,584.8L308.5,584.7L309.0,582.5L309.5,583.1L310.0,583.4L310.5,584.6L311.0,584.4L311.5,582.5L312.0,585.5L312.5,581.4L313.0,583.2L313.5,583.6L314.0,585.4L314.5,581.4L315.0,581.5L315.5,583.7L316.0,583.6L316.5,589.4L317.0,591.4L317.5,593.8L318.0,597.7L318.5,598.3L319.0,595.9L319.5,592.8L320.0,587.4L320.5,586.2L321.0,586.0L321.5,583.1L322.0,585.4L322.5,583.4L323.0,584.0L323.5,584.7L324.0,583.6L324.5,583.6L325.0,585.3L325.5,584.8L326.0,582.1L326.5,585.7L327.0,585.1L327.5,583.1L328.0,584.6L328.5,582.5L329.0,581.9L329.5,577.7L330.0,582.7L330.5,583.6L331.0,585.4L331.5,585.2L332.0,585.1L332.5,585.1L333.0,584.3L333.5,584.9L334.0,582.1L334.5,583.5L335.0,584.3L335.5,585.4L336.0,582.1L336.5,584.2L337.0,582.6L337.5,585.0L338.0,582.0L338.5,581.6L339.0,584.8L339.5,585.2L340.0,587.1L340.5,590.1L341.0,590.9L341.5,596.3L342.0,597.1L342.5,594.5L343.0,589.5L343.5,590.8L344.0,586.2L344.5,584.4L345.0,579.7L345.5,581.4L346.0,580.5L346.5,573.1L347.0,579.4L347.5,579.9L348.0,580.6L348.5,581.8L349.0,581.3L349.5,581.1L350.0,579.6L350.5,578.9L351.0,583.1L351.5,578.8L352.0,581.2L352.5,582.7L353.0,576.6L353.5,574.3L354.0,578.8L354.5,580.5L355.0,579.4L355.5,579.0L356.0,582.2L356.5,579.1L357.0,581.7L357.5,578.6L358.0,578.6L358.5,581.4L359.0,582.3L359.5,581.6L360.0,574.7L360.5,580.3L361.0,582.5L361.5,579.5L362.0,581.3L362.5,579.0L363.0,579.7L363.5,582.7L364.0,586.9L364.5,589.8L365.0,587.6L365.5,591.7L366.0,584.3L366.5,581.8L367.0,581.5L367.5,580.8L368.0,581.1L368.5,582.5L369.0,580.2L369.5,579.6L370.0,580.9L370.5,581.1L371.0,578.5L371.5,577.7L372.0,578.1L372.5,578.7L373.0,577.9L373.5,578.2L374.0,577.2L374.5,576.0L375.0,575.4L375.5,574.3L376.0,574.3L376.5,575.0L377.0,573.8L377.5,573.6L378.0,574.2L378.5,572.7L379.0,571.8L379.5,573.1L380.0,572.9L380.5,573.2L381.0,571.9L381.5,569.9L382.0,571.6L382.5,568.8L383.0,568.3L383.5,567.7L384.0,569.4L384.5,566.4L385.0,565.4L385.5,566.6L386.0,566.1L386.5,566.2L387.0,565.6L387.5,564.7L388.0,563.9L388.5,563.8L389.0,561.7L389.5,561.0L390.0,562.3L390.5,561.6L391.0,559.5L391.5,560.7L392.0,559.2L392.5,557.7L393.0,558.4L393.5,556.2L394.0,556.2L394.5,555.2L395.0,556.9L395.5,554.7L396.0,554.8L396.5,554.9L397.0,553.2L397.5,553.5L398.0,553.6L398.5,554.2L399.0,551.4L399.5,551.6L400.0,550.1L400.5,548.8L401.0,546.0L401.5,542.2L402.0,541.3L402.5,536.5L403.0,536.0L403.5,531.8L404.0,528.7L404.5,529.4L405.0,528.8L405.5,528.8L406.0,530.7L406.5,529.3L407.0,530.9L407.5,528.3L408.0,529.2L408.5,529.7L409.0,530.6L409.5,529.0L410.0,530.8L410.5,528.9L411.0,528.8L411.5,529.0L412.0,530.5L412.5,530.9L413.0,530.2L413.5,528.6L414.0,528.7L414.5,530.8L415.0,530.6L415.5,529.3L416.0,530.3L416.5,530.5L417.0,529.6L417.5,530.8L418.0,530.7L418.5,530.3L419.0,528.9L419.5,528.9L420.0,530.5L420.5,531.5L421.0,533.9L421.5,533.4L422.0,535.8L422.5,537.1L423.0,537.4L423.5,537.5L424.0,539.7L424.5,541.8L425.0,541.9L425.5,545.0L426.0,545.5L426.5,547.1L427.0,547.5L427.5,550.9L428.0,551.8L428.5,551.2L429.0,551.2L429.5,552.3L430.0,554.5L430.5,552.9L431.0,555.9L431.5,555.8L432.0,554.9L432.5,558.2L433.0,557.4L433.5,560.0L434.0,559.4L434.5,560.9L435.0,559.1L435.5,562.4L436.0,560.8L436.5,561.0L437.0,561.0L437.5,562.4L438.0,563.5L438.5,562.3L439.0,563.6L439.5,561.6L440.0,564.7L440.5,562.8L441.0,564.2L441.5,564.2L442.0,564.2L442.5,564.2L443.0,564.8L443.5,562.9L444.0,562.9L444.5,564.2L445.0,564.1L445.5,563.6L446.0,564.9L446.5,564.2L447.0,563.9L447.5,565.3L448.0,566.4L448.5,566.3L449.0,567.2L449.5,565.5L450.0,564.8L450.5,565.8L451.0,565.5L451.5,567.1L452.0,567.1L452.5,569.0L453.0,569.6L453.5,570.0L454.0,569.8L454.5,569.4L455.0,569.0L455.5,569.7L456.0,570.2L456.5,569.6L457.0,569.6L457.5,571.0L458.0,571.3L458.5,571.5L459.0,572.2L459.5,571.9L460.0,573.8L460.5,572.1L461.0,574.3L461.5,574.7L462.0,574.4L462.5,573.6L463.0,574.8L463.5,576.1L464.0,574.1L464.5,576.1L465.0,576.1L465.5,574.5L466.0,576.0L466.5,574.9L467.0,577.1L467.5,576.7L468.0,576.8L468.5,576.9L469.0,577.4L469.5,577.0L470.0,577.0L470.5,579.4L471.0,577.8L471.5,576.7L472.0,579.0L472.5,578.7L473.0,578.9L473.5,577.8L474.0,579.1L474.5,578.5L475.0,579.2L475.5,580.6L476.0,578.5L476.5,580.1L477.0,581.3L477.5,581.3L478.0,580.3L478.5,581.2L479.0,582.6L479.5,580.4L480.0,580.6L480.5,581.8L481.0,583.7L481.5,581.7L482.0,582.6L482.5,584.5L483.0,583.4L483.5,582.2L484.0,584.5L484.5,582.7L485.0,583.0L485.5,586.1L486.0,583.6L486.5,588.4L487.0,587.1L487.5,586.2L488.0,581.2L488.5,582.4L489.0,584.7L489.5,583.8L490.0,585.7L490.5,584.1L491.0,585.1L491.5,584.2L492.0,585.3L492.5,585.1L493.0,584.7L493.5,582.5L494.0,581.7L494.5,584.3L495.0,583.7L495.5,582.1L496.0,581.9L496.5,582.0L497.0,584.2L497.5,581.8L498.0,583.4L498.5,584.0L499.0,583.7L499.5,582.6L500.0,582.6L500.5,585.1L501.0,584.1L501.5,584.4L502.0,581.1L502.5,585.3L503.0,585.0L503.5,585.2L504.0,584.4L504.5,584.7L505.0,582.3L505.5,584.7L506.0,585.4L506.5,589.9L507.0,590.1L507.5,591.2L508.0,595.0L508.5,596.7L509.0,597.1L509.5,592.2L510.0,589.2L510.5,589.8L511.0,586.6L511.5,583.3L512.0,584.1L512.5,583.8L513.0,584.9L513.5,583.1L514.0,582.9L514.5,582.1L515.0,581.2L515.5,585.5L516.0,581.5L516.5,583.8L517.0,582.9L517.5,581.2L518.0,585.7L518.5,583.3L519.0,584.9L519.5,584.1L520.0,581.2L520.5,583.9L521.0,583.5L521.5,582.4L522.0,584.9L522.5,582.2L523.0,584.1L523.5,581.4L524.0,583.4L524.5,581.8L525.0,584.5L525.5,583.9L526.0,582.1L526.5,584.7L527.0,583.4L527.5,584.7L528.0,583.4L528.5,581.7L529.0,583.2L529.5,584.1L530.0,585.6L530.5,588.2L531.0,592.2L531.5,592.4L532.0,598.3L532.5,595.9L533.0,589.8L533.5,587.8L534.0,588.4L534.5,583.0L535.0,580.4L535.5,582.0L536.0,579.7L536.5,581.3L537.0,579.4L537.5,579.7L538.0,579.1L538.5,580.1L539.0,581.4L539.5,579.0L540.0,579.8L540.5,580.7L541.0,581.3L541.5,578.9L542.0,582.5L542.5,579.4L543.0,581.7L543.5,578.8L544.0,580.9L544.5,579.3L545.0,580.7L545.5,579.4L546.0,581.1L546.5,578.7L547.0,580.0L547.5,582.6L548.0,580.9L548.5,580.5L549.0,581.6L549.5,579.5L550.0,581.3L550.5,582.1L551.0,581.2L551.5,580.0L552.0,580.1L552.5,579.6L553.0,581.8L553.5,581.1L554.0,587.3L554.5,588.4L555.0,592.7L555.5,595.1L556.0,598.8L556.5,590.0L557.0,592.6L557.5,590.7L558.0,586.1L558.5,587.2L559.0,583.2L559.5,582.7L560.0,583.6L560.5,582.0L561.0,584.4L561.5,584.3L562.0,581.4L562.5,582.9L563.0,584.3L563.5,581.8L564.0,584.0L564.5,584.8L565.0,581.8L565.5,583.7L566.0,585.6L566.5,583.8L567.0,584.3L567.5,583.0L568.0,583.6L568.5,581.8L569.0,583.7L569.5,584.8L570.0,581.2L570.5,583.9L571.0,585.2L571.5,579.6L572.0,584.8L572.5,581.5L573.0,584.8L573.5,578.8L574.0,585.2L574.5,583.6L575.0,582.4L575.5,584.1L576.0,585.3L576.5,584.6L577.0,586.7L577.5,585.6L578.0,582.8L578.5,590.3L579.0,593.1L579.5,596.3L580.0,597.2L580.5,593.8L581.0,593.9L581.5,588.1L582.0,587.3L582.5,585.9L583.0,582.2L583.5,584.3L584.0,576.2L584.5,581.2L585.0,582.8L585.5,579.3L586.0,582.8L586.5,584.6L587.0,582.2L587.5,583.2L588.0,582.4L588.5,584.1L589.0,584.2L589.5,585.0L590.0,582.3L590.5,584.2L591.0,583.1L591.5,582.3L592.0,583.7L592.5,583.0L593.0,584.3L593.5,582.6L594.0,583.3L594.5,581.2L595.0,583.4L595.5,585.6L596.0,583.1L596.5,578.4L597.0,581.3L597.5,583.4L598.0,581.5L598.5,585.3L599.0,583.3L599.5,582.7L600.0,585.6L600.5,583.6L601.0,584.9L601.5,586.8L602.0,592.8L602.5,594.6L603.0,594.9L603.5,599.0L604.0,593.4L604.5,591.9L605.0,588.8L605.5,588.9L606.0,587.5L606.5,582.9L607.0,584.0L607.5,581.9L608.0,582.2L608.5,581.8L609.0,581.6L609.5,585.7L610.0,584.2L610.5,581.3L611.0,583.2L611.5,585.2L612.0,584.9L612.5,581.8L613.0,583.5L613.5,581.3L614.0,584.5L614.5,584.2L615.0,582.2L615.5,584.1L616.0,585.2L616.5,582.0L617.0,583.3L617.5,582.3L618.0,584.2L618.5,584.9L619.0,582.2L619.5,584.8L620.0,584.9L620.5,585.2L621.0,583.9L621.5,581.6L622.0,582.0L622.5,584.6L623.0,583.0L623.5,582.4L624.0,585.2L624.5,586.1L625.0,585.0L625.5,588.2L626.0,593.0L626.5,593.7L627.0,596.4L627.5,598.2L628.0,595.9L628.5,592.1L629.0,587.3L629.5,588.7L630.0,584.2L630.5,581.8L631.0,583.6L631.5,583.4L632.0,581.3L632.5,584.0L633.0,581.9L633.5,582.5L634.0,582.3L634.5,581.7L635.0,584.0L635.5,582.5L636.0,585.0L636.5,581.9L637.0,581.2L637.5,582.7L638.0,583.7L638.5,584.7L639.0,583.1L639.5,582.0L640.0,581.1L640.5,584.6L641.0,581.1L641.5,583.8L642.0,584.1L642.5,583.2L643.0,584.4L643.5,585.1L644.0,585.3L644.5,583.5L645.0,582.8L645.5,585.3L646.0,581.7L646.5,583.0L647.0,582.8L647.5,582.7L648.0,584.7L648.5,587.1L649.0,589.2L649.5,592.6L650.0,592.1L650.5,595.7L651.0,599.0L651.5,597.4L652.0,595.1L652.5,589.7L653.0,588.7L653.5,586.6L654.0,581.3L654.5,581.6L655.0,582.8L655.5,585.1L656.0,582.5L656.5,583.1L657.0,582.0L657.5,581.5L658.0,581.2L658.5,585.2L659.0,582.9L659.5,582.2L660.0,581.4L660.5,583.3L661.0,582.2L661.5,585.4L662.0,585.0L662.5,585.2L663.0,585.6L663.5,584.2L664.0,582.8L664.5,582.4L665.0,584.1L665.5,584.5L666.0,582.7L666.5,582.9L667.0,581.7L667.5,582.8L668.0,582.9L668.5,583.8L669.0,584.5L669.5,583.4L670.0,584.2L670.5,582.4L671.0,585.4L671.5,582.0L672.0,586.8L672.5,586.8L673.0,590.7L673.5,591.9L674.0,592.1L674.5,598.5L675.0,598.8L675.5,593.5L676.0,592.7L676.5,591.3L677.0,587.4L677.5,580.0L678.0,583.2L678.5,584.3L679.0,581.3L679.5,581.7L680.0,583.7L680.5,583.8L681.0,584.0L681.5,581.5L682.0,584.3L682.5,583.4L683.0,582.8L683.5,584.6L684.0,585.7L684.5,585.6L685.0,585.3L685.5,581.9L686.0,581.5L686.5,581.4L687.0,581.2L687.5,583.4L688.0,582.8L688.5,585.5L689.0,584.8L689.5,582.8L690.0,582.5L690.5,583.5L691.0,582.5L691.5,584.4L692.0,581.5L692.5,584.3L693.0,582.8L693.5,581.4L694.0,582.8L694.5,584.7L695.0,583.9L695.5,581.2L696.0,587.6L696.5,587.8L697.0,588.6L697.5,593.6L698.0,596.0L698.5,599.5L699.0,595.0L699.5,592.0L700.0,591.9L700.5,588.4L701.0,584.8L701.5,585.4L702.0,582.7L702.5,583.7L703.0,584.4L703.5,583.3L704.0,581.9L704.5,581.5L705.0,582.6L705.5,581.5L706.0,584.0L706.5,583.5L707.0,581.9L707.5,585.4L708.0,583.1L708.5,581.2L709.0,583.7L709.5,583.6L710.0,581.7L710.5,582.6L711.0,584.9L711.5,585.6L712.0,582.3L712.5,581.5L713.0,583.4L713.5,585.4L714.0,580.5L714.5,584.3L715.0,584.1L715.5,583.4L716.0,582.1L716.5,584.1L717.0,582.5L717.5,581.2L718.0,584.7L718.5,582.1L719.0,584.3L719.5,580.8L720.0,588.2L720.5,590.2L721.0,592.6L721.5,594.6L722.0,597.1L722.5,594.9L723.0,595.5L723.5,589.6L724.0,591.2L724.5,589.0L725.0,585.8L725.5,585.3L726.0,581.2L726.5,582.6L727.0,584.2L727.5,581.5L728.0,585.3L728.5,582.6L729.0,582.0L729.5,585.2L730.0,583.6L730.5,583.2L731.0,583.7L731.5,584.1L732.0,584.6L732.5,584.2L733.0,583.6L733.5,583.8L734.0,584.1L734.5,582.6L735.0,582.5L735.5,583.9L736.0,583.1L736.5,582.5L737.0,582.4L737.5,582.5L738.0,585.3L738.5,583.9L739.0,583.7L739.5,581.4L740.0,582.0L740.5,585.1L741.0,582.6L741.5,582.2L742.0,582.8L742.5,584.0L743.0,581.6L743.5,586.9L744.0,587.7L744.5,590.5L745.0,593.3L745.5,596.2L746.0,597.2L746.5,596.1L747.0,595.4L747.5,591.5L748.0,588.1L748.5,587.1L749.0,583.0L749.5,584.2L750.0,582.2L750.5,584.5L751.0,581.6L751.5,583.8L752.0,583.9L752.5,584.8L753.0,581.2L753.5,583.2L754.0,585.0L754.5,585.3L755.0,585.0L755.5,575.7L756.0,582.4L756.5,583.0L757.0,584.4L757.5,581.3L758.0,583.7L758.5,581.7L759.0,584.5L759.5,581.8L760.0,584.0L760.5,584.4L761.0,581.4L761.5,581.7L762.0,581.7L762.5,585.3L763.0,584.8L763.5,584.8L764.0,581.8L764.5,581.6L765.0,582.1L765.5,583.0L766.0,584.9L766.5,581.2L767.0,582.4L767.5,587.8L768.0,588.7L768.5,592.8L769.0,596.0L769.5,594.8L770.0,596.6L770.5,595.6L771.0,591.3L771.5,588.2L772.0,586.6L772.5,583.5L773.0,581.4L773.5,584.7L774.0,581.9L774.5,583.1L775.0,585.3L775.5,584.6L776.0,581.4L776.5,585.1L777.0,584.1L777.5,585.5L778.0,582.9L778.5,583.2L779.0,582.5L779.5,583.6L780.0,584.9L780.5,585.2L781.0,583.9L781.5,582.9L782.0,585.2L782.5,585.4L783.0,585.3L783.5,583.6L784.0,584.9L784.5,584.2L785.0,583.6L785.5,584.9L786.0,585.3L786.5,584.9L787.0,581.3L787.5,585.4L788.0,585.0L788.5,584.6L789.0,581.5L789.5,584.3L790.0,582.6L790.5,582.4L791.0,583.8L791.5,588.5L792.0,589.1L792.5,592.0L793.0,595.2L793.5,599.7L794.0,596.6L794.5,595.0L795.0,589.2L795.5,589.3L796.0,585.4L796.5,585.0L797.0,581.5L797.5,583.5L798.0,584.1L798.5,585.5L799.0,584.4L799.5,582.7L800.0,582.4L800.5,585.2L801.0,581.8L801.5,584.1L802.0,584.3L802.5,582.3L803.0,585.5L803.5,583.4L804.0,582.2L804.5,583.5L805.0,582.2L805.5,585.4L806.0,583.8L806.5,584.8L807.0,582.9L807.5,584.9L808.0,582.2L808.5,582.8L809.0,585.0L809.5,581.5L810.0,582.5L810.5,581.9L811.0,585.7L811.5,582.4L812.0,585.0L812.5,581.4L813.0,582.7L813.5,581.5L814.0,585.3L814.5,583.8L815.0,586.1L815.5,588.3L816.0,592.5L816.5,593.7L817.0,596.0L817.5,596.8L818.0,593.2L818.5,594.1L819.0,588.1L819.5,587.2L820.0,585.6L820.5,584.7L821.0,582.1L821.5,583.5L822.0,584.8L822.5,583.2L823.0,581.1L823.5,582.8L824.0,582.3L824.5,581.2L825.0,585.3L825.5,584.7L826.0,581.2L826.5,581.4L827.0,585.3L827.5,581.7L828.0,581.7L828.5,583.5L829.0,582.9L829.5,583.0L830.0,585.3L830.5,582.8L831.0,583.5L831.5,583.8L832.0,585.1L832.5,584.8L833.0,585.3L833.5,582.6L834.0,582.4L834.5,585.3L835.0,582.4L835.5,582.0L836.0,584.7L836.5,583.9L837.0,582.7L837.5,582.1L838.0,575.9L838.5,580.6L839.0,588.8L839.5,592.2L840.0,590.7L840.5,594.4L841.0,598.2L841.5,596.7L842.0,590.8L842.5,588.8L843.0,586.4L843.5,586.1L844.0,584.4L844.5,583.9L845.0,583.9L845.5,581.3L846.0,585.5L846.5,582.8L847.0,583.8L847.5,583.8L848.0,583.7L848.5,582.0L849.0,584.3L849.5,582.5L850.0,584.9L850.5,581.8L851.0,585.7L851.5,583.2L852.0,583.1L852.5,581.4L853.0,581.2L853.5,582.0L854.0,584.7L854.5,584.9L855.0,583.6L855.5,581.5L856.0,583.9L856.5,583.9L857.0,585.2L857.5,585.0L858.0,585.7L858.5,582.9L859.0,584.9L859.5,576.9L860.0,584.1L860.5,584.1L861.0,582.5L861.5,581.3L862.0,583.9L862.5,584.7L863.0,590.0L863.5,593.2L864.0,588.4L864.5,596.7L865.0,598.4L865.5,594.4L866.0,590.5L866.5,589.4L867.0,585.2L867.5,586.0L868.0,584.0L868.5,584.9L869.0,583.8L869.5,583.5L870.0,581.2L870.5,585.0L871.0,582.6L871.5,585.1L872.0,581.4L872.5,584.1L873.0,584.6L873.5,585.3L874.0,585.7L874.5,581.4L875.0,578.5L875.5,583.8L876.0,584.6L876.5,581.4L877.0,584.0L877.5,585.4L878.0,581.6L878.5,584.2L879.0,582.8L879.5,583.7L880.0,583.1L880.5,584.0L881.0,581.7L881.5,585.0L882.0,581.5L882.5,584.4L883.0,583.6L883.5,585.0L884.0,581.2L884.5,583.2L885.0,584.2L885.5,584.2L886.0,583.8L886.5,590.0L887.0,590.8L887.5,594.1L888.0,596.7L888.5,600.2L889.0,596.5L889.5,592.3L890.0,592.2L890.5,586.3L891.0,581.6L891.5,585.3L892.0,581.2L892.5,584.2L893.0,581.6L893.5,583.7L894.0,584.5L894.5,583.6L895.0,584.9L895.5,583.3L896.0,584.7L896.5,584.7L897.0,582.0L897.5,585.2L898.0,585.7L898.5,585.4L899.0,582.4L899.5,584.1L900.0,584.3L900.5,585.2L901.0,581.5L901.5,581.9L902.0,583.4L902.5,583.1L903.0,583.4L903.5,583.8L904.0,584.7L904.5,585.7L905.0,584.4L905.5,582.8L906.0,585.2L906.5,582.3L907.0,585.6L907.5,583.0L908.0,581.2L908.5,582.5L909.0,584.4L909.5,583.3L910.0,587.3L910.5,588.2L911.0,589.9L911.5,596.2L912.0,598.5L912.5,597.9L913.0,594.9L913.5,592.3L914.0,591.5L914.5,584.9L915.0,585.2L915.5,584.5L916.0,585.3L916.5,581.8L917.0,584.6L917.5,581.3L918.0,585.2L918.5,583.0L919.0,582.8L919.5,582.0L920.0,585.5L920.5,585.6L921.0,579.6L921.5,584.3L922.0,584.0L922.5,581.4L923.0,584.6L923.5,585.1L924.0,582.1L924.5,583.0L925.0,581.7L925.5,581.8L926.0,584.0L926.5,583.4L927.0,581.5L927.5,582.0L928.0,583.5L928.5,576.9L929.0,585.7L929.5,584.5L930.0,578.2L930.5,583.1L931.0,581.2L931.5,584.2L932.0,581.5L932.5,584.7L933.0,584.1L933.5,586.3L934.0,587.3L934.5,590.6L935.0,591.6L935.5,596.6L936.0,596.4L936.5,595.1L937.0,592.9L937.5,592.1L938.0,586.2L938.5,586.6L939.0,585.7L939.5,578.5L940.0,584.5L940.5,585.3L941.0,581.6L941.5,584.1L942.0,582.8L942.5,582.9L943.0,584.8L943.5,581.9L944.0,584.0L944.5,584.2L945.0,581.5L945.5,584.7L946.0,582.4L946.5,582.9L947.0,581.8L947.5,582.5L948.0,583.0L948.5,584.8L949.0,584.8L949.5,582.9L950.0,582.4L950.5,582.1L951.0,585.2L951.5,585.0L952.0,584.0L952.5,585.6L953.0,585.6L953.5,582.6L954.0,582.2L954.5,583.3L955.0,585.7L955.5,581.5L956.0,584.5L956.5,582.8L957.0,585.6L957.5,588.9L958.0,588.1L958.5,589.8L959.0,592.9L959.5,594.6L960.0,598.1L960.5,595.3L961.0,591.0L961.5,588.1L962.0,586.0L962.5,586.1L963.0,584.3L963.5,582.3L964.0,582.3L964.5,582.4L965.0,585.4L965.5,583.4L966.0,581.2L966.5,584.9L967.0,585.5L967.5,584.2L968.0,581.3L968.5,582.1L969.0,585.6L969.5,582.4L970.0,585.7L970.5,583.8L971.0,581.7L971.5,585.3L972.0,582.9L972.5,581.3L973.0,582.0L973.5,582.8L974.0,584.0L974.5,584.6L975.0,584.7L975.5,582.5L976.0,582.8L976.5,583.3L977.0,585.0L977.5,582.4L978.0,581.7L978.5,584.0L979.0,582.9L979.5,583.2L980.0,581.8L980.5,585.3L981.0,585.3L981.5,586.2L982.0,589.0L982.5,592.7L983.0,594.7L983.5,599.9L984.0,593.4L984.5,592.7L985.0,589.2L985.5,587.4L986.0,580.6L986.5,581.8L987.0,582.9L987.5,580.5L988.0,582.7L988.5,584.2L989.0,584.5L989.5,581.2L990.0,583.6L990.5,584.6L991.0,584.1L991.5,584.1L992.0,583.4L992.5,583.7L993.0,582.1L993.5,583.6L994.0,581.4L994.5,582.6L995.0,584.3L995.5,585.7L996.0,583.8L996.5,585.5L997.0,583.1L997.5,584.1L998.0,583.4L998.5,585.7L999.0,581.6L999.5,585.5L1000.0,582.2L1000.5,584.6L1001.0,584.7L1001.5,584.4L1002.0,582.8L1002.5,582.4L1003.0,585.3L1003.5,588.1L1004.0,591.2L1004.5,594.4L1005.0,597.5L1005.5,600.6L1006.0,603.7L1006.5,606.9L1007.0,610.0L1007.5,613.1L1008.0,616.2" fill="none" stroke="#1616e6" stroke-width="2.3"/><text transform="translate(30,563) rotate(-90)" font-size="14" fill="#e6e6e6" text-anchor="middle" textLength="98" lengthAdjust="spacingAndGlyphs">Power Level (dBm)</text><rect x="72" y="640" width="1184" height="1.3" fill="#aaa"/><rect x="71.1" y="638" width="1" height="3" fill="#ddd"/><text x="71.6" y="653.6" font-size="9.4" fill="#e6e6e6" font-weight="normal" letter-spacing="1.2" text-anchor="middle" >4 900</text><rect x="150.1" y="638" width="1" height="3" fill="#ddd"/><text x="150.6" y="653.6" font-size="9.4" fill="#e6e6e6" font-weight="normal" letter-spacing="1.2" text-anchor="middle" >5 000</text><rect x="229.1" y="638" width="1" height="3" fill="#ddd"/><text x="229.6" y="653.6" font-size="9.4" fill="#e6e6e6" font-weight="normal" letter-spacing="1.2" text-anchor="middle" >5 100</text><rect x="308.1" y="638" width="1" height="3" fill="#ddd"/><text x="308.6" y="653.6" font-size="9.4" fill="#e6e6e6" font-weight="normal" letter-spacing="1.2" text-anchor="middle" >5 200</text><rect x="387.1" y="638" width="1" height="3" fill="#ddd"/><text x="387.6" y="653.6" font-size="9.4" fill="#e6e6e6" font-weight="normal" letter-spacing="1.2" text-anchor="middle" >5 300</text><rect x="466.1" y="638" width="1" height="3" fill="#ddd"/><text x="466.6" y="653.6" font-size="9.4" fill="#e6e6e6" font-weight="normal" letter-spacing="1.2" text-anchor="middle" >5 400</text><rect x="545.1" y="638" width="1" height="3" fill="#ddd"/><text x="545.6" y="653.6" font-size="9.4" fill="#e6e6e6" font-weight="normal" letter-spacing="1.2" text-anchor="middle" >5 500</text><rect x="624.1" y="638" width="1" height="3" fill="#ddd"/><text x="624.6" y="653.6" font-size="9.4" fill="#e6e6e6" font-weight="normal" letter-spacing="1.2" text-anchor="middle" >5 600</text><rect x="703.1" y="638" width="1" height="3" fill="#ddd"/><text x="703.6" y="653.6" font-size="9.4" fill="#e6e6e6" font-weight="normal" letter-spacing="1.2" text-anchor="middle" >5 700</text><rect x="782.1" y="638" width="1" height="3" fill="#ddd"/><text x="782.6" y="653.6" font-size="9.4" fill="#e6e6e6" font-weight="normal" letter-spacing="1.2" text-anchor="middle" >5 800</text><rect x="861.1" y="638" width="1" height="3" fill="#ddd"/><text x="861.6" y="653.6" font-size="9.4" fill="#e6e6e6" font-weight="normal" letter-spacing="1.2" text-anchor="middle" >5 900</text><rect x="940.1" y="638" width="1" height="3" fill="#ddd"/><text x="940.6" y="653.6" font-size="9.4" fill="#e6e6e6" font-weight="normal" letter-spacing="1.2" text-anchor="middle" >6 000</text><rect x="1019.1" y="638" width="1" height="3" fill="#ddd"/><text x="1019.6" y="653.6" font-size="9.4" fill="#e6e6e6" font-weight="normal" letter-spacing="1.2" text-anchor="middle" >6 100</text><rect x="1098.1" y="638" width="1" height="3" fill="#ddd"/><text x="1098.6" y="653.6" font-size="9.4" fill="#e6e6e6" font-weight="normal" letter-spacing="1.2" text-anchor="middle" >6 200</text><rect x="1177.1" y="638" width="1" height="3" fill="#ddd"/><text x="1177.6" y="653.6" font-size="9.4" fill="#e6e6e6" font-weight="normal" letter-spacing="1.2" text-anchor="middle" >6 300</text><text x="664" y="671" font-size="12.5" fill="#e6e6e6" font-weight="normal" letter-spacing="0.6" text-anchor="middle" >MHz</text><rect x="979" y="487" width="20" height="1.6" fill="#c8c020"/><text x="1003" y="491.5" font-size="9.6" fill="#e6e6e6" font-weight="normal" letter-spacing="1.15" text-anchor="start" >Current</text><path d="M1048 492 v-3 a4 4 0 0 1 9 0 v3z" fill="#10d010"/><text x="1063.5" y="491.5" font-size="9.6" fill="#e6e6e6" font-weight="normal" letter-spacing="1.15" text-anchor="start" >Average</text><rect x="1112" y="485" width="8" height="7" rx="1" fill="#1818f0"/><text x="1127" y="491.5" font-size="9.6" fill="#e6e6e6" font-weight="normal" letter-spacing="1.15" text-anchor="start" >Maximum</text><rect x="1184" y="484" width="7" height="9" fill="#3a7070"/><text x="1197" y="491.5" font-size="9.6" fill="#e6e6e6" font-weight="normal" letter-spacing="1.15" text-anchor="start" >Channels</text><defs><linearGradient id="btn" x1="0" x2="1"><stop offset="0" stop-color="#e6b270" stop-opacity="0.55"/><stop offset="0.45" stop-color="#e2b478" stop-opacity="0.5"/><stop offset="0.5" stop-color="#a8a090" stop-opacity="0.55"/><stop offset="0.58" stop-color="#e0b070" stop-opacity="0.45"/><stop offset="1" stop-color="#e0b070" stop-opacity="0.45"/></linearGradient><radialGradient id="chr" cx="0.5" cy="0.5" r="0.5"><stop offset="0" stop-color="#4a90e0"/><stop offset="1" stop-color="#2060c0"/></radialGradient><linearGradient id="fold" x1="0" x2="1"><stop offset="0" stop-color="#f4e4a0"/><stop offset="1" stop-color="#e8d070"/></linearGradient></defs><path d="M11,691 L22,689.5 L22,700 L11,700 Z M23.5,689.3 L36,687.5 L36,700 L23.5,700 Z M11,701.5 L22,701.5 L22,712 L11,710.5 Z M23.5,701.5 L36,701.5 L36,714 L23.5,712.2 Z" fill="#fff6ea"/><rect x="48.5" y="683.5" width="75" height="36" fill="#e9bb80" opacity="0.45" stroke="#f2cc98" stroke-opacity="0.7"/><rect x="80" y="684" width="7" height="35" fill="#9a9a9a" opacity="0.22"/><path d="M55,688 L63,690 L63,715 L55,713 Z" fill="#f6eab4"/><path d="M63,690 L75,691 L75,713 L63,715 Z" fill="#e6d47a"/><path d="M57,689 L74,690.5 L74,692 L57,691 Z" fill="#fff6d0" opacity="0.8"/><text x="87.5" y="705.5" font-size="12" fill="#fff4e4">кам ...</text><rect x="125.5" y="683.5" width="74" height="36" fill="#e9bb80" opacity="0.45" stroke="#f2cc98" stroke-opacity="0.7"/><rect x="177" y="684" width="8" height="35" fill="#9a9a9a" opacity="0.22"/><path d="M132,688 L140,690 L140,715 L132,713 Z" fill="#f6eab4"/><path d="M140,690 L152,691 L152,713 L140,715 Z" fill="#e6d47a"/><path d="M134,689 L151,690.5 L151,692 L134,691 Z" fill="#fff6d0" opacity="0.8"/><text x="164" y="705.5" font-size="12" fill="#fff4e4">Скр...</text><rect x="216" y="688" width="20" height="26" rx="1" fill="#cfe6f8" stroke="#6aa8d8" stroke-width="1"/><rect x="218.5" y="690.5" width="15" height="6" fill="#8ec8f0"/><rect x="218.5" y="699.0" width="2.8" height="2.6" fill="#5aa0dc"/><rect x="222.5" y="699.0" width="2.8" height="2.6" fill="#5aa0dc"/><rect x="226.5" y="699.0" width="2.8" height="2.6" fill="#5aa0dc"/><rect x="230.5" y="699.0" width="2.8" height="2.6" fill="#5aa0dc"/><rect x="218.5" y="702.7" width="2.8" height="2.6" fill="#5aa0dc"/><rect x="222.5" y="702.7" width="2.8" height="2.6" fill="#5aa0dc"/><rect x="226.5" y="702.7" width="2.8" height="2.6" fill="#5aa0dc"/><rect x="230.5" y="702.7" width="2.8" height="2.6" fill="#5aa0dc"/><rect x="218.5" y="706.4" width="2.8" height="2.6" fill="#5aa0dc"/><rect x="222.5" y="706.4" width="2.8" height="2.6" fill="#5aa0dc"/><rect x="226.5" y="706.4" width="2.8" height="2.6" fill="#5aa0dc"/><rect x="230.5" y="706.4" width="2.8" height="2.6" fill="#5aa0dc"/><rect x="218.5" y="710.1" width="2.8" height="2.6" fill="#5aa0dc"/><rect x="222.5" y="710.1" width="2.8" height="2.6" fill="#5aa0dc"/><rect x="226.5" y="710.1" width="2.8" height="2.6" fill="#5aa0dc"/><rect x="230.5" y="710.1" width="2.8" height="2.6" fill="#5aa0dc"/><rect x="254.5" y="683.5" width="74" height="36" fill="#e9bb80" opacity="0.45" stroke="#f2cc98" stroke-opacity="0.7"/><text x="293" y="705.5" font-size="12" fill="#fff4e4">Сете...</text><rect x="262" y="684" width="8" height="35" fill="#a0a0a0" opacity="0.2"/><circle cx="274" cy="701" r="13" fill="#e8c020"/><path d="M274,701 L262.7,694.5 A13,13 0 0 1 285.3,694.5 Z" fill="#dc3a2a"/><path d="M274,701 L262.7,694.5 A13,13 0 0 0 274,714 Z" fill="#2ea040"/><circle cx="274" cy="701" r="6" fill="#fff"/><circle cx="274" cy="701" r="4.5" fill="#3c80d8"/><circle cx="356" cy="701" r="13.5" fill="#f0ecea"/><path d="M347,692 L356,702 L365,691 M356,702 L356,714" stroke="#e82020" stroke-width="4.2" fill="none"/><circle cx="406" cy="701" r="11" fill="none" stroke="#40b0f0" stroke-width="5"/><rect x="398" y="699.5" width="17" height="3" fill="#40b0f0"/><path d="M393,712 C396,700 408,690 420,688" stroke="#f0c030" stroke-width="2.2" fill="none"/><circle cx="456" cy="701" r="14" fill="#2aa82a"/><path d="M447,712 L444,717 L452,713 Z" fill="#2aa82a"/><circle cx="456" cy="701" r="8.5" fill="none" stroke="#e8ffe8" stroke-width="2.2"/><circle cx="456" cy="701" r="3.2" fill="none" stroke="#e8ffe8" stroke-width="2"/><circle cx="506" cy="701" r="14" fill="#2a68c0" stroke="#1a3c78" stroke-width="1.2"/><path d="M499,692 C500,702 506,708 516,709 M503,692 C504,699 508,704 516,705" stroke="#e8f0ff" stroke-width="1.8" fill="none"/><rect x="533.5" y="683.5" width="73" height="36" fill="#e9bb80" opacity="0.45" stroke="#f2cc98" stroke-opacity="0.7"/><text x="572" y="705.5" font-size="12" fill="#fff4e4">Нов...</text><path d="M545,689 L565,692 L562,714 L538,708 Z" fill="#c8f0f0"/><path d="M545,689 L565,692 L564,696 L544,693 Z" fill="#40a8b8"/><path d="M538,708 L544,693 L548,710 Z" fill="#50b0b8" opacity="0.6"/><rect x="611.5" y="683.5" width="73" height="36" fill="#e9bb80" opacity="0.45" stroke="#f2cc98" stroke-opacity="0.7"/><rect x="611.5" y="683.5" width="73" height="36" fill="#f0d0a0" opacity="0.35" stroke="#fff0d8" stroke-width="1.2"/><rect x="672" y="684" width="12" height="35" fill="#a8a8a0" opacity="0.35"/><text x="650" y="705.5" font-size="12" fill="#fff4e4">AirV...</text><rect x="616.5" y="686.5" width="27.5" height="27.5" rx="3" fill="#2f86e6"/><rect x="623.2" y="704.0" width="1.8" height="1.6" fill="#d8ecff"/><rect x="623.2" y="701.4" width="1.8" height="1.6" fill="#d8ecff"/><rect x="623.2" y="698.8" width="1.8" height="1.6" fill="#d8ecff"/><rect x="626.2" y="704.0" width="1.8" height="1.6" fill="#d8ecff"/><rect x="626.2" y="701.4" width="1.8" height="1.6" fill="#d8ecff"/><rect x="626.2" y="698.8" width="1.8" height="1.6" fill="#d8ecff"/><rect x="626.2" y="696.2" width="1.8" height="1.6" fill="#d8ecff"/><rect x="629.2" y="704.0" width="1.8" height="1.6" fill="#d8ecff"/><rect x="629.2" y="701.4" width="1.8" height="1.6" fill="#d8ecff"/><rect x="629.2" y="698.8" width="1.8" height="1.6" fill="#d8ecff"/><rect x="629.2" y="696.2" width="1.8" height="1.6" fill="#d8ecff"/><rect x="629.2" y="693.6" width="1.8" height="1.6" fill="#d8ecff"/><rect x="629.2" y="691.0" width="1.8" height="1.6" fill="#d8ecff"/><rect x="632.2" y="704.0" width="1.8" height="1.6" fill="#d8ecff"/><rect x="632.2" y="701.4" width="1.8" height="1.6" fill="#d8ecff"/><rect x="632.2" y="698.8" width="1.8" height="1.6" fill="#d8ecff"/><rect x="632.2" y="696.2" width="1.8" height="1.6" fill="#d8ecff"/><rect x="635.2" y="704.0" width="1.8" height="1.6" fill="#d8ecff"/><rect x="635.2" y="701.4" width="1.8" height="1.6" fill="#d8ecff"/><rect x="635.2" y="698.8" width="1.8" height="1.6" fill="#d8ecff"/><path d="M620,711 Q630,703 641,711 M624,711 L630,706 L636,711" stroke="#e8f4ff" stroke-width="1.2" fill="none"/><rect x="700.5" y="693.5" width="27" height="16" rx="1" fill="#fff8f0" stroke="#b07028" stroke-width="0.6"/><rect x="703.0" y="696.0" width="2.6" height="2.4" fill="#7a5a30"/><rect x="706.9" y="696.0" width="2.6" height="2.4" fill="#7a5a30"/><rect x="710.8" y="696.0" width="2.6" height="2.4" fill="#7a5a30"/><rect x="714.7" y="696.0" width="2.6" height="2.4" fill="#7a5a30"/><rect x="718.6" y="696.0" width="2.6" height="2.4" fill="#7a5a30"/><rect x="722.5" y="696.0" width="2.6" height="2.4" fill="#7a5a30"/><rect x="703.0" y="699.7" width="2.6" height="2.4" fill="#7a5a30"/><rect x="706.9" y="699.7" width="2.6" height="2.4" fill="#7a5a30"/><rect x="710.8" y="699.7" width="2.6" height="2.4" fill="#7a5a30"/><rect x="714.7" y="699.7" width="2.6" height="2.4" fill="#7a5a30"/><rect x="718.6" y="699.7" width="2.6" height="2.4" fill="#7a5a30"/><rect x="722.5" y="699.7" width="2.6" height="2.4" fill="#7a5a30"/><rect x="706" y="703.6" width="16" height="2.4" fill="#7a5a30"/><path d="M741,702 L748,697 L755,702 L748,706 Z" fill="#58b838"/><path d="M741,702 L748,706 L755,702 L755,704 L748,709 L741,704Z" fill="#6a3a20"/><path d="M764,704 Q766,697 772,697 Q778,698 778,704 Z" fill="#f0f0f0"/><circle cx="775" cy="706" r="4.5" fill="#30a030"/><path d="M772.5,706 L774.5,708 L778,704" stroke="#fff" stroke-width="1.2" fill="none"/><rect x="787" y="696" width="13" height="12" rx="2" fill="#2a8ae0"/><rect x="792" y="706" width="9" height="4" fill="#40c040"/><path d="M790,702 L797,702" stroke="#fff" stroke-width="2"/><circle cx="816" cy="702" r="6.5" fill="#e8e0d0"/><circle cx="813" cy="699" r="3" fill="#4a98e0"/><circle cx="819.5" cy="700" r="3" fill="#e04040"/><circle cx="816" cy="705.5" r="3" fill="#40c040"/><circle cx="839" cy="702" r="7.5" fill="#1a1a60"/><path d="M837,696 L837,708 M837,697 Q843,698 840,703" stroke="#d0d8ff" stroke-width="1.6" fill="none"/><rect x="858" y="682" width="10" height="38" fill="#9a9a9a" opacity="0.35"/><circle cx="860" cy="702" r="7" fill="#70b8e0"/><path d="M854,702 L864,698 L866,703 Z" fill="#304050"/><path d="M878,706 Q878,696 883.5,696 Q889,696 889,706 L891,707.5 L876,707.5 Z" fill="#fffaf4"/><circle cx="883.5" cy="709" r="1.5" fill="#fffaf4"/><path d="M900,708 Q902,698 910,697 Q912,705 906,709 Z" fill="#c07050" opacity="0.8"/><path d="M921,706 Q921,700 926,700 Q928,696 932,698 Q937,699 936,706 Z" fill="#fffaf4" stroke="#806040" stroke-width="0.5"/><circle cx="951" cy="702" r="7" fill="#f0a020"/><circle cx="951" cy="702" r="3.8" fill="none" stroke="#fff8e0" stroke-width="2"/><circle cx="974.5" cy="702" r="6.8" fill="#50c030"/><path d="M971,702.5 L973.5,705 L978,699.5" stroke="#f0fff0" stroke-width="1.4" fill="none"/><circle cx="996" cy="702" r="7.5" fill="#30b030"/><circle cx="996" cy="702" r="4.2" fill="none" stroke="#208020" stroke-width="1.5"/><circle cx="996" cy="702" r="1.6" fill="#208020"/><rect x="1012.5" y="695" width="13" height="10" fill="#8a8a8a" stroke="#3a2a1a" stroke-width="0.8"/><rect x="1013" y="706" width="4.5" height="3.2" fill="#3a2a1a"/><rect x="1020" y="706" width="4.5" height="3.2" fill="#3a2a1a"/><rect x="1033" y="694.5" width="15" height="15" fill="#18108a"/><text x="1034.2" y="706.5" font-size="10.5" fill="#e0e8ff">Ru</text><path d="M1058,696 L1058,710" stroke="#fff6ea" stroke-width="1.8"/><path d="M1059,697 L1065,697 L1065,700 L1070,700 L1070,704 L1059,704Z" fill="#fff6ea"/><rect x="1086" y="696.5" width="6" height="12" rx="1" fill="none" stroke="#fff6ea" stroke-width="1.4"/><path d="M1080,698 L1080,701 M1082.5,698 L1082.5,701 M1081.2,701 L1081.2,708" stroke="#fff6ea" stroke-width="1.2"/><rect x="1088" y="682" width="13" height="38" fill="#9a9a9a" opacity="0.3"/><path d="M1102,700 L1106,697 L1109,699 L1112,697 L1116,700 L1112,703 L1109,701 L1106,703 Z M1106,703.5 L1109,702 L1112,704 L1109,706 Z" fill="#60b0e8"/><circle cx="1113" cy="706" r="3.5" fill="#30a030"/><rect x="1124.5" y="705.5" width="2" height="2.0" fill="#fff6ea"/><rect x="1127.5" y="703.3" width="2" height="4.2" fill="#fff6ea"/><rect x="1130.5" y="701.1" width="2" height="6.4" fill="#fff6ea"/><rect x="1133.5" y="698.9" width="2" height="8.6" fill="#fff6ea"/><rect x="1136.5" y="696.7" width="2" height="10.8" fill="#fff6ea"/><path d="M1146,699.5 L1149,699.5 L1153,696 L1153,708 L1149,704.5 L1146,704.5 Z" fill="#fff6ea"/><path d="M1155.5,699 Q1157.5,702 1155.5,705 M1158,697 Q1161,702 1158,707" stroke="#fff6ea" stroke-width="1" fill="none"/><text x="1175" y="706" font-size="12" fill="#fff4e4">РУС</text><text x="1237.5" y="699" font-size="12" fill="#fff4e4" text-anchor="middle">13:23</text><text x="1236.8" y="715" font-size="12" fill="#fff4e4" text-anchor="middle">01.10.2014</text></svg></body></html>
